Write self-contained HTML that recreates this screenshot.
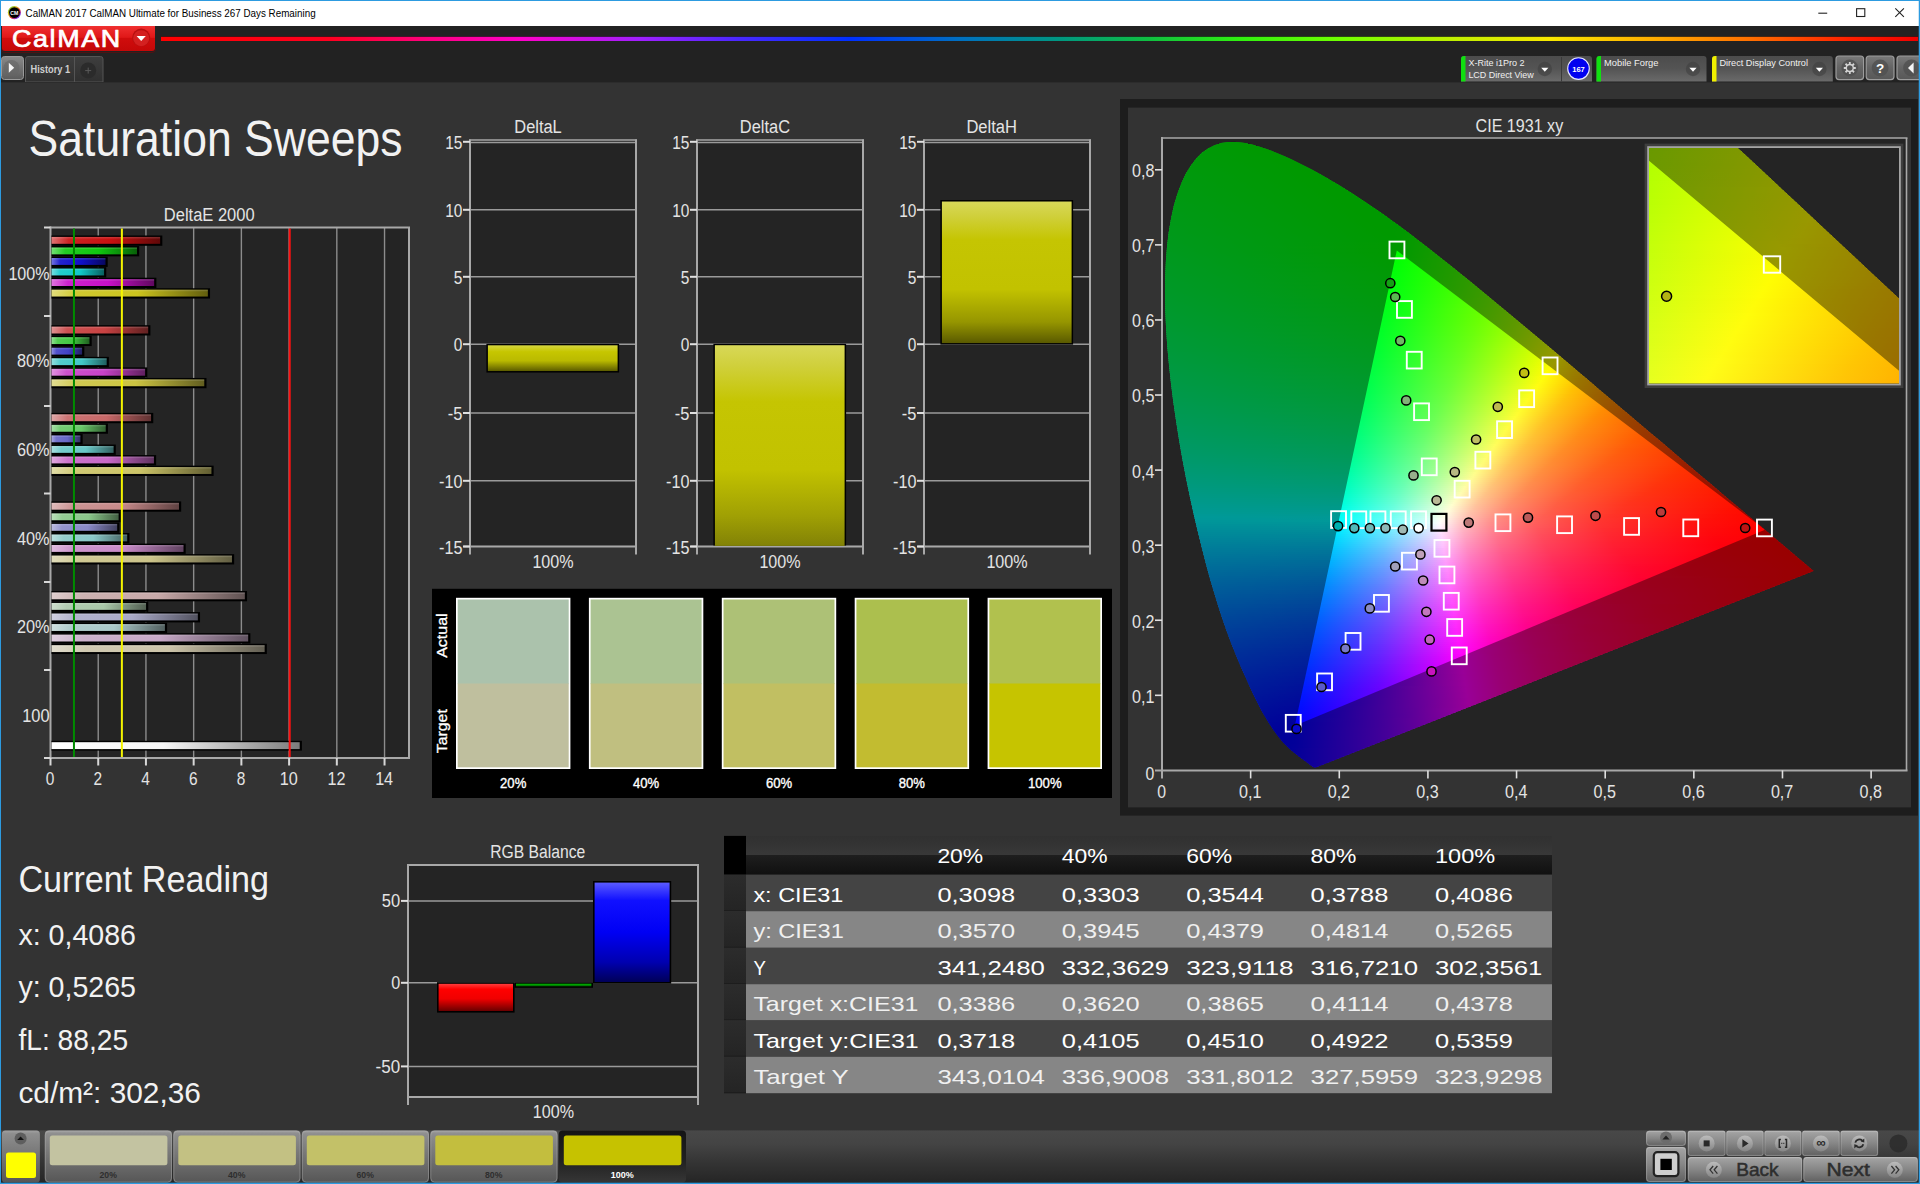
<!DOCTYPE html>
<html lang="en"><head><meta charset="utf-8"><title>CalMAN 2017 - Saturation Sweeps</title>
<style>
html,body{margin:0;padding:0;background:#333;overflow:hidden}
#app{position:absolute;left:0;top:0;width:1920px;height:1184px;overflow:hidden}
svg{display:block}
svg text{font-family:"Liberation Sans",sans-serif;white-space:pre}
</style></head><body><div id="app">
<svg width="1920" height="1184" viewBox="0 0 1920 1184">
<defs>
<linearGradient id="icrim" x1="0" y1="0" x2="1" y2="1"><stop offset="0" stop-color="#30c030"/><stop offset=".35" stop-color="#e0c020"/><stop offset=".6" stop-color="#e03030"/><stop offset=".8" stop-color="#8030e0"/><stop offset="1" stop-color="#2060e0"/></linearGradient>
<linearGradient id="logo" x1="0" y1="0" x2="0" y2="1"><stop offset="0" stop-color="#f03030"/><stop offset="0.45" stop-color="#e01818"/><stop offset="0.5" stop-color="#d00c0c"/><stop offset="1" stop-color="#c40808"/></linearGradient>
<linearGradient id="rain" x1="0" y1="0" x2="1" y2="0"><stop offset="0" stop-color="#ff0000"/><stop offset="0.096" stop-color="#ff0020"/><stop offset="0.153" stop-color="#ff0080"/><stop offset="0.204" stop-color="#ff00c8"/><stop offset="0.273" stop-color="#a020ff"/><stop offset="0.33" stop-color="#4828ff"/><stop offset="0.392" stop-color="#0030ff"/><stop offset="0.455" stop-color="#0070c0"/><stop offset="0.512" stop-color="#009880"/><stop offset="0.563" stop-color="#10c040"/><stop offset="0.614" stop-color="#30f010"/><stop offset="0.671" stop-color="#70ff00"/><stop offset="0.728" stop-color="#b8f000"/><stop offset="0.79" stop-color="#f8e800"/><stop offset="0.847" stop-color="#ffb000"/><stop offset="0.904" stop-color="#ff7000"/><stop offset="0.961" stop-color="#ff2000"/><stop offset="1" stop-color="#f00000"/></linearGradient>
<linearGradient id="gbtn" x1="0" y1="0" x2="0" y2="1"><stop offset="0" stop-color="#8a8a8a"/><stop offset="0.5" stop-color="#727272"/><stop offset="1" stop-color="#5c5c5c"/></linearGradient>
<linearGradient id="tab" x1="0" y1="0" x2="0" y2="1"><stop offset="0" stop-color="#3e3e3e"/><stop offset="1" stop-color="#303030"/></linearGradient>
<linearGradient id="pan" x1="0" y1="0" x2="0" y2="1"><stop offset="0" stop-color="#4c4c4c"/><stop offset="0.5" stop-color="#545454"/><stop offset="1" stop-color="#6a6a6a"/></linearGradient>
<linearGradient id="sqb" x1="0" y1="0" x2="0" y2="1"><stop offset="0" stop-color="#7a7a7a"/><stop offset="0.5" stop-color="#646464"/><stop offset="1" stop-color="#585858"/></linearGradient>
<linearGradient id="hb1" x1="0" y1="0" x2="1" y2="0"><stop offset="0" stop-color="#df7474"/><stop offset="0.16" stop-color="#cc2323"/><stop offset="0.55" stop-color="#c81010"/><stop offset="1" stop-color="#600808"/></linearGradient>
<linearGradient id="hb2" x1="0" y1="0" x2="1" y2="0"><stop offset="0" stop-color="#74df74"/><stop offset="0.16" stop-color="#23cc23"/><stop offset="0.55" stop-color="#10c810"/><stop offset="1" stop-color="#086008"/></linearGradient>
<linearGradient id="hb3" x1="0" y1="0" x2="1" y2="0"><stop offset="0" stop-color="#7474df"/><stop offset="0.16" stop-color="#2323cc"/><stop offset="0.55" stop-color="#1010c8"/><stop offset="1" stop-color="#080860"/></linearGradient>
<linearGradient id="hb4" x1="0" y1="0" x2="1" y2="0"><stop offset="0" stop-color="#74dfdf"/><stop offset="0.16" stop-color="#23cccc"/><stop offset="0.55" stop-color="#10c8c8"/><stop offset="1" stop-color="#086060"/></linearGradient>
<linearGradient id="hb5" x1="0" y1="0" x2="1" y2="0"><stop offset="0" stop-color="#df74df"/><stop offset="0.16" stop-color="#cc23cc"/><stop offset="0.55" stop-color="#c810c8"/><stop offset="1" stop-color="#600860"/></linearGradient>
<linearGradient id="hb6" x1="0" y1="0" x2="1" y2="0"><stop offset="0" stop-color="#e1dd7c"/><stop offset="0.16" stop-color="#d0c930"/><stop offset="0.55" stop-color="#ccc41e"/><stop offset="1" stop-color="#625e0e"/></linearGradient>
<linearGradient id="hb7" x1="0" y1="0" x2="1" y2="0"><stop offset="0" stop-color="#df9292"/><stop offset="0.16" stop-color="#cc5252"/><stop offset="0.55" stop-color="#c84242"/><stop offset="1" stop-color="#602020"/></linearGradient>
<linearGradient id="hb8" x1="0" y1="0" x2="1" y2="0"><stop offset="0" stop-color="#92df92"/><stop offset="0.16" stop-color="#52cc52"/><stop offset="0.55" stop-color="#42c842"/><stop offset="1" stop-color="#206020"/></linearGradient>
<linearGradient id="hb9" x1="0" y1="0" x2="1" y2="0"><stop offset="0" stop-color="#9292df"/><stop offset="0.16" stop-color="#5252cc"/><stop offset="0.55" stop-color="#4242c8"/><stop offset="1" stop-color="#202060"/></linearGradient>
<linearGradient id="hb10" x1="0" y1="0" x2="1" y2="0"><stop offset="0" stop-color="#92dfdf"/><stop offset="0.16" stop-color="#52cccc"/><stop offset="0.55" stop-color="#42c8c8"/><stop offset="1" stop-color="#206060"/></linearGradient>
<linearGradient id="hb11" x1="0" y1="0" x2="1" y2="0"><stop offset="0" stop-color="#df92df"/><stop offset="0.16" stop-color="#cc52cc"/><stop offset="0.55" stop-color="#c842c8"/><stop offset="1" stop-color="#602060"/></linearGradient>
<linearGradient id="hb12" x1="0" y1="0" x2="1" y2="0"><stop offset="0" stop-color="#e1dd92"/><stop offset="0.16" stop-color="#d0c952"/><stop offset="0.55" stop-color="#ccc442"/><stop offset="1" stop-color="#625e20"/></linearGradient>
<linearGradient id="hb13" x1="0" y1="0" x2="1" y2="0"><stop offset="0" stop-color="#dfa8a8"/><stop offset="0.16" stop-color="#cc7474"/><stop offset="0.55" stop-color="#c86868"/><stop offset="1" stop-color="#603232"/></linearGradient>
<linearGradient id="hb14" x1="0" y1="0" x2="1" y2="0"><stop offset="0" stop-color="#a8dfa8"/><stop offset="0.16" stop-color="#74cc74"/><stop offset="0.55" stop-color="#68c868"/><stop offset="1" stop-color="#326032"/></linearGradient>
<linearGradient id="hb15" x1="0" y1="0" x2="1" y2="0"><stop offset="0" stop-color="#a8a8df"/><stop offset="0.16" stop-color="#7474cc"/><stop offset="0.55" stop-color="#6868c8"/><stop offset="1" stop-color="#323260"/></linearGradient>
<linearGradient id="hb16" x1="0" y1="0" x2="1" y2="0"><stop offset="0" stop-color="#a8dfdf"/><stop offset="0.16" stop-color="#74cccc"/><stop offset="0.55" stop-color="#68c8c8"/><stop offset="1" stop-color="#326060"/></linearGradient>
<linearGradient id="hb17" x1="0" y1="0" x2="1" y2="0"><stop offset="0" stop-color="#dfa8df"/><stop offset="0.16" stop-color="#cc74cc"/><stop offset="0.55" stop-color="#c868c8"/><stop offset="1" stop-color="#603260"/></linearGradient>
<linearGradient id="hb18" x1="0" y1="0" x2="1" y2="0"><stop offset="0" stop-color="#e1dda8"/><stop offset="0.16" stop-color="#d0c974"/><stop offset="0.55" stop-color="#ccc468"/><stop offset="1" stop-color="#625e32"/></linearGradient>
<linearGradient id="hb19" x1="0" y1="0" x2="1" y2="0"><stop offset="0" stop-color="#dfbbbb"/><stop offset="0.16" stop-color="#cc9494"/><stop offset="0.55" stop-color="#c88a8a"/><stop offset="1" stop-color="#604242"/></linearGradient>
<linearGradient id="hb20" x1="0" y1="0" x2="1" y2="0"><stop offset="0" stop-color="#bbdfbb"/><stop offset="0.16" stop-color="#94cc94"/><stop offset="0.55" stop-color="#8ac88a"/><stop offset="1" stop-color="#426042"/></linearGradient>
<linearGradient id="hb21" x1="0" y1="0" x2="1" y2="0"><stop offset="0" stop-color="#bbbbdf"/><stop offset="0.16" stop-color="#9494cc"/><stop offset="0.55" stop-color="#8a8ac8"/><stop offset="1" stop-color="#424260"/></linearGradient>
<linearGradient id="hb22" x1="0" y1="0" x2="1" y2="0"><stop offset="0" stop-color="#bbdfdf"/><stop offset="0.16" stop-color="#94cccc"/><stop offset="0.55" stop-color="#8ac8c8"/><stop offset="1" stop-color="#426060"/></linearGradient>
<linearGradient id="hb23" x1="0" y1="0" x2="1" y2="0"><stop offset="0" stop-color="#dfbbdf"/><stop offset="0.16" stop-color="#cc94cc"/><stop offset="0.55" stop-color="#c88ac8"/><stop offset="1" stop-color="#604260"/></linearGradient>
<linearGradient id="hb24" x1="0" y1="0" x2="1" y2="0"><stop offset="0" stop-color="#e1ddbb"/><stop offset="0.16" stop-color="#d0c994"/><stop offset="0.55" stop-color="#ccc48a"/><stop offset="1" stop-color="#625e42"/></linearGradient>
<linearGradient id="hb25" x1="0" y1="0" x2="1" y2="0"><stop offset="0" stop-color="#dfcece"/><stop offset="0.16" stop-color="#ccb1b1"/><stop offset="0.55" stop-color="#c8a9a9"/><stop offset="1" stop-color="#605252"/></linearGradient>
<linearGradient id="hb26" x1="0" y1="0" x2="1" y2="0"><stop offset="0" stop-color="#cedfce"/><stop offset="0.16" stop-color="#b1ccb1"/><stop offset="0.55" stop-color="#a9c8a9"/><stop offset="1" stop-color="#526052"/></linearGradient>
<linearGradient id="hb27" x1="0" y1="0" x2="1" y2="0"><stop offset="0" stop-color="#cecedf"/><stop offset="0.16" stop-color="#b1b1cc"/><stop offset="0.55" stop-color="#a9a9c8"/><stop offset="1" stop-color="#525260"/></linearGradient>
<linearGradient id="hb28" x1="0" y1="0" x2="1" y2="0"><stop offset="0" stop-color="#cedfdf"/><stop offset="0.16" stop-color="#b1cccc"/><stop offset="0.55" stop-color="#a9c8c8"/><stop offset="1" stop-color="#526060"/></linearGradient>
<linearGradient id="hb29" x1="0" y1="0" x2="1" y2="0"><stop offset="0" stop-color="#dfcedf"/><stop offset="0.16" stop-color="#ccb1cc"/><stop offset="0.55" stop-color="#c8a9c8"/><stop offset="1" stop-color="#605260"/></linearGradient>
<linearGradient id="hb30" x1="0" y1="0" x2="1" y2="0"><stop offset="0" stop-color="#e1ddce"/><stop offset="0.16" stop-color="#d0c9b1"/><stop offset="0.55" stop-color="#ccc4a9"/><stop offset="1" stop-color="#625e52"/></linearGradient>
<linearGradient id="hb31" x1="0" y1="0" x2="1" y2="0"><stop offset="0" stop-color="#ffffff"/><stop offset="0.45" stop-color="#f4f4f4"/><stop offset="1" stop-color="#7c7c7c"/></linearGradient>
<linearGradient id="ybar" x1="0" y1="0" x2="0" y2="1"><stop offset="0" stop-color="#d8d858"/><stop offset="0.1" stop-color="#d0d03c"/><stop offset="0.27" stop-color="#c5c502"/><stop offset="0.62" stop-color="#c2c200"/><stop offset="0.85" stop-color="#969600"/><stop offset="1" stop-color="#5a5a00"/></linearGradient>
<linearGradient id="ybarC" x1="0" y1="0" x2="0" y2="1"><stop offset="0" stop-color="#d8d858"/><stop offset="0.1" stop-color="#d0d03c"/><stop offset="0.28" stop-color="#c5c502"/><stop offset="0.62" stop-color="#c2c200"/><stop offset="0.85" stop-color="#a0a004"/><stop offset="1" stop-color="#828206"/></linearGradient>
<linearGradient id="ybarS" x1="0" y1="0" x2="0" y2="1"><stop offset="0" stop-color="#d6d640"/><stop offset="0.25" stop-color="#c6c600"/><stop offset="0.6" stop-color="#baba00"/><stop offset="1" stop-color="#5c5c00"/></linearGradient>
<clipPath id="locclip"><path d="M1316.2 767.3 L1316.2 767.3 L1316.1 767.3 L1316.1 767.3 L1316.1 767.3 L1316.1 767.3 L1316.0 767.3 L1316.0 767.4 L1316.0 767.4 L1315.9 767.4 L1315.9 767.4 L1315.9 767.4 L1315.8 767.4 L1315.8 767.4 L1315.8 767.4 L1315.7 767.4 L1315.7 767.4 L1315.6 767.4 L1315.6 767.4 L1315.5 767.5 L1315.5 767.5 L1315.4 767.5 L1315.3 767.5 L1315.3 767.5 L1315.2 767.5 L1315.2 767.5 L1315.1 767.5 L1315.1 767.5 L1315.0 767.5 L1314.9 767.5 L1314.8 767.5 L1314.7 767.5 L1314.7 767.5 L1314.6 767.5 L1314.5 767.5 L1314.4 767.5 L1314.3 767.5 L1314.2 767.4 L1314.1 767.4 L1313.9 767.3 L1313.8 767.3 L1313.6 767.2 L1313.4 767.1 L1313.2 767.0 L1313.0 766.9 L1312.8 766.7 L1312.6 766.6 L1312.3 766.4 L1312.1 766.3 L1311.8 766.1 L1311.5 765.9 L1311.2 765.7 L1310.9 765.4 L1310.5 765.2 L1310.2 764.9 L1309.8 764.6 L1309.4 764.3 L1308.9 764.0 L1308.5 763.6 L1308.0 763.3 L1307.6 762.9 L1307.0 762.5 L1306.5 762.1 L1305.9 761.6 L1305.3 761.2 L1304.6 760.7 L1303.9 760.2 L1303.2 759.6 L1302.4 759.0 L1301.5 758.4 L1300.6 757.7 L1299.7 757.1 L1298.8 756.4 L1297.8 755.6 L1296.8 754.8 L1295.7 754.0 L1294.5 753.1 L1293.3 752.1 L1292.1 751.0 L1290.8 749.9 L1289.5 748.7 L1288.1 747.4 L1286.7 746.1 L1285.2 744.6 L1283.6 742.9 L1281.9 741.0 L1280.1 738.8 L1278.2 736.4 L1276.2 733.7 L1274.0 730.8 L1271.8 727.5 L1269.5 723.9 L1267.0 720.0 L1264.4 715.6 L1261.7 710.9 L1258.9 705.6 L1256.0 699.8 L1252.9 693.5 L1249.7 686.6 L1246.3 679.1 L1242.7 671.0 L1238.9 662.2 L1235.0 652.7 L1230.9 642.4 L1226.8 631.5 L1222.7 619.7 L1218.5 607.1 L1214.4 593.6 L1210.2 579.4 L1206.1 564.4 L1202.0 548.5 L1197.9 531.9 L1193.8 514.6 L1189.9 496.7 L1186.1 478.4 L1182.5 459.7 L1179.2 440.8 L1176.2 421.7 L1173.4 402.6 L1171.0 383.6 L1169.0 364.9 L1167.3 346.4 L1166.1 328.4 L1165.3 310.7 L1165.0 293.6 L1165.2 277.1 L1165.9 261.1 L1167.1 245.8 L1168.8 231.4 L1171.2 217.7 L1174.0 205.1 L1177.5 193.4 L1181.5 182.9 L1185.9 173.5 L1190.9 165.4 L1196.2 158.4 L1201.9 152.8 L1208.0 148.5 L1214.3 145.3 L1220.9 143.1 L1227.6 142.0 L1234.5 141.8 L1241.5 142.4 L1248.6 143.6 L1255.8 145.5 L1263.0 147.7 L1270.3 150.3 L1277.5 153.2 L1284.7 156.3 L1291.9 159.6 L1298.9 163.0 L1305.9 166.5 L1312.8 170.1 L1319.5 173.8 L1326.2 177.5 L1332.8 181.4 L1339.4 185.3 L1346.0 189.4 L1352.5 193.5 L1358.9 197.7 L1365.4 202.0 L1371.9 206.4 L1378.3 210.8 L1384.7 215.3 L1391.1 220.0 L1397.5 224.6 L1403.9 229.3 L1410.3 234.1 L1416.6 239.0 L1422.9 243.8 L1429.3 248.8 L1435.6 253.7 L1441.9 258.7 L1448.3 263.8 L1454.6 268.8 L1461.0 274.0 L1467.3 279.1 L1473.7 284.3 L1480.0 289.5 L1486.4 294.7 L1492.7 299.9 L1499.0 305.2 L1505.4 310.4 L1511.7 315.7 L1518.0 321.0 L1524.3 326.2 L1530.6 331.5 L1536.9 336.8 L1543.2 342.1 L1549.5 347.3 L1555.7 352.6 L1561.9 357.8 L1568.1 363.0 L1574.3 368.3 L1580.4 373.4 L1586.5 378.6 L1592.6 383.7 L1598.6 388.9 L1604.6 393.9 L1610.5 399.0 L1616.4 404.0 L1622.2 408.9 L1628.0 413.8 L1633.8 418.7 L1639.4 423.5 L1645.0 428.3 L1650.6 432.9 L1656.1 437.6 L1661.5 442.1 L1666.8 446.6 L1672.0 451.0 L1677.2 455.4 L1682.2 459.7 L1687.1 463.9 L1691.9 468.0 L1696.6 471.9 L1701.1 475.8 L1705.5 479.5 L1709.8 483.1 L1713.9 486.6 L1718.0 490.0 L1721.9 493.4 L1725.8 496.7 L1729.6 499.9 L1733.3 503.0 L1736.8 506.0 L1740.2 508.8 L1743.4 511.5 L1746.5 514.2 L1749.5 516.7 L1752.4 519.1 L1755.2 521.4 L1757.8 523.7 L1760.3 525.8 L1762.8 527.9 L1765.1 529.9 L1767.3 531.8 L1769.4 533.6 L1771.4 535.3 L1773.4 536.9 L1775.2 538.5 L1777.0 540.0 L1778.6 541.4 L1780.3 542.7 L1781.8 544.0 L1783.3 545.3 L1784.7 546.5 L1786.0 547.6 L1787.3 548.7 L1788.6 549.8 L1789.7 550.8 L1790.9 551.8 L1792.0 552.7 L1793.1 553.6 L1794.2 554.5 L1795.2 555.4 L1796.1 556.2 L1797.0 557.0 L1797.9 557.8 L1798.8 558.5 L1799.6 559.2 L1800.4 559.8 L1801.1 560.4 L1801.8 561.0 L1802.5 561.6 L1803.1 562.1 L1803.7 562.6 L1804.3 563.1 L1804.8 563.5 L1805.3 564.0 L1805.8 564.4 L1806.3 564.8 L1806.7 565.1 L1807.1 565.5 L1807.5 565.8 L1807.8 566.1 L1808.2 566.4 L1808.5 566.7 L1808.8 566.9 L1809.1 567.2 L1809.4 567.4 L1809.6 567.6 L1809.8 567.8 L1810.0 567.9 L1810.2 568.1 L1810.3 568.2 L1810.5 568.4 L1810.7 568.5 L1810.8 568.6 L1811.0 568.8 L1811.1 568.9 L1811.3 569.0 L1811.4 569.1 L1811.5 569.2 L1811.6 569.3 L1811.8 569.4 L1811.9 569.5 L1812.0 569.6 L1812.1 569.7 L1812.3 569.8 L1812.4 570.0 L1812.5 570.1 L1812.6 570.1 L1812.7 570.2 L1812.8 570.3 L1812.9 570.4 L1813.0 570.5 L1813.1 570.5 L1813.1 570.6 L1813.2 570.7 L1813.3 570.7 L1813.3 570.7 L1813.3 570.8 L1813.4 570.8 L1813.4 570.8 L1813.4 570.9 L1813.5 570.9 L1813.5 570.9 L1813.5 570.9 L1813.5 570.9 L1813.5 570.9 Z"/></clipPath>
<linearGradient id="c0" gradientUnits="userSpaceOnUse" x1="1220" x2="1247" y1="0" y2="0"><stop offset="0" stop-color="#00ff07"/><stop offset="1" stop-color="#00ff02"/></linearGradient>
<linearGradient id="c1" gradientUnits="userSpaceOnUse" x1="1214" x2="1255" y1="0" y2="0"><stop offset="0" stop-color="#00ff08"/><stop offset="1" stop-color="#00ff01"/></linearGradient>
<linearGradient id="c2" gradientUnits="userSpaceOnUse" x1="1209" x2="1262" y1="0" y2="0"><stop offset="0" stop-color="#00ff0a"/><stop offset="1" stop-color="#00ff00"/></linearGradient>
<linearGradient id="c3" gradientUnits="userSpaceOnUse" x1="1206" x2="1268" y1="0" y2="0"><stop offset="0" stop-color="#00ff0b"/><stop offset="1" stop-color="#00ff00"/></linearGradient>
<linearGradient id="c4" gradientUnits="userSpaceOnUse" x1="1203" x2="1273" y1="0" y2="0"><stop offset="0" stop-color="#00ff0c"/><stop offset="1" stop-color="#00ff00"/></linearGradient>
<linearGradient id="c5" gradientUnits="userSpaceOnUse" x1="1200" x2="1278" y1="0" y2="0"><stop offset="0" stop-color="#00ff0d"/><stop offset="1" stop-color="#00ff00"/></linearGradient>
<linearGradient id="c6" gradientUnits="userSpaceOnUse" x1="1198" x2="1283" y1="0" y2="0"><stop offset="0" stop-color="#00ff0e"/><stop offset="1" stop-color="#00ff00"/></linearGradient>
<linearGradient id="c7" gradientUnits="userSpaceOnUse" x1="1196" x2="1288" y1="0" y2="0"><stop offset="0" stop-color="#00ff0f"/><stop offset="1" stop-color="#00ff00"/></linearGradient>
<linearGradient id="c8" gradientUnits="userSpaceOnUse" x1="1194" x2="1292" y1="0" y2="0"><stop offset="0" stop-color="#00ff0f"/><stop offset="1" stop-color="#00ff00"/></linearGradient>
<linearGradient id="c9" gradientUnits="userSpaceOnUse" x1="1193" x2="1296" y1="0" y2="0"><stop offset="0" stop-color="#00ff10"/><stop offset="1" stop-color="#00ff00"/></linearGradient>
<linearGradient id="c10" gradientUnits="userSpaceOnUse" x1="1191" x2="1300" y1="0" y2="0"><stop offset="0" stop-color="#00ff11"/><stop offset="1" stop-color="#00ff00"/></linearGradient>
<linearGradient id="c11" gradientUnits="userSpaceOnUse" x1="1190" x2="1304" y1="0" y2="0"><stop offset="0" stop-color="#00ff12"/><stop offset="0.9912" stop-color="#00ff00"/><stop offset="1" stop-color="#00ff00"/></linearGradient>
<linearGradient id="c12" gradientUnits="userSpaceOnUse" x1="1188" x2="1308" y1="0" y2="0"><stop offset="0" stop-color="#00ff13"/><stop offset="0.975" stop-color="#00ff00"/><stop offset="1" stop-color="#00ff00"/></linearGradient>
<linearGradient id="c13" gradientUnits="userSpaceOnUse" x1="1187" x2="1312" y1="0" y2="0"><stop offset="0" stop-color="#00ff14"/><stop offset="0.968" stop-color="#00ff00"/><stop offset="1" stop-color="#00ff00"/></linearGradient>
<linearGradient id="c14" gradientUnits="userSpaceOnUse" x1="1186" x2="1316" y1="0" y2="0"><stop offset="0" stop-color="#00ff14"/><stop offset="0.9538" stop-color="#00ff00"/><stop offset="1" stop-color="#00ff00"/></linearGradient>
<linearGradient id="c15" gradientUnits="userSpaceOnUse" x1="1185" x2="1320" y1="0" y2="0"><stop offset="0" stop-color="#00ff15"/><stop offset="0.9481" stop-color="#00ff00"/><stop offset="1" stop-color="#00ff00"/></linearGradient>
<linearGradient id="c16" gradientUnits="userSpaceOnUse" x1="1184" x2="1323" y1="0" y2="0"><stop offset="0" stop-color="#00ff16"/><stop offset="0.9424" stop-color="#00ff00"/><stop offset="1" stop-color="#00ff00"/></linearGradient>
<linearGradient id="c17" gradientUnits="userSpaceOnUse" x1="1183" x2="1327" y1="0" y2="0"><stop offset="0" stop-color="#00ff17"/><stop offset="0.9306" stop-color="#00ff00"/><stop offset="1" stop-color="#00ff00"/></linearGradient>
<linearGradient id="c18" gradientUnits="userSpaceOnUse" x1="1182" x2="1330" y1="0" y2="0"><stop offset="0" stop-color="#00ff17"/><stop offset="0.9324" stop-color="#00ff00"/><stop offset="1" stop-color="#00ff00"/></linearGradient>
<linearGradient id="c19" gradientUnits="userSpaceOnUse" x1="1181" x2="1334" y1="0" y2="0"><stop offset="0" stop-color="#00ff18"/><stop offset="0.9216" stop-color="#00ff00"/><stop offset="1" stop-color="#00ff00"/></linearGradient>
<linearGradient id="c20" gradientUnits="userSpaceOnUse" x1="1180" x2="1337" y1="0" y2="0"><stop offset="0" stop-color="#00ff19"/><stop offset="0.9236" stop-color="#00ff00"/><stop offset="1" stop-color="#00ff00"/></linearGradient>
<linearGradient id="c21" gradientUnits="userSpaceOnUse" x1="1179" x2="1340" y1="0" y2="0"><stop offset="0" stop-color="#00ff1a"/><stop offset="0.9193" stop-color="#00ff00"/><stop offset="1" stop-color="#00ff00"/></linearGradient>
<linearGradient id="c22" gradientUnits="userSpaceOnUse" x1="1178" x2="1344" y1="0" y2="0"><stop offset="0" stop-color="#00ff1a"/><stop offset="0.9157" stop-color="#00ff00"/><stop offset="1" stop-color="#00ff00"/></linearGradient>
<linearGradient id="c23" gradientUnits="userSpaceOnUse" x1="1178" x2="1347" y1="0" y2="0"><stop offset="0" stop-color="#00ff1b"/><stop offset="0.9172" stop-color="#00ff00"/><stop offset="1" stop-color="#00ff00"/></linearGradient>
<linearGradient id="c24" gradientUnits="userSpaceOnUse" x1="1177" x2="1350" y1="0" y2="0"><stop offset="0" stop-color="#00ff1c"/><stop offset="0.9133" stop-color="#00ff00"/><stop offset="1" stop-color="#00ff00"/></linearGradient>
<linearGradient id="c25" gradientUnits="userSpaceOnUse" x1="1176" x2="1353" y1="0" y2="0"><stop offset="0" stop-color="#00ff1d"/><stop offset="0.9096" stop-color="#00ff00"/><stop offset="1" stop-color="#00ff00"/></linearGradient>
<linearGradient id="c26" gradientUnits="userSpaceOnUse" x1="1176" x2="1356" y1="0" y2="0"><stop offset="0" stop-color="#00ff1d"/><stop offset="0.9111" stop-color="#00ff00"/><stop offset="1" stop-color="#00ff00"/></linearGradient>
<linearGradient id="c27" gradientUnits="userSpaceOnUse" x1="1175" x2="1359" y1="0" y2="0"><stop offset="0" stop-color="#00ff1e"/><stop offset="0.913" stop-color="#00ff00"/><stop offset="1" stop-color="#00ff00"/></linearGradient>
<linearGradient id="c28" gradientUnits="userSpaceOnUse" x1="1174" x2="1362" y1="0" y2="0"><stop offset="0" stop-color="#00ff1f"/><stop offset="0.9096" stop-color="#00ff00"/><stop offset="1" stop-color="#00ff00"/></linearGradient>
<linearGradient id="c29" gradientUnits="userSpaceOnUse" x1="1174" x2="1365" y1="0" y2="0"><stop offset="0" stop-color="#00ff1f"/><stop offset="0.911" stop-color="#00ff00"/><stop offset="1" stop-color="#00ff00"/></linearGradient>
<linearGradient id="c30" gradientUnits="userSpaceOnUse" x1="1173" x2="1368" y1="0" y2="0"><stop offset="0" stop-color="#00ff20"/><stop offset="0.9077" stop-color="#00ff00"/><stop offset="1" stop-color="#00ff00"/></linearGradient>
<linearGradient id="c31" gradientUnits="userSpaceOnUse" x1="1173" x2="1371" y1="0" y2="0"><stop offset="0" stop-color="#00ff21"/><stop offset="0.9091" stop-color="#00ff00"/><stop offset="1" stop-color="#00ff00"/></linearGradient>
<linearGradient id="c32" gradientUnits="userSpaceOnUse" x1="1172" x2="1374" y1="0" y2="0"><stop offset="0" stop-color="#00ff22"/><stop offset="0.9059" stop-color="#00ff00"/><stop offset="1" stop-color="#00ff00"/></linearGradient>
<linearGradient id="c33" gradientUnits="userSpaceOnUse" x1="1172" x2="1377" y1="0" y2="0"><stop offset="0" stop-color="#00ff22"/><stop offset="0.9073" stop-color="#00ff00"/><stop offset="1" stop-color="#00ff00"/></linearGradient>
<linearGradient id="c34" gradientUnits="userSpaceOnUse" x1="1171" x2="1380" y1="0" y2="0"><stop offset="0" stop-color="#00ff23"/><stop offset="0.9091" stop-color="#00ff00"/><stop offset="1" stop-color="#00ff00"/></linearGradient>
<linearGradient id="c35" gradientUnits="userSpaceOnUse" x1="1171" x2="1383" y1="0" y2="0"><stop offset="0" stop-color="#00ff24"/><stop offset="0.9057" stop-color="#00ff00"/><stop offset="1" stop-color="#00ff00"/></linearGradient>
<linearGradient id="c36" gradientUnits="userSpaceOnUse" x1="1170" x2="1386" y1="0" y2="0"><stop offset="0" stop-color="#00ff25"/><stop offset="0.9074" stop-color="#00ff00"/><stop offset="1" stop-color="#00ff00"/></linearGradient>
<linearGradient id="c37" gradientUnits="userSpaceOnUse" x1="1170" x2="1389" y1="0" y2="0"><stop offset="0" stop-color="#00ff25"/><stop offset="0.9041" stop-color="#00ff00"/><stop offset="1" stop-color="#00ff00"/></linearGradient>
<linearGradient id="c38" gradientUnits="userSpaceOnUse" x1="1169" x2="1391" y1="0" y2="0"><stop offset="0" stop-color="#00ff26"/><stop offset="0.9099" stop-color="#00ff00"/><stop offset="1" stop-color="#00ff00"/></linearGradient>
<linearGradient id="c39" gradientUnits="userSpaceOnUse" x1="1169" x2="1394" y1="0" y2="0"><stop offset="0" stop-color="#00ff27"/><stop offset="0.9067" stop-color="#00ff00"/><stop offset="1" stop-color="#00ff00"/></linearGradient>
<linearGradient id="c40" gradientUnits="userSpaceOnUse" x1="1169" x2="1397" y1="0" y2="0"><stop offset="0" stop-color="#00ff28"/><stop offset="0.9079" stop-color="#00ff00"/><stop offset="1" stop-color="#00ff00"/></linearGradient>
<linearGradient id="c41" gradientUnits="userSpaceOnUse" x1="1168" x2="1400" y1="0" y2="0"><stop offset="0" stop-color="#00ff28"/><stop offset="0.9052" stop-color="#00ff00"/><stop offset="1" stop-color="#00ff00"/></linearGradient>
<linearGradient id="c42" gradientUnits="userSpaceOnUse" x1="1168" x2="1402" y1="0" y2="0"><stop offset="0" stop-color="#00ff29"/><stop offset="0.9103" stop-color="#00ff00"/><stop offset="1" stop-color="#00ff00"/></linearGradient>
<linearGradient id="c43" gradientUnits="userSpaceOnUse" x1="1168" x2="1405" y1="0" y2="0"><stop offset="0" stop-color="#00ff2a"/><stop offset="0.9114" stop-color="#00ff00"/><stop offset="1" stop-color="#03ff00"/></linearGradient>
<linearGradient id="c44" gradientUnits="userSpaceOnUse" x1="1167" x2="1408" y1="0" y2="0"><stop offset="0" stop-color="#00ff2b"/><stop offset="0.9087" stop-color="#00ff00"/><stop offset="0.9876" stop-color="#03ff00"/><stop offset="1" stop-color="#06ff00"/></linearGradient>
<linearGradient id="c45" gradientUnits="userSpaceOnUse" x1="1167" x2="1410" y1="0" y2="0"><stop offset="0" stop-color="#00ff2b"/><stop offset="0.9136" stop-color="#00ff00"/><stop offset="0.9835" stop-color="#04ff00"/><stop offset="1" stop-color="#08ff00"/></linearGradient>
<linearGradient id="c46" gradientUnits="userSpaceOnUse" x1="1167" x2="1413" y1="0" y2="0"><stop offset="0" stop-color="#00ff2c"/><stop offset="0.9106" stop-color="#00ff00"/><stop offset="0.9715" stop-color="#05ff00"/><stop offset="1" stop-color="#0bff00"/></linearGradient>
<linearGradient id="c47" gradientUnits="userSpaceOnUse" x1="1167" x2="1416" y1="0" y2="0"><stop offset="0" stop-color="#00ff2d"/><stop offset="0.9116" stop-color="#00ff00"/><stop offset="0.9759" stop-color="#08ff00"/><stop offset="1" stop-color="#0dff00"/></linearGradient>
<linearGradient id="c48" gradientUnits="userSpaceOnUse" x1="1166" x2="1418" y1="0" y2="0"><stop offset="0" stop-color="#00ff2e"/><stop offset="0.9127" stop-color="#00ff00"/><stop offset="1" stop-color="#10ff00"/></linearGradient>
<linearGradient id="c49" gradientUnits="userSpaceOnUse" x1="1166" x2="1421" y1="0" y2="0"><stop offset="0" stop-color="#00ff2f"/><stop offset="0.9137" stop-color="#00ff00"/><stop offset="1" stop-color="#13ff00"/></linearGradient>
<linearGradient id="c50" gradientUnits="userSpaceOnUse" x1="1166" x2="1423" y1="0" y2="0"><stop offset="0" stop-color="#00ff2f"/><stop offset="0.9144" stop-color="#02ff00"/><stop offset="1" stop-color="#15ff00"/></linearGradient>
<linearGradient id="c51" gradientUnits="userSpaceOnUse" x1="1166" x2="1426" y1="0" y2="0"><stop offset="0" stop-color="#00ff30"/><stop offset="0.9038" stop-color="#02ff00"/><stop offset="1" stop-color="#18ff00"/></linearGradient>
<linearGradient id="c52" gradientUnits="userSpaceOnUse" x1="1165" x2="1429" y1="0" y2="0"><stop offset="0" stop-color="#00ff31"/><stop offset="0.8939" stop-color="#03ff00"/><stop offset="1" stop-color="#1bff00"/></linearGradient>
<linearGradient id="c53" gradientUnits="userSpaceOnUse" x1="1165" x2="1431" y1="0" y2="0"><stop offset="0" stop-color="#00ff32"/><stop offset="0.8835" stop-color="#02ff00"/><stop offset="1" stop-color="#1dff00"/></linearGradient>
<linearGradient id="c54" gradientUnits="userSpaceOnUse" x1="1165" x2="1434" y1="0" y2="0"><stop offset="0" stop-color="#00ff32"/><stop offset="0.8736" stop-color="#03ff00"/><stop offset="1" stop-color="#20ff00"/></linearGradient>
<linearGradient id="c55" gradientUnits="userSpaceOnUse" x1="1165" x2="1436" y1="0" y2="0"><stop offset="0" stop-color="#00ff33"/><stop offset="0.8635" stop-color="#02ff00"/><stop offset="1" stop-color="#23ff00"/></linearGradient>
<linearGradient id="c56" gradientUnits="userSpaceOnUse" x1="1165" x2="1439" y1="0" y2="0"><stop offset="0" stop-color="#00ff34"/><stop offset="0.854" stop-color="#03ff01"/><stop offset="1" stop-color="#26ff00"/></linearGradient>
<linearGradient id="c57" gradientUnits="userSpaceOnUse" x1="1165" x2="1441" y1="0" y2="0"><stop offset="0" stop-color="#00ff35"/><stop offset="0.8478" stop-color="#03ff02"/><stop offset="1" stop-color="#28ff00"/></linearGradient>
<linearGradient id="c58" gradientUnits="userSpaceOnUse" x1="1165" x2="1444" y1="0" y2="0"><stop offset="0" stop-color="#00ff36"/><stop offset="0.8351" stop-color="#03ff03"/><stop offset="1" stop-color="#2cff00"/></linearGradient>
<linearGradient id="c59" gradientUnits="userSpaceOnUse" x1="1164" x2="1446" y1="0" y2="0"><stop offset="0" stop-color="#00ff37"/><stop offset="0.8298" stop-color="#03ff03"/><stop offset="1" stop-color="#2eff00"/></linearGradient>
<linearGradient id="c60" gradientUnits="userSpaceOnUse" x1="1164" x2="1449" y1="0" y2="0"><stop offset="0" stop-color="#00ff37"/><stop offset="0.8175" stop-color="#02ff04"/><stop offset="0.9965" stop-color="#31ff00"/><stop offset="1" stop-color="#32ff00"/></linearGradient>
<linearGradient id="c61" gradientUnits="userSpaceOnUse" x1="1164" x2="1451" y1="0" y2="0"><stop offset="0" stop-color="#00ff38"/><stop offset="0.8118" stop-color="#03ff05"/><stop offset="0.9652" stop-color="#2bff00"/><stop offset="1" stop-color="#34ff00"/></linearGradient>
<linearGradient id="c62" gradientUnits="userSpaceOnUse" x1="1164" x2="1454" y1="0" y2="0"><stop offset="0" stop-color="#00ff39"/><stop offset="0.8" stop-color="#02ff06"/><stop offset="0.9517" stop-color="#2aff00"/><stop offset="1" stop-color="#38ff00"/></linearGradient>
<linearGradient id="c63" gradientUnits="userSpaceOnUse" x1="1164" x2="1456" y1="0" y2="0"><stop offset="0" stop-color="#00ff3a"/><stop offset="0.7945" stop-color="#03ff07"/><stop offset="0.9452" stop-color="#2bff00"/><stop offset="1" stop-color="#3bff00"/></linearGradient>
<linearGradient id="c64" gradientUnits="userSpaceOnUse" x1="1164" x2="1459" y1="0" y2="0"><stop offset="0" stop-color="#00ff3b"/><stop offset="0.7831" stop-color="#02ff08"/><stop offset="0.939" stop-color="#2dff00"/><stop offset="1" stop-color="#3eff00"/></linearGradient>
<linearGradient id="c65" gradientUnits="userSpaceOnUse" x1="1164" x2="1461" y1="0" y2="0"><stop offset="0" stop-color="#00ff3b"/><stop offset="0.7778" stop-color="#03ff09"/><stop offset="0.9394" stop-color="#2fff00"/><stop offset="1" stop-color="#41ff00"/></linearGradient>
<linearGradient id="c66" gradientUnits="userSpaceOnUse" x1="1164" x2="1464" y1="0" y2="0"><stop offset="0" stop-color="#00ff3c"/><stop offset="0.77" stop-color="#03ff0a"/><stop offset="0.9333" stop-color="#31ff00"/><stop offset="1" stop-color="#45ff00"/></linearGradient>
<linearGradient id="c67" gradientUnits="userSpaceOnUse" x1="1164" x2="1466" y1="0" y2="0"><stop offset="0" stop-color="#00ff3d"/><stop offset="0.7616" stop-color="#03ff0b"/><stop offset="0.9338" stop-color="#33ff00"/><stop offset="1" stop-color="#48ff00"/></linearGradient>
<linearGradient id="c68" gradientUnits="userSpaceOnUse" x1="1164" x2="1469" y1="0" y2="0"><stop offset="0" stop-color="#00ff3e"/><stop offset="0.7541" stop-color="#03ff0b"/><stop offset="0.9311" stop-color="#36ff00"/><stop offset="1" stop-color="#4cff00"/></linearGradient>
<linearGradient id="c69" gradientUnits="userSpaceOnUse" x1="1164" x2="1471" y1="0" y2="0"><stop offset="0" stop-color="#00ff3f"/><stop offset="0.7459" stop-color="#02ff0d"/><stop offset="0.9316" stop-color="#39ff00"/><stop offset="1" stop-color="#4fff00"/></linearGradient>
<linearGradient id="c70" gradientUnits="userSpaceOnUse" x1="1164" x2="1474" y1="0" y2="0"><stop offset="0" stop-color="#00ff40"/><stop offset="0.7387" stop-color="#03ff0d"/><stop offset="0.9323" stop-color="#3dff00"/><stop offset="1" stop-color="#53ff00"/></linearGradient>
<linearGradient id="c71" gradientUnits="userSpaceOnUse" x1="1164" x2="1476" y1="0" y2="0"><stop offset="0" stop-color="#00ff41"/><stop offset="0.7308" stop-color="#02ff0e"/><stop offset="0.9327" stop-color="#3fff00"/><stop offset="1" stop-color="#56ff00"/></linearGradient>
<linearGradient id="c72" gradientUnits="userSpaceOnUse" x1="1164" x2="1479" y1="0" y2="0"><stop offset="0" stop-color="#00ff41"/><stop offset="0.7238" stop-color="#03ff0f"/><stop offset="0.9302" stop-color="#42ff00"/><stop offset="1" stop-color="#5aff00"/></linearGradient>
<linearGradient id="c73" gradientUnits="userSpaceOnUse" x1="1164" x2="1481" y1="0" y2="0"><stop offset="0" stop-color="#00ff42"/><stop offset="0.7161" stop-color="#02ff10"/><stop offset="0.9338" stop-color="#46ff00"/><stop offset="1" stop-color="#5dff00"/></linearGradient>
<linearGradient id="c74" gradientUnits="userSpaceOnUse" x1="1164" x2="1483" y1="0" y2="0"><stop offset="0" stop-color="#00ff43"/><stop offset="0.7116" stop-color="#03ff11"/><stop offset="0.9342" stop-color="#49ff00"/><stop offset="1" stop-color="#60ff00"/></linearGradient>
<linearGradient id="c75" gradientUnits="userSpaceOnUse" x1="1163" x2="1486" y1="0" y2="0"><stop offset="0" stop-color="#00ff44"/><stop offset="0.7059" stop-color="#03ff12"/><stop offset="0.935" stop-color="#4dff00"/><stop offset="1" stop-color="#65ff00"/></linearGradient>
<linearGradient id="c76" gradientUnits="userSpaceOnUse" x1="1164" x2="1488" y1="0" y2="0"><stop offset="0" stop-color="#00ff45"/><stop offset="0.6975" stop-color="#03ff13"/><stop offset="0.9352" stop-color="#50ff00"/><stop offset="1" stop-color="#68ff00"/></linearGradient>
<linearGradient id="c77" gradientUnits="userSpaceOnUse" x1="1164" x2="1491" y1="0" y2="0"><stop offset="0" stop-color="#00ff46"/><stop offset="0.6911" stop-color="#03ff14"/><stop offset="0.9358" stop-color="#54ff00"/><stop offset="1" stop-color="#6cff00"/></linearGradient>
<linearGradient id="c78" gradientUnits="userSpaceOnUse" x1="1164" x2="1493" y1="0" y2="0"><stop offset="0" stop-color="#00ff47"/><stop offset="0.6839" stop-color="#02ff15"/><stop offset="0.9362" stop-color="#58ff00"/><stop offset="1" stop-color="#70ff00"/></linearGradient>
<linearGradient id="c79" gradientUnits="userSpaceOnUse" x1="1164" x2="1496" y1="0" y2="0"><stop offset="0" stop-color="#00ff48"/><stop offset="0.6777" stop-color="#03ff16"/><stop offset="0.9367" stop-color="#5cff00"/><stop offset="1" stop-color="#75ff00"/></linearGradient>
<linearGradient id="c80" gradientUnits="userSpaceOnUse" x1="1164" x2="1498" y1="0" y2="0"><stop offset="0" stop-color="#00ff49"/><stop offset="0.6707" stop-color="#02ff17"/><stop offset="0.9371" stop-color="#5fff00"/><stop offset="1" stop-color="#78ff00"/></linearGradient>
<linearGradient id="c81" gradientUnits="userSpaceOnUse" x1="1164" x2="1500" y1="0" y2="0"><stop offset="0" stop-color="#00ff4a"/><stop offset="0.6667" stop-color="#03ff18"/><stop offset="0.9405" stop-color="#64ff00"/><stop offset="1" stop-color="#7cff00"/></linearGradient>
<linearGradient id="c82" gradientUnits="userSpaceOnUse" x1="1164" x2="1503" y1="0" y2="0"><stop offset="0" stop-color="#00ff4b"/><stop offset="0.6578" stop-color="#02ff19"/><stop offset="0.9381" stop-color="#67ff00"/><stop offset="1" stop-color="#81ff00"/></linearGradient>
<linearGradient id="c83" gradientUnits="userSpaceOnUse" x1="1164" x2="1505" y1="0" y2="0"><stop offset="0" stop-color="#00ff4c"/><stop offset="0.654" stop-color="#03ff1a"/><stop offset="0.9384" stop-color="#6bff00"/><stop offset="1" stop-color="#85ff00"/></linearGradient>
<linearGradient id="c84" gradientUnits="userSpaceOnUse" x1="1164" x2="1508" y1="0" y2="0"><stop offset="0" stop-color="#00ff4c"/><stop offset="0.6483" stop-color="#03ff1b"/><stop offset="0.9302" stop-color="#6cff00"/><stop offset="1" stop-color="#8aff00"/></linearGradient>
<linearGradient id="c85" gradientUnits="userSpaceOnUse" x1="1164" x2="1510" y1="0" y2="0"><stop offset="0" stop-color="#00ff4d"/><stop offset="0.6416" stop-color="#03ff1d"/><stop offset="0.9191" stop-color="#6aff00"/><stop offset="1" stop-color="#8eff00"/></linearGradient>
<linearGradient id="c86" gradientUnits="userSpaceOnUse" x1="1164" x2="1512" y1="0" y2="0"><stop offset="0" stop-color="#00ff4e"/><stop offset="0.6379" stop-color="#03ff1e"/><stop offset="0.9138" stop-color="#6cff00"/><stop offset="1" stop-color="#92ff00"/></linearGradient>
<linearGradient id="c87" gradientUnits="userSpaceOnUse" x1="1164" x2="1515" y1="0" y2="0"><stop offset="0" stop-color="#00ff4f"/><stop offset="0.6296" stop-color="#02ff1f"/><stop offset="0.9031" stop-color="#6bff01"/><stop offset="1" stop-color="#97ff00"/></linearGradient>
<linearGradient id="c88" gradientUnits="userSpaceOnUse" x1="1164" x2="1517" y1="0" y2="0"><stop offset="0" stop-color="#00ff50"/><stop offset="0.6261" stop-color="#03ff20"/><stop offset="0.8952" stop-color="#6bff02"/><stop offset="1" stop-color="#9bff00"/></linearGradient>
<linearGradient id="c89" gradientUnits="userSpaceOnUse" x1="1164" x2="1520" y1="0" y2="0"><stop offset="0" stop-color="#00ff51"/><stop offset="0.618" stop-color="#02ff21"/><stop offset="0.8848" stop-color="#6bff04"/><stop offset="1" stop-color="#a1ff00"/></linearGradient>
<linearGradient id="c90" gradientUnits="userSpaceOnUse" x1="1164" x2="1522" y1="0" y2="0"><stop offset="0" stop-color="#00ff52"/><stop offset="0.6145" stop-color="#03ff22"/><stop offset="0.8771" stop-color="#6bff05"/><stop offset="0.9777" stop-color="#9aff00"/><stop offset="1" stop-color="#a5ff00"/></linearGradient>
<linearGradient id="c91" gradientUnits="userSpaceOnUse" x1="1164" x2="1524" y1="0" y2="0"><stop offset="0" stop-color="#00ff53"/><stop offset="0.6083" stop-color="#02ff23"/><stop offset="0.8694" stop-color="#6bff06"/><stop offset="0.9639" stop-color="#97ff00"/><stop offset="1" stop-color="#a9ff00"/></linearGradient>
<linearGradient id="c92" gradientUnits="userSpaceOnUse" x1="1165" x2="1527" y1="0" y2="0"><stop offset="0" stop-color="#00ff54"/><stop offset="0.6022" stop-color="#03ff24"/><stop offset="0.8591" stop-color="#6bff08"/><stop offset="0.9586" stop-color="#9aff00"/><stop offset="1" stop-color="#afff00"/></linearGradient>
<linearGradient id="c93" gradientUnits="userSpaceOnUse" x1="1165" x2="1529" y1="0" y2="0"><stop offset="0" stop-color="#00ff55"/><stop offset="0.5989" stop-color="#03ff25"/><stop offset="0.8544" stop-color="#6cff09"/><stop offset="0.956" stop-color="#9dff00"/><stop offset="1" stop-color="#b4ff00"/></linearGradient>
<linearGradient id="c94" gradientUnits="userSpaceOnUse" x1="1165" x2="1531" y1="0" y2="0"><stop offset="0" stop-color="#00ff56"/><stop offset="0.5929" stop-color="#02ff27"/><stop offset="0.8443" stop-color="#6bff0a"/><stop offset="0.9536" stop-color="#a0ff00"/><stop offset="1" stop-color="#b9ff00"/></linearGradient>
<linearGradient id="c95" gradientUnits="userSpaceOnUse" x1="1165" x2="1534" y1="0" y2="0"><stop offset="0" stop-color="#00ff58"/><stop offset="0.5881" stop-color="#03ff28"/><stop offset="0.8374" stop-color="#6cff0b"/><stop offset="0.9539" stop-color="#a6ff00"/><stop offset="1" stop-color="#bfff00"/></linearGradient>
<linearGradient id="c96" gradientUnits="userSpaceOnUse" x1="1165" x2="1536" y1="0" y2="0"><stop offset="0" stop-color="#00ff59"/><stop offset="0.5822" stop-color="#02ff29"/><stop offset="0.8275" stop-color="#6aff0d"/><stop offset="0.9542" stop-color="#aaff00"/><stop offset="1" stop-color="#c4ff00"/></linearGradient>
<linearGradient id="c97" gradientUnits="userSpaceOnUse" x1="1165" x2="1539" y1="0" y2="0"><stop offset="0" stop-color="#00ff5a"/><stop offset="0.5775" stop-color="#03ff2a"/><stop offset="0.8209" stop-color="#6cff0e"/><stop offset="0.9519" stop-color="#afff00"/><stop offset="1" stop-color="#caff00"/></linearGradient>
<linearGradient id="c98" gradientUnits="userSpaceOnUse" x1="1165" x2="1541" y1="0" y2="0"><stop offset="0" stop-color="#00ff5b"/><stop offset="0.5718" stop-color="#02ff2c"/><stop offset="0.8112" stop-color="#6aff10"/><stop offset="0.9521" stop-color="#b4ff00"/><stop offset="1" stop-color="#cfff00"/></linearGradient>
<linearGradient id="c99" gradientUnits="userSpaceOnUse" x1="1165" x2="1543" y1="0" y2="0"><stop offset="0" stop-color="#00ff5c"/><stop offset="0.5688" stop-color="#03ff2d"/><stop offset="0.8069" stop-color="#6bff11"/><stop offset="0.955" stop-color="#baff00"/><stop offset="1" stop-color="#d5ff00"/></linearGradient>
<linearGradient id="c100" gradientUnits="userSpaceOnUse" x1="1166" x2="1546" y1="0" y2="0"><stop offset="0" stop-color="#00ff5d"/><stop offset="0.5605" stop-color="#02ff2e"/><stop offset="0.7947" stop-color="#6aff13"/><stop offset="0.9526" stop-color="#bfff00"/><stop offset="1" stop-color="#dcff00"/></linearGradient>
<linearGradient id="c101" gradientUnits="userSpaceOnUse" x1="1166" x2="1548" y1="0" y2="0"><stop offset="0" stop-color="#00ff5e"/><stop offset="0.5576" stop-color="#03ff2f"/><stop offset="0.7906" stop-color="#6bff14"/><stop offset="0.9555" stop-color="#c6ff00"/><stop offset="1" stop-color="#e1ff00"/></linearGradient>
<linearGradient id="c102" gradientUnits="userSpaceOnUse" x1="1166" x2="1551" y1="0" y2="0"><stop offset="0" stop-color="#00ff5f"/><stop offset="0.5506" stop-color="#02ff31"/><stop offset="0.7818" stop-color="#6bff15"/><stop offset="0.9532" stop-color="#cbff00"/><stop offset="1" stop-color="#e8ff00"/></linearGradient>
<linearGradient id="c103" gradientUnits="userSpaceOnUse" x1="1166" x2="1553" y1="0" y2="0"><stop offset="0" stop-color="#00ff60"/><stop offset="0.5478" stop-color="#02ff32"/><stop offset="0.7752" stop-color="#6bff17"/><stop offset="0.9561" stop-color="#d2ff00"/><stop offset="1" stop-color="#eeff00"/></linearGradient>
<linearGradient id="c104" gradientUnits="userSpaceOnUse" x1="1166" x2="1555" y1="0" y2="0"><stop offset="0" stop-color="#00ff61"/><stop offset="0.545" stop-color="#03ff33"/><stop offset="0.7686" stop-color="#6bff18"/><stop offset="0.9563" stop-color="#d7ff00"/><stop offset="1" stop-color="#f4ff00"/></linearGradient>
<linearGradient id="c105" gradientUnits="userSpaceOnUse" x1="1166" x2="1558" y1="0" y2="0"><stop offset="0" stop-color="#00ff63"/><stop offset="0.5383" stop-color="#02ff35"/><stop offset="0.7602" stop-color="#6bff1a"/><stop offset="0.949" stop-color="#d9ff00"/><stop offset="1" stop-color="#fcff00"/></linearGradient>
<linearGradient id="c106" gradientUnits="userSpaceOnUse" x1="1167" x2="1560" y1="0" y2="0"><stop offset="0" stop-color="#00ff64"/><stop offset="0.5344" stop-color="#03ff36"/><stop offset="0.7557" stop-color="#6cff1b"/><stop offset="0.9415" stop-color="#daff00"/><stop offset="1" stop-color="#fffc00"/></linearGradient>
<linearGradient id="c107" gradientUnits="userSpaceOnUse" x1="1167" x2="1562" y1="0" y2="0"><stop offset="0" stop-color="#00ff65"/><stop offset="0.5291" stop-color="#02ff37"/><stop offset="0.7468" stop-color="#6aff1d"/><stop offset="0.9316" stop-color="#d9ff01"/><stop offset="0.9899" stop-color="#fffd00"/><stop offset="1" stop-color="#fff600"/></linearGradient>
<linearGradient id="c108" gradientUnits="userSpaceOnUse" x1="1167" x2="1565" y1="0" y2="0"><stop offset="0" stop-color="#00ff66"/><stop offset="0.5251" stop-color="#03ff39"/><stop offset="0.7412" stop-color="#6cff1e"/><stop offset="0.9221" stop-color="#d9ff03"/><stop offset="0.9799" stop-color="#fffd00"/><stop offset="1" stop-color="#ffef00"/></linearGradient>
<linearGradient id="c109" gradientUnits="userSpaceOnUse" x1="1167" x2="1567" y1="0" y2="0"><stop offset="0" stop-color="#00ff67"/><stop offset="0.52" stop-color="#02ff3a"/><stop offset="0.7325" stop-color="#6aff20"/><stop offset="0.9125" stop-color="#d8ff05"/><stop offset="0.9725" stop-color="#fffc00"/><stop offset="1" stop-color="#ffe900"/></linearGradient>
<linearGradient id="c110" gradientUnits="userSpaceOnUse" x1="1167" x2="1570" y1="0" y2="0"><stop offset="0" stop-color="#00ff68"/><stop offset="0.5161" stop-color="#03ff3b"/><stop offset="0.727" stop-color="#6bff21"/><stop offset="0.9057" stop-color="#daff06"/><stop offset="0.9603" stop-color="#fffd00"/><stop offset="1" stop-color="#ffe200"/></linearGradient>
<linearGradient id="c111" gradientUnits="userSpaceOnUse" x1="1167" x2="1572" y1="0" y2="0"><stop offset="0" stop-color="#00ff6a"/><stop offset="0.5111" stop-color="#02ff3d"/><stop offset="0.7185" stop-color="#6aff23"/><stop offset="0.8938" stop-color="#d7ff08"/><stop offset="0.9531" stop-color="#fffc00"/><stop offset="1" stop-color="#ffdd00"/></linearGradient>
<linearGradient id="c112" gradientUnits="userSpaceOnUse" x1="1168" x2="1574" y1="0" y2="0"><stop offset="0" stop-color="#00ff6b"/><stop offset="0.5074" stop-color="#02ff3e"/><stop offset="0.7143" stop-color="#6bff25"/><stop offset="0.8892" stop-color="#d9ff09"/><stop offset="0.9433" stop-color="#fffd00"/><stop offset="1" stop-color="#ffd800"/></linearGradient>
<linearGradient id="c113" gradientUnits="userSpaceOnUse" x1="1168" x2="1577" y1="0" y2="0"><stop offset="0" stop-color="#00ff6c"/><stop offset="0.5037" stop-color="#03ff40"/><stop offset="0.7066" stop-color="#6bff26"/><stop offset="0.8802" stop-color="#daff0b"/><stop offset="0.934" stop-color="#fffc01"/><stop offset="1" stop-color="#ffd100"/></linearGradient>
<linearGradient id="c114" gradientUnits="userSpaceOnUse" x1="1168" x2="1579" y1="0" y2="0"><stop offset="0" stop-color="#00ff6d"/><stop offset="0.4988" stop-color="#02ff41"/><stop offset="0.7007" stop-color="#6bff28"/><stop offset="0.871" stop-color="#d9ff0d"/><stop offset="0.9246" stop-color="#fffd04"/><stop offset="1" stop-color="#ffcc00"/></linearGradient>
<linearGradient id="c115" gradientUnits="userSpaceOnUse" x1="1168" x2="1581" y1="0" y2="0"><stop offset="0" stop-color="#00ff6f"/><stop offset="0.4964" stop-color="#03ff42"/><stop offset="0.6949" stop-color="#6bff2a"/><stop offset="0.8644" stop-color="#d9ff0f"/><stop offset="0.9177" stop-color="#fffd05"/><stop offset="0.9831" stop-color="#ffd100"/><stop offset="1" stop-color="#ffc800"/></linearGradient>
<linearGradient id="c116" gradientUnits="userSpaceOnUse" x1="1169" x2="1584" y1="0" y2="0"><stop offset="0" stop-color="#00ff70"/><stop offset="0.4892" stop-color="#02ff44"/><stop offset="0.6867" stop-color="#6bff2b"/><stop offset="0.853" stop-color="#d8ff11"/><stop offset="0.9084" stop-color="#fffc07"/><stop offset="0.9711" stop-color="#ffd200"/><stop offset="1" stop-color="#ffc200"/></linearGradient>
<linearGradient id="c117" gradientUnits="userSpaceOnUse" x1="1169" x2="1586" y1="0" y2="0"><stop offset="0" stop-color="#00ff71"/><stop offset="0.4868" stop-color="#03ff46"/><stop offset="0.6811" stop-color="#6aff2d"/><stop offset="0.8465" stop-color="#d9ff13"/><stop offset="0.8993" stop-color="#fffd09"/><stop offset="0.9688" stop-color="#ffce00"/><stop offset="1" stop-color="#ffbd00"/></linearGradient>
<linearGradient id="c118" gradientUnits="userSpaceOnUse" x1="1169" x2="1588" y1="0" y2="0"><stop offset="0" stop-color="#00ff72"/><stop offset="0.4821" stop-color="#02ff47"/><stop offset="0.6754" stop-color="#6aff2f"/><stop offset="0.8401" stop-color="#d9ff15"/><stop offset="0.8926" stop-color="#fffc0b"/><stop offset="0.969" stop-color="#ffc900"/><stop offset="1" stop-color="#ffb900"/></linearGradient>
<linearGradient id="c119" gradientUnits="userSpaceOnUse" x1="1169" x2="1591" y1="0" y2="0"><stop offset="0" stop-color="#00ff74"/><stop offset="0.4787" stop-color="#03ff49"/><stop offset="0.6706" stop-color="#6cff30"/><stop offset="0.8318" stop-color="#daff16"/><stop offset="0.8815" stop-color="#fffd0d"/><stop offset="0.9668" stop-color="#ffc400"/><stop offset="1" stop-color="#ffb300"/></linearGradient>
<linearGradient id="c120" gradientUnits="userSpaceOnUse" x1="1169" x2="1593" y1="0" y2="0"><stop offset="0" stop-color="#00ff75"/><stop offset="0.4741" stop-color="#02ff4a"/><stop offset="0.6627" stop-color="#6aff32"/><stop offset="0.8231" stop-color="#d8ff19"/><stop offset="0.875" stop-color="#fffc0f"/><stop offset="0.9646" stop-color="#ffc100"/><stop offset="1" stop-color="#ffaf00"/></linearGradient>
<linearGradient id="c121" gradientUnits="userSpaceOnUse" x1="1170" x2="1596" y1="0" y2="0"><stop offset="0" stop-color="#00ff76"/><stop offset="0.4695" stop-color="#02ff4c"/><stop offset="0.6573" stop-color="#6bff34"/><stop offset="0.8146" stop-color="#d9ff1a"/><stop offset="0.8638" stop-color="#fffd11"/><stop offset="0.9507" stop-color="#ffc300"/><stop offset="1" stop-color="#ffaa00"/></linearGradient>
<linearGradient id="c122" gradientUnits="userSpaceOnUse" x1="1170" x2="1598" y1="0" y2="0"><stop offset="0" stop-color="#00ff78"/><stop offset="0.4673" stop-color="#03ff4d"/><stop offset="0.6519" stop-color="#6bff35"/><stop offset="0.8084" stop-color="#daff1c"/><stop offset="0.8575" stop-color="#fffd13"/><stop offset="0.9439" stop-color="#ffc201"/><stop offset="1" stop-color="#ffa600"/></linearGradient>
<linearGradient id="c123" gradientUnits="userSpaceOnUse" x1="1170" x2="1600" y1="0" y2="0"><stop offset="0" stop-color="#00ff79"/><stop offset="0.4628" stop-color="#02ff4f"/><stop offset="0.6465" stop-color="#6bff37"/><stop offset="0.8023" stop-color="#daff1e"/><stop offset="0.8512" stop-color="#fffc15"/><stop offset="0.9372" stop-color="#ffc103"/><stop offset="1" stop-color="#ffa200"/></linearGradient>
<linearGradient id="c124" gradientUnits="userSpaceOnUse" x1="1170" x2="1603" y1="0" y2="0"><stop offset="0" stop-color="#00ff7a"/><stop offset="0.4596" stop-color="#03ff51"/><stop offset="0.6397" stop-color="#6bff39"/><stop offset="0.7921" stop-color="#d9ff21"/><stop offset="0.8406" stop-color="#fffd17"/><stop offset="0.9261" stop-color="#ffc104"/><stop offset="1" stop-color="#ff9d00"/></linearGradient>
<linearGradient id="c125" gradientUnits="userSpaceOnUse" x1="1171" x2="1605" y1="0" y2="0"><stop offset="0" stop-color="#00ff7c"/><stop offset="0.4539" stop-color="#02ff52"/><stop offset="0.6336" stop-color="#6bff3b"/><stop offset="0.7857" stop-color="#d9ff23"/><stop offset="0.8341" stop-color="#fffc19"/><stop offset="0.9194" stop-color="#ffc106"/><stop offset="0.9885" stop-color="#ff9e00"/><stop offset="1" stop-color="#ff9900"/></linearGradient>
<linearGradient id="c126" gradientUnits="userSpaceOnUse" x1="1171" x2="1607" y1="0" y2="0"><stop offset="0" stop-color="#00ff7d"/><stop offset="0.4518" stop-color="#03ff54"/><stop offset="0.6284" stop-color="#6bff3d"/><stop offset="0.7775" stop-color="#d8ff25"/><stop offset="0.8257" stop-color="#fffd1c"/><stop offset="0.9083" stop-color="#ffc208"/><stop offset="0.9817" stop-color="#ff9d00"/><stop offset="1" stop-color="#ff9600"/></linearGradient>
<linearGradient id="c127" gradientUnits="userSpaceOnUse" x1="1171" x2="1610" y1="0" y2="0"><stop offset="0" stop-color="#00ff7e"/><stop offset="0.4465" stop-color="#02ff56"/><stop offset="0.6219" stop-color="#6bff3f"/><stop offset="0.7699" stop-color="#d9ff27"/><stop offset="0.8178" stop-color="#fffc1e"/><stop offset="0.8998" stop-color="#ffc20a"/><stop offset="0.9772" stop-color="#ff9b00"/><stop offset="1" stop-color="#ff9100"/></linearGradient>
<linearGradient id="c128" gradientUnits="userSpaceOnUse" x1="1171" x2="1612" y1="0" y2="0"><stop offset="0" stop-color="#00ff80"/><stop offset="0.4444" stop-color="#03ff57"/><stop offset="0.6168" stop-color="#6aff41"/><stop offset="0.7642" stop-color="#d9ff29"/><stop offset="0.8095" stop-color="#fffd20"/><stop offset="0.8912" stop-color="#ffc20c"/><stop offset="0.9773" stop-color="#ff9700"/><stop offset="1" stop-color="#ff8e00"/></linearGradient>
<linearGradient id="c129" gradientUnits="userSpaceOnUse" x1="1172" x2="1614" y1="0" y2="0"><stop offset="0" stop-color="#00ff81"/><stop offset="0.4389" stop-color="#02ff59"/><stop offset="0.6109" stop-color="#6aff43"/><stop offset="0.7557" stop-color="#d8ff2b"/><stop offset="0.8032" stop-color="#fffd22"/><stop offset="0.8846" stop-color="#ffc10d"/><stop offset="0.9774" stop-color="#ff9300"/><stop offset="1" stop-color="#ff8a00"/></linearGradient>
<linearGradient id="c130" gradientUnits="userSpaceOnUse" x1="1172" x2="1617" y1="0" y2="0"><stop offset="0" stop-color="#00ff83"/><stop offset="0.436" stop-color="#02ff5b"/><stop offset="0.6045" stop-color="#6aff45"/><stop offset="0.7483" stop-color="#d8ff2d"/><stop offset="0.7955" stop-color="#fffc24"/><stop offset="0.8764" stop-color="#ffc00f"/><stop offset="0.9775" stop-color="#ff8f00"/><stop offset="1" stop-color="#ff8600"/></linearGradient>
<linearGradient id="c131" gradientUnits="userSpaceOnUse" x1="1172" x2="1619" y1="0" y2="0"><stop offset="0" stop-color="#00ff84"/><stop offset="0.434" stop-color="#03ff5d"/><stop offset="0.6018" stop-color="#6cff47"/><stop offset="0.7427" stop-color="#d9ff2f"/><stop offset="0.7875" stop-color="#fffd27"/><stop offset="0.8658" stop-color="#ffc211"/><stop offset="0.9732" stop-color="#ff8d00"/><stop offset="1" stop-color="#ff8300"/></linearGradient>
<linearGradient id="c132" gradientUnits="userSpaceOnUse" x1="1173" x2="1621" y1="0" y2="0"><stop offset="0" stop-color="#00ff86"/><stop offset="0.4286" stop-color="#02ff5e"/><stop offset="0.5938" stop-color="#6aff49"/><stop offset="0.7344" stop-color="#d8ff32"/><stop offset="0.7812" stop-color="#fffc29"/><stop offset="0.8594" stop-color="#ffc113"/><stop offset="0.9665" stop-color="#ff8c00"/><stop offset="1" stop-color="#ff8000"/></linearGradient>
<linearGradient id="c133" gradientUnits="userSpaceOnUse" x1="1173" x2="1624" y1="0" y2="0"><stop offset="0" stop-color="#00ff87"/><stop offset="0.4257" stop-color="#03ff60"/><stop offset="0.5898" stop-color="#6bff4b"/><stop offset="0.7295" stop-color="#daff34"/><stop offset="0.7716" stop-color="#fffd2b"/><stop offset="0.8492" stop-color="#ffc215"/><stop offset="0.9557" stop-color="#ff8c01"/><stop offset="1" stop-color="#ff7c00"/></linearGradient>
<linearGradient id="c134" gradientUnits="userSpaceOnUse" x1="1173" x2="1626" y1="0" y2="0"><stop offset="0" stop-color="#00ff89"/><stop offset="0.4216" stop-color="#02ff62"/><stop offset="0.585" stop-color="#6bff4d"/><stop offset="0.7219" stop-color="#d9ff36"/><stop offset="0.766" stop-color="#fffc2e"/><stop offset="0.8433" stop-color="#ffc117"/><stop offset="0.9492" stop-color="#ff8b02"/><stop offset="1" stop-color="#ff7900"/></linearGradient>
<linearGradient id="c135" gradientUnits="userSpaceOnUse" x1="1173" x2="1629" y1="0" y2="0"><stop offset="0" stop-color="#00ff8a"/><stop offset="0.4189" stop-color="#03ff64"/><stop offset="0.5789" stop-color="#6bff4f"/><stop offset="0.7149" stop-color="#d9ff39"/><stop offset="0.7566" stop-color="#fffd30"/><stop offset="0.8311" stop-color="#ffc319"/><stop offset="0.9342" stop-color="#ff8d04"/><stop offset="1" stop-color="#ff7500"/></linearGradient>
<linearGradient id="c136" gradientUnits="userSpaceOnUse" x1="1174" x2="1631" y1="0" y2="0"><stop offset="0" stop-color="#00ff8c"/><stop offset="0.4136" stop-color="#02ff66"/><stop offset="0.5733" stop-color="#6bff51"/><stop offset="0.7068" stop-color="#d8ff3b"/><stop offset="0.7505" stop-color="#fffd32"/><stop offset="0.8249" stop-color="#ffc21b"/><stop offset="0.9278" stop-color="#ff8c05"/><stop offset="1" stop-color="#ff7200"/></linearGradient>
<linearGradient id="c137" gradientUnits="userSpaceOnUse" x1="1174" x2="1633" y1="0" y2="0"><stop offset="0" stop-color="#00ff8d"/><stop offset="0.4118" stop-color="#02ff68"/><stop offset="0.5686" stop-color="#6bff53"/><stop offset="0.7015" stop-color="#d9ff3d"/><stop offset="0.7429" stop-color="#fffe35"/><stop offset="0.817" stop-color="#ffc21d"/><stop offset="0.9172" stop-color="#ff8d07"/><stop offset="0.9956" stop-color="#ff7000"/><stop offset="1" stop-color="#ff6f00"/></linearGradient>
<linearGradient id="c138" gradientUnits="userSpaceOnUse" x1="1174" x2="1636" y1="0" y2="0"><stop offset="0" stop-color="#00ff8f"/><stop offset="0.4069" stop-color="#02ff6a"/><stop offset="0.5628" stop-color="#6bff55"/><stop offset="0.6948" stop-color="#d9ff40"/><stop offset="0.7359" stop-color="#fffd38"/><stop offset="0.8095" stop-color="#ffc11f"/><stop offset="0.9091" stop-color="#ff8c09"/><stop offset="0.9913" stop-color="#ff6e00"/><stop offset="1" stop-color="#ff6c00"/></linearGradient>
<linearGradient id="c139" gradientUnits="userSpaceOnUse" x1="1175" x2="1638" y1="0" y2="0"><stop offset="0" stop-color="#00ff91"/><stop offset="0.4039" stop-color="#02ff6c"/><stop offset="0.5572" stop-color="#6aff58"/><stop offset="0.6868" stop-color="#d8ff43"/><stop offset="0.73" stop-color="#fffc3a"/><stop offset="0.8035" stop-color="#ffc020"/><stop offset="0.9028" stop-color="#ff8c0a"/><stop offset="0.9914" stop-color="#ff6b00"/><stop offset="1" stop-color="#ff6900"/></linearGradient>
<linearGradient id="c140" gradientUnits="userSpaceOnUse" x1="1175" x2="1640" y1="0" y2="0"><stop offset="0" stop-color="#00ff92"/><stop offset="0.4022" stop-color="#03ff6e"/><stop offset="0.5548" stop-color="#6cff5a"/><stop offset="0.6839" stop-color="#dbff45"/><stop offset="0.7226" stop-color="#fffd3d"/><stop offset="0.7935" stop-color="#ffc223"/><stop offset="0.8925" stop-color="#ff8d0c"/><stop offset="0.9892" stop-color="#ff6900"/><stop offset="1" stop-color="#ff6600"/></linearGradient>
<linearGradient id="c141" gradientUnits="userSpaceOnUse" x1="1175" x2="1643" y1="0" y2="0"><stop offset="0" stop-color="#00ff94"/><stop offset="0.3974" stop-color="#02ff70"/><stop offset="0.547" stop-color="#6aff5c"/><stop offset="0.6731" stop-color="#d7ff48"/><stop offset="0.7158" stop-color="#fffc3f"/><stop offset="0.7863" stop-color="#ffc125"/><stop offset="0.8825" stop-color="#ff8d0e"/><stop offset="0.9872" stop-color="#ff6600"/><stop offset="1" stop-color="#ff6300"/></linearGradient>
<linearGradient id="c142" gradientUnits="userSpaceOnUse" x1="1176" x2="1645" y1="0" y2="0"><stop offset="0" stop-color="#00ff96"/><stop offset="0.3945" stop-color="#03ff72"/><stop offset="0.5437" stop-color="#6cff5e"/><stop offset="0.6695" stop-color="#daff4a"/><stop offset="0.7079" stop-color="#fffd42"/><stop offset="0.7783" stop-color="#ffc227"/><stop offset="0.8742" stop-color="#ff8d10"/><stop offset="0.9893" stop-color="#ff6300"/><stop offset="1" stop-color="#ff6000"/></linearGradient>
<linearGradient id="c143" gradientUnits="userSpaceOnUse" x1="1176" x2="1647" y1="0" y2="0"><stop offset="0" stop-color="#00ff97"/><stop offset="0.3907" stop-color="#02ff74"/><stop offset="0.5372" stop-color="#6aff61"/><stop offset="0.6624" stop-color="#d8ff4d"/><stop offset="0.7028" stop-color="#fffd44"/><stop offset="0.7728" stop-color="#ffc129"/><stop offset="0.8684" stop-color="#ff8c11"/><stop offset="0.9894" stop-color="#ff6100"/><stop offset="1" stop-color="#ff5e00"/></linearGradient>
<linearGradient id="c144" gradientUnits="userSpaceOnUse" x1="1176" x2="1650" y1="0" y2="0"><stop offset="0" stop-color="#00ff99"/><stop offset="0.3882" stop-color="#03ff76"/><stop offset="0.5338" stop-color="#6bff63"/><stop offset="0.6561" stop-color="#d9ff4f"/><stop offset="0.6941" stop-color="#fffe48"/><stop offset="0.7616" stop-color="#ffc32c"/><stop offset="0.8544" stop-color="#ff8e14"/><stop offset="0.9873" stop-color="#ff5e00"/><stop offset="1" stop-color="#ff5a00"/></linearGradient>
<linearGradient id="c145" gradientUnits="userSpaceOnUse" x1="1176" x2="1652" y1="0" y2="0"><stop offset="0" stop-color="#00ff9b"/><stop offset="0.3845" stop-color="#02ff78"/><stop offset="0.5273" stop-color="#69ff66"/><stop offset="0.6492" stop-color="#d7ff52"/><stop offset="0.6891" stop-color="#fffd4a"/><stop offset="0.7563" stop-color="#ffc22e"/><stop offset="0.8487" stop-color="#ff8d15"/><stop offset="0.9811" stop-color="#ff5d00"/><stop offset="1" stop-color="#ff5800"/></linearGradient>
<linearGradient id="c146" gradientUnits="userSpaceOnUse" x1="1177" x2="1655" y1="0" y2="0"><stop offset="0" stop-color="#00ff9c"/><stop offset="0.3808" stop-color="#02ff7a"/><stop offset="0.523" stop-color="#6bff68"/><stop offset="0.6423" stop-color="#d8ff55"/><stop offset="0.682" stop-color="#fffc4c"/><stop offset="0.749" stop-color="#ffc130"/><stop offset="0.841" stop-color="#ff8c16"/><stop offset="0.9728" stop-color="#ff5c00"/><stop offset="1" stop-color="#ff5500"/></linearGradient>
<linearGradient id="c147" gradientUnits="userSpaceOnUse" x1="1177" x2="1657" y1="0" y2="0"><stop offset="0" stop-color="#00ff9e"/><stop offset="0.3771" stop-color="#02ff7d"/><stop offset="0.5167" stop-color="#69ff6b"/><stop offset="0.6354" stop-color="#d7ff58"/><stop offset="0.675" stop-color="#fffd50"/><stop offset="0.7417" stop-color="#ffc233"/><stop offset="0.8333" stop-color="#ff8c18"/><stop offset="0.9625" stop-color="#ff5d01"/><stop offset="1" stop-color="#ff5300"/></linearGradient>
<linearGradient id="c148" gradientUnits="userSpaceOnUse" x1="1177" x2="1659" y1="0" y2="0"><stop offset="0" stop-color="#00ffa0"/><stop offset="0.3755" stop-color="#02ff7f"/><stop offset="0.5145" stop-color="#6bff6d"/><stop offset="0.6328" stop-color="#d9ff5a"/><stop offset="0.6701" stop-color="#fffc52"/><stop offset="0.7365" stop-color="#ffc134"/><stop offset="0.8278" stop-color="#ff8b1a"/><stop offset="0.9564" stop-color="#ff5c02"/><stop offset="1" stop-color="#ff5000"/></linearGradient>
<linearGradient id="c149" gradientUnits="userSpaceOnUse" x1="1178" x2="1662" y1="0" y2="0"><stop offset="0" stop-color="#00ffa2"/><stop offset="0.3719" stop-color="#03ff81"/><stop offset="0.5083" stop-color="#6aff6f"/><stop offset="0.624" stop-color="#d8ff5d"/><stop offset="0.6612" stop-color="#fffd56"/><stop offset="0.7252" stop-color="#ffc338"/><stop offset="0.814" stop-color="#ff8d1d"/><stop offset="0.9401" stop-color="#ff5d04"/><stop offset="1" stop-color="#ff4d00"/></linearGradient>
<linearGradient id="c150" gradientUnits="userSpaceOnUse" x1="1178" x2="1664" y1="0" y2="0"><stop offset="0" stop-color="#00ffa4"/><stop offset="0.3683" stop-color="#02ff83"/><stop offset="0.5041" stop-color="#6aff72"/><stop offset="0.6193" stop-color="#d9ff60"/><stop offset="0.6564" stop-color="#fffd58"/><stop offset="0.7202" stop-color="#ffc23a"/><stop offset="0.8086" stop-color="#ff8c1e"/><stop offset="0.9342" stop-color="#ff5d05"/><stop offset="1" stop-color="#ff4b00"/></linearGradient>
<linearGradient id="c151" gradientUnits="userSpaceOnUse" x1="1178" x2="1666" y1="0" y2="0"><stop offset="0" stop-color="#00ffa6"/><stop offset="0.3668" stop-color="#03ff86"/><stop offset="0.5" stop-color="#6aff75"/><stop offset="0.6127" stop-color="#d7ff63"/><stop offset="0.6496" stop-color="#fffe5c"/><stop offset="0.7131" stop-color="#ffc23c"/><stop offset="0.7992" stop-color="#ff8d20"/><stop offset="0.9221" stop-color="#ff5e08"/><stop offset="1" stop-color="#ff4900"/></linearGradient>
<linearGradient id="c152" gradientUnits="userSpaceOnUse" x1="1179" x2="1669" y1="0" y2="0"><stop offset="0" stop-color="#00ffa7"/><stop offset="0.3612" stop-color="#02ff88"/><stop offset="0.4939" stop-color="#6aff77"/><stop offset="0.6061" stop-color="#d8ff66"/><stop offset="0.6429" stop-color="#fffd5e"/><stop offset="0.7061" stop-color="#ffc13e"/><stop offset="0.7918" stop-color="#ff8c22"/><stop offset="0.9143" stop-color="#ff5d09"/><stop offset="1" stop-color="#ff4600"/></linearGradient>
<linearGradient id="c153" gradientUnits="userSpaceOnUse" x1="1179" x2="1671" y1="0" y2="0"><stop offset="0" stop-color="#00ffa9"/><stop offset="0.3598" stop-color="#03ff8a"/><stop offset="0.4919" stop-color="#6cff7a"/><stop offset="0.6037" stop-color="#dbff68"/><stop offset="0.6382" stop-color="#fffc61"/><stop offset="0.6992" stop-color="#ffc241"/><stop offset="0.7846" stop-color="#ff8c24"/><stop offset="0.9065" stop-color="#ff5c0a"/><stop offset="1" stop-color="#ff4400"/></linearGradient>
<linearGradient id="c154" gradientUnits="userSpaceOnUse" x1="1180" x2="1673" y1="0" y2="0"><stop offset="0" stop-color="#00ffab"/><stop offset="0.355" stop-color="#02ff8d"/><stop offset="0.4848" stop-color="#6aff7d"/><stop offset="0.5943" stop-color="#d7ff6c"/><stop offset="0.6308" stop-color="#fffd65"/><stop offset="0.6917" stop-color="#ffc244"/><stop offset="0.7748" stop-color="#ff8d27"/><stop offset="0.8945" stop-color="#ff5d0c"/><stop offset="1" stop-color="#ff4200"/></linearGradient>
<linearGradient id="c155" gradientUnits="userSpaceOnUse" x1="1180" x2="1676" y1="0" y2="0"><stop offset="0" stop-color="#00ffad"/><stop offset="0.3528" stop-color="#02ff8f"/><stop offset="0.4819" stop-color="#6bff7f"/><stop offset="0.5907" stop-color="#daff6e"/><stop offset="0.625" stop-color="#fffc67"/><stop offset="0.6855" stop-color="#ffc146"/><stop offset="0.7681" stop-color="#ff8c28"/><stop offset="0.8871" stop-color="#ff5d0d"/><stop offset="1" stop-color="#ff3f00"/></linearGradient>
<linearGradient id="c156" gradientUnits="userSpaceOnUse" x1="1180" x2="1678" y1="0" y2="0"><stop offset="0" stop-color="#00ffaf"/><stop offset="0.3494" stop-color="#02ff92"/><stop offset="0.4759" stop-color="#69ff82"/><stop offset="0.5843" stop-color="#d8ff72"/><stop offset="0.6185" stop-color="#fffe6b"/><stop offset="0.6787" stop-color="#ffc249"/><stop offset="0.761" stop-color="#ff8c2a"/><stop offset="0.8775" stop-color="#ff5d0f"/><stop offset="1" stop-color="#ff3d00"/></linearGradient>
<linearGradient id="c157" gradientUnits="userSpaceOnUse" x1="1181" x2="1681" y1="0" y2="0"><stop offset="0" stop-color="#00ffb1"/><stop offset="0.346" stop-color="#02ff94"/><stop offset="0.472" stop-color="#6bff85"/><stop offset="0.578" stop-color="#d9ff75"/><stop offset="0.612" stop-color="#fffc6e"/><stop offset="0.67" stop-color="#ffc24c"/><stop offset="0.75" stop-color="#ff8d2d"/><stop offset="0.864" stop-color="#ff5e11"/><stop offset="0.998" stop-color="#ff3b00"/><stop offset="1" stop-color="#ff3b00"/></linearGradient>
<linearGradient id="c158" gradientUnits="userSpaceOnUse" x1="1181" x2="1683" y1="0" y2="0"><stop offset="0" stop-color="#00ffb3"/><stop offset="0.3446" stop-color="#03ff97"/><stop offset="0.4681" stop-color="#6bff88"/><stop offset="0.5737" stop-color="#daff78"/><stop offset="0.6056" stop-color="#fffe72"/><stop offset="0.6633" stop-color="#ffc34f"/><stop offset="0.743" stop-color="#ff8d2f"/><stop offset="0.8566" stop-color="#ff5e13"/><stop offset="1" stop-color="#ff3900"/></linearGradient>
<linearGradient id="c159" gradientUnits="userSpaceOnUse" x1="1181" x2="1685" y1="0" y2="0"><stop offset="0" stop-color="#00ffb5"/><stop offset="0.3413" stop-color="#02ff99"/><stop offset="0.4643" stop-color="#6bff8b"/><stop offset="0.5675" stop-color="#d8ff7b"/><stop offset="0.6012" stop-color="#fffd75"/><stop offset="0.6587" stop-color="#ffc251"/><stop offset="0.7381" stop-color="#ff8c31"/><stop offset="0.8512" stop-color="#ff5d14"/><stop offset="1" stop-color="#ff3700"/></linearGradient>
<linearGradient id="c160" gradientUnits="userSpaceOnUse" x1="1182" x2="1688" y1="0" y2="0"><stop offset="0" stop-color="#00ffb7"/><stop offset="0.3379" stop-color="#03ff9c"/><stop offset="0.4585" stop-color="#6aff8e"/><stop offset="0.5613" stop-color="#d9ff7f"/><stop offset="0.5949" stop-color="#fffc77"/><stop offset="0.6522" stop-color="#ffc153"/><stop offset="0.7312" stop-color="#ff8b33"/><stop offset="0.8439" stop-color="#ff5c15"/><stop offset="0.998" stop-color="#ff3500"/><stop offset="1" stop-color="#ff3500"/></linearGradient>
<linearGradient id="c161" gradientUnits="userSpaceOnUse" x1="1182" x2="1690" y1="0" y2="0"><stop offset="0" stop-color="#00ffba"/><stop offset="0.3346" stop-color="#02ff9f"/><stop offset="0.4547" stop-color="#6aff91"/><stop offset="0.5551" stop-color="#d7ff82"/><stop offset="0.5886" stop-color="#fffd7c"/><stop offset="0.6437" stop-color="#ffc357"/><stop offset="0.7205" stop-color="#ff8e36"/><stop offset="0.8307" stop-color="#ff5e18"/><stop offset="0.9941" stop-color="#ff3400"/><stop offset="1" stop-color="#ff3300"/></linearGradient>
<linearGradient id="c162" gradientUnits="userSpaceOnUse" x1="1182" x2="1692" y1="0" y2="0"><stop offset="0" stop-color="#00ffbc"/><stop offset="0.3333" stop-color="#03ffa1"/><stop offset="0.451" stop-color="#6aff94"/><stop offset="0.551" stop-color="#d8ff86"/><stop offset="0.5843" stop-color="#fffc7f"/><stop offset="0.6392" stop-color="#ffc25a"/><stop offset="0.7157" stop-color="#ff8d38"/><stop offset="0.8255" stop-color="#ff5d19"/><stop offset="0.9882" stop-color="#ff3300"/><stop offset="1" stop-color="#ff3100"/></linearGradient>
<linearGradient id="c163" gradientUnits="userSpaceOnUse" x1="1183" x2="1695" y1="0" y2="0"><stop offset="0" stop-color="#00ffbe"/><stop offset="0.3281" stop-color="#02ffa4"/><stop offset="0.4453" stop-color="#6aff97"/><stop offset="0.5449" stop-color="#d8ff89"/><stop offset="0.5762" stop-color="#fffe83"/><stop offset="0.6309" stop-color="#ffc35d"/><stop offset="0.7051" stop-color="#ff8e3b"/><stop offset="0.8125" stop-color="#ff5e1c"/><stop offset="0.9727" stop-color="#ff3401"/><stop offset="1" stop-color="#ff2f00"/></linearGradient>
<linearGradient id="c164" gradientUnits="userSpaceOnUse" x1="1183" x2="1697" y1="0" y2="0"><stop offset="0" stop-color="#00ffc0"/><stop offset="0.3268" stop-color="#02ffa7"/><stop offset="0.4416" stop-color="#6aff9a"/><stop offset="0.5389" stop-color="#d7ff8d"/><stop offset="0.572" stop-color="#fffc86"/><stop offset="0.6265" stop-color="#ffc15f"/><stop offset="0.7004" stop-color="#ff8d3d"/><stop offset="0.8074" stop-color="#ff5d1d"/><stop offset="0.9669" stop-color="#ff3302"/><stop offset="1" stop-color="#ff2d00"/></linearGradient>
<linearGradient id="c165" gradientUnits="userSpaceOnUse" x1="1184" x2="1699" y1="0" y2="0"><stop offset="0" stop-color="#00ffc2"/><stop offset="0.3223" stop-color="#01ffaa"/><stop offset="0.4369" stop-color="#6aff9d"/><stop offset="0.534" stop-color="#d7ff90"/><stop offset="0.565" stop-color="#fffe8b"/><stop offset="0.6194" stop-color="#ffc263"/><stop offset="0.6932" stop-color="#ff8d3f"/><stop offset="0.7981" stop-color="#ff5d1f"/><stop offset="0.9553" stop-color="#ff3404"/><stop offset="1" stop-color="#ff2b00"/></linearGradient>
<linearGradient id="c166" gradientUnits="userSpaceOnUse" x1="1184" x2="1702" y1="0" y2="0"><stop offset="0" stop-color="#00ffc5"/><stop offset="0.3205" stop-color="#02ffad"/><stop offset="0.4324" stop-color="#69ffa1"/><stop offset="0.529" stop-color="#d8ff94"/><stop offset="0.5598" stop-color="#fffd8e"/><stop offset="0.612" stop-color="#ffc366"/><stop offset="0.6853" stop-color="#ff8d42"/><stop offset="0.7896" stop-color="#ff5d21"/><stop offset="0.9459" stop-color="#ff3305"/><stop offset="1" stop-color="#ff2900"/></linearGradient>
<linearGradient id="c167" gradientUnits="userSpaceOnUse" x1="1184" x2="1704" y1="0" y2="0"><stop offset="0" stop-color="#00ffc7"/><stop offset="0.3192" stop-color="#03ffb0"/><stop offset="0.4308" stop-color="#6bffa4"/><stop offset="0.525" stop-color="#d9ff97"/><stop offset="0.5558" stop-color="#fffc91"/><stop offset="0.6077" stop-color="#ffc268"/><stop offset="0.6788" stop-color="#ff8d44"/><stop offset="0.7808" stop-color="#ff5e23"/><stop offset="0.9346" stop-color="#ff3406"/><stop offset="1" stop-color="#ff2800"/></linearGradient>
<linearGradient id="c168" gradientUnits="userSpaceOnUse" x1="1185" x2="1706" y1="0" y2="0"><stop offset="0" stop-color="#00ffc9"/><stop offset="0.3148" stop-color="#02ffb3"/><stop offset="0.4261" stop-color="#6bffa7"/><stop offset="0.5202" stop-color="#daff9b"/><stop offset="0.5489" stop-color="#fffd95"/><stop offset="0.6008" stop-color="#ffc26c"/><stop offset="0.6718" stop-color="#ff8d47"/><stop offset="0.7735" stop-color="#ff5d25"/><stop offset="0.9251" stop-color="#ff3408"/><stop offset="1" stop-color="#ff2600"/></linearGradient>
<linearGradient id="c169" gradientUnits="userSpaceOnUse" x1="1185" x2="1709" y1="0" y2="0"><stop offset="0" stop-color="#00ffcc"/><stop offset="0.313" stop-color="#03ffb6"/><stop offset="0.4218" stop-color="#6bffab"/><stop offset="0.5134" stop-color="#d8ff9f"/><stop offset="0.5439" stop-color="#fffc99"/><stop offset="0.5954" stop-color="#ffc16e"/><stop offset="0.666" stop-color="#ff8c48"/><stop offset="0.7672" stop-color="#ff5c27"/><stop offset="0.9179" stop-color="#ff3309"/><stop offset="1" stop-color="#ff2400"/></linearGradient>
<linearGradient id="c170" gradientUnits="userSpaceOnUse" x1="1186" x2="1711" y1="0" y2="0"><stop offset="0" stop-color="#00ffce"/><stop offset="0.3086" stop-color="#02ffb9"/><stop offset="0.4171" stop-color="#6bffae"/><stop offset="0.5086" stop-color="#d9ffa3"/><stop offset="0.5371" stop-color="#fffe9e"/><stop offset="0.5867" stop-color="#ffc373"/><stop offset="0.6552" stop-color="#ff8e4d"/><stop offset="0.7524" stop-color="#ff5f2a"/><stop offset="0.899" stop-color="#ff350c"/><stop offset="1" stop-color="#ff2200"/></linearGradient>
<linearGradient id="c171" gradientUnits="userSpaceOnUse" x1="1186" x2="1714" y1="0" y2="0"><stop offset="0" stop-color="#00ffd1"/><stop offset="0.3068" stop-color="#03ffbc"/><stop offset="0.4129" stop-color="#6affb2"/><stop offset="0.5019" stop-color="#d7ffa7"/><stop offset="0.5322" stop-color="#fffca1"/><stop offset="0.5814" stop-color="#ffc276"/><stop offset="0.6496" stop-color="#ff8d4f"/><stop offset="0.7462" stop-color="#ff5e2c"/><stop offset="0.892" stop-color="#ff340d"/><stop offset="1" stop-color="#ff2000"/></linearGradient>
<linearGradient id="c172" gradientUnits="userSpaceOnUse" x1="1186" x2="1716" y1="0" y2="0"><stop offset="0" stop-color="#00ffd3"/><stop offset="0.3038" stop-color="#02ffbf"/><stop offset="0.4094" stop-color="#6affb5"/><stop offset="0.4981" stop-color="#d8ffab"/><stop offset="0.5264" stop-color="#fffea6"/><stop offset="0.5755" stop-color="#ffc37a"/><stop offset="0.6434" stop-color="#ff8d51"/><stop offset="0.7396" stop-color="#ff5e2e"/><stop offset="0.883" stop-color="#ff340e"/><stop offset="1" stop-color="#ff1f00"/></linearGradient>
<linearGradient id="c173" gradientUnits="userSpaceOnUse" x1="1187" x2="1718" y1="0" y2="0"><stop offset="0" stop-color="#00ffd6"/><stop offset="0.3013" stop-color="#02ffc3"/><stop offset="0.4049" stop-color="#6affb9"/><stop offset="0.4934" stop-color="#d8ffaf"/><stop offset="0.5217" stop-color="#fffda9"/><stop offset="0.5706" stop-color="#ffc27c"/><stop offset="0.6384" stop-color="#ff8c53"/><stop offset="0.7345" stop-color="#ff5d2f"/><stop offset="0.8776" stop-color="#ff330f"/><stop offset="1" stop-color="#ff1d00"/></linearGradient>
<linearGradient id="c174" gradientUnits="userSpaceOnUse" x1="1187" x2="1721" y1="0" y2="0"><stop offset="0" stop-color="#00ffd8"/><stop offset="0.2978" stop-color="#01ffc6"/><stop offset="0.4007" stop-color="#6affbd"/><stop offset="0.4869" stop-color="#d7ffb3"/><stop offset="0.5169" stop-color="#fffcad"/><stop offset="0.5655" stop-color="#ffc17f"/><stop offset="0.633" stop-color="#ff8b55"/><stop offset="0.7285" stop-color="#ff5c30"/><stop offset="0.8727" stop-color="#ff3210"/><stop offset="1" stop-color="#ff1b00"/></linearGradient>
<linearGradient id="c175" gradientUnits="userSpaceOnUse" x1="1188" x2="1723" y1="0" y2="0"><stop offset="0" stop-color="#00ffdb"/><stop offset="0.2953" stop-color="#02ffc9"/><stop offset="0.3963" stop-color="#6affc0"/><stop offset="0.4822" stop-color="#d7ffb7"/><stop offset="0.5103" stop-color="#fffdb2"/><stop offset="0.557" stop-color="#ffc384"/><stop offset="0.6224" stop-color="#ff8d5a"/><stop offset="0.7159" stop-color="#ff5e34"/><stop offset="0.8542" stop-color="#ff3413"/><stop offset="1" stop-color="#ff1a00"/></linearGradient>
<linearGradient id="c176" gradientUnits="userSpaceOnUse" x1="1188" x2="1725" y1="0" y2="0"><stop offset="0" stop-color="#00ffde"/><stop offset="0.2942" stop-color="#03ffcd"/><stop offset="0.3948" stop-color="#6cffc4"/><stop offset="0.4786" stop-color="#d8ffbb"/><stop offset="0.5065" stop-color="#fffcb6"/><stop offset="0.5531" stop-color="#ffc287"/><stop offset="0.6182" stop-color="#ff8c5c"/><stop offset="0.7114" stop-color="#ff5d36"/><stop offset="0.851" stop-color="#ff3314"/><stop offset="1" stop-color="#ff1800"/></linearGradient>
<linearGradient id="c177" gradientUnits="userSpaceOnUse" x1="1188" x2="1728" y1="0" y2="0"><stop offset="0" stop-color="#00ffe0"/><stop offset="0.2907" stop-color="#02ffd0"/><stop offset="0.3889" stop-color="#69ffc8"/><stop offset="0.4722" stop-color="#d6ffc0"/><stop offset="0.5" stop-color="#fffebc"/><stop offset="0.5463" stop-color="#ffc38b"/><stop offset="0.6093" stop-color="#ff8e60"/><stop offset="0.7" stop-color="#ff5e39"/><stop offset="0.8352" stop-color="#ff3417"/><stop offset="1" stop-color="#ff1700"/></linearGradient>
<linearGradient id="c178" gradientUnits="userSpaceOnUse" x1="1189" x2="1730" y1="0" y2="0"><stop offset="0" stop-color="#00ffe3"/><stop offset="0.2884" stop-color="#03ffd4"/><stop offset="0.3863" stop-color="#6bffcc"/><stop offset="0.4695" stop-color="#daffc4"/><stop offset="0.4954" stop-color="#fffcbf"/><stop offset="0.5416" stop-color="#ffc18e"/><stop offset="0.6044" stop-color="#ff8c62"/><stop offset="0.695" stop-color="#ff5d3a"/><stop offset="0.8299" stop-color="#ff3318"/><stop offset="1" stop-color="#ff1500"/></linearGradient>
<linearGradient id="c179" gradientUnits="userSpaceOnUse" x1="1189" x2="1732" y1="0" y2="0"><stop offset="0" stop-color="#00ffe6"/><stop offset="0.2855" stop-color="#02ffd7"/><stop offset="0.3812" stop-color="#69ffd0"/><stop offset="0.4622" stop-color="#d5ffc9"/><stop offset="0.4899" stop-color="#fffec5"/><stop offset="0.5341" stop-color="#ffc494"/><stop offset="0.5948" stop-color="#ff8f67"/><stop offset="0.6814" stop-color="#ff603f"/><stop offset="0.8122" stop-color="#ff351b"/><stop offset="1" stop-color="#ff1400"/></linearGradient>
<linearGradient id="c180" gradientUnits="userSpaceOnUse" x1="1190" x2="1735" y1="0" y2="0"><stop offset="0" stop-color="#00ffe9"/><stop offset="0.2826" stop-color="#02ffdb"/><stop offset="0.378" stop-color="#6bffd4"/><stop offset="0.4587" stop-color="#d9ffcd"/><stop offset="0.4844" stop-color="#fffdc9"/><stop offset="0.5284" stop-color="#ffc397"/><stop offset="0.589" stop-color="#ff8e69"/><stop offset="0.6752" stop-color="#ff5e41"/><stop offset="0.8055" stop-color="#ff341d"/><stop offset="1" stop-color="#ff1200"/></linearGradient>
<linearGradient id="c181" gradientUnits="userSpaceOnUse" x1="1190" x2="1737" y1="0" y2="0"><stop offset="0" stop-color="#00ffec"/><stop offset="0.2797" stop-color="#01ffdf"/><stop offset="0.3729" stop-color="#68ffd9"/><stop offset="0.4534" stop-color="#d7ffd2"/><stop offset="0.479" stop-color="#ffffcf"/><stop offset="0.5229" stop-color="#ffc39b"/><stop offset="0.5832" stop-color="#ff8e6d"/><stop offset="0.6691" stop-color="#ff5e43"/><stop offset="0.7971" stop-color="#ff341e"/><stop offset="0.9982" stop-color="#ff1100"/><stop offset="1" stop-color="#ff1100"/></linearGradient>
<linearGradient id="c182" gradientUnits="userSpaceOnUse" x1="1191" x2="1740" y1="0" y2="0"><stop offset="0" stop-color="#00ffee"/><stop offset="0.2769" stop-color="#02ffe3"/><stop offset="0.3698" stop-color="#6affdd"/><stop offset="0.4481" stop-color="#d8ffd7"/><stop offset="0.4736" stop-color="#fffdd3"/><stop offset="0.5173" stop-color="#ffc29e"/><stop offset="0.5774" stop-color="#ff8d6f"/><stop offset="0.663" stop-color="#ff5d44"/><stop offset="0.7905" stop-color="#ff3420"/><stop offset="0.9945" stop-color="#ff1000"/><stop offset="1" stop-color="#ff0f00"/></linearGradient>
<linearGradient id="c183" gradientUnits="userSpaceOnUse" x1="1191" x2="1742" y1="0" y2="0"><stop offset="0" stop-color="#00fff1"/><stop offset="0.274" stop-color="#01ffe7"/><stop offset="0.3666" stop-color="#6affe1"/><stop offset="0.4446" stop-color="#d9ffdb"/><stop offset="0.4701" stop-color="#fffcd7"/><stop offset="0.5136" stop-color="#ffc1a1"/><stop offset="0.5735" stop-color="#ff8b71"/><stop offset="0.6588" stop-color="#ff5c46"/><stop offset="0.7858" stop-color="#ff3321"/><stop offset="0.9891" stop-color="#ff0f00"/><stop offset="1" stop-color="#ff0e00"/></linearGradient>
<linearGradient id="c184" gradientUnits="userSpaceOnUse" x1="1192" x2="1744" y1="0" y2="0"><stop offset="0" stop-color="#00fff4"/><stop offset="0.2717" stop-color="#02ffea"/><stop offset="0.3623" stop-color="#6affe6"/><stop offset="0.4384" stop-color="#d7ffe0"/><stop offset="0.4638" stop-color="#fffedd"/><stop offset="0.5054" stop-color="#ffc4a8"/><stop offset="0.5634" stop-color="#ff8e77"/><stop offset="0.6467" stop-color="#ff5e4b"/><stop offset="0.7699" stop-color="#ff3424"/><stop offset="0.9674" stop-color="#ff1003"/><stop offset="1" stop-color="#ff0c00"/></linearGradient>
<linearGradient id="c185" gradientUnits="userSpaceOnUse" x1="1192" x2="1747" y1="0" y2="0"><stop offset="0" stop-color="#00fff7"/><stop offset="0.2703" stop-color="#03ffee"/><stop offset="0.3586" stop-color="#6affea"/><stop offset="0.4342" stop-color="#d7ffe5"/><stop offset="0.4595" stop-color="#fffce1"/><stop offset="0.5009" stop-color="#ffc2ab"/><stop offset="0.5586" stop-color="#ff8d79"/><stop offset="0.6414" stop-color="#ff5d4c"/><stop offset="0.764" stop-color="#ff3425"/><stop offset="0.9604" stop-color="#ff1004"/><stop offset="1" stop-color="#ff0b00"/></linearGradient>
<linearGradient id="c186" gradientUnits="userSpaceOnUse" x1="1192" x2="1749" y1="0" y2="0"><stop offset="0" stop-color="#00fffb"/><stop offset="0.2675" stop-color="#02fff3"/><stop offset="0.3555" stop-color="#69ffef"/><stop offset="0.4309" stop-color="#d8ffeb"/><stop offset="0.4542" stop-color="#fffee8"/><stop offset="0.4955" stop-color="#ffc3b0"/><stop offset="0.5512" stop-color="#ff8e7e"/><stop offset="0.632" stop-color="#ff5e50"/><stop offset="0.7522" stop-color="#ff3428"/><stop offset="0.9443" stop-color="#ff1006"/><stop offset="1" stop-color="#ff0900"/></linearGradient>
<linearGradient id="c187" gradientUnits="userSpaceOnUse" x1="1193" x2="1751" y1="0" y2="0"><stop offset="0" stop-color="#00fffe"/><stop offset="0.2652" stop-color="#03fff7"/><stop offset="0.353" stop-color="#6cfff3"/><stop offset="0.4265" stop-color="#d9fff0"/><stop offset="0.4498" stop-color="#fffdec"/><stop offset="0.491" stop-color="#ffc2b3"/><stop offset="0.5466" stop-color="#ff8d80"/><stop offset="0.6272" stop-color="#ff5d52"/><stop offset="0.7473" stop-color="#ff3329"/><stop offset="0.9391" stop-color="#ff1007"/><stop offset="1" stop-color="#ff0800"/></linearGradient>
<linearGradient id="c188" gradientUnits="userSpaceOnUse" x1="1193" x2="1754" y1="0" y2="0"><stop offset="0" stop-color="#00fdff"/><stop offset="0.262" stop-color="#02fffb"/><stop offset="0.3476" stop-color="#69fff8"/><stop offset="0.4207" stop-color="#d7fff5"/><stop offset="0.4439" stop-color="#fffff4"/><stop offset="0.4831" stop-color="#ffc4ba"/><stop offset="0.5383" stop-color="#ff8e85"/><stop offset="0.6168" stop-color="#ff5f56"/><stop offset="0.7326" stop-color="#ff352d"/><stop offset="0.918" stop-color="#ff1109"/><stop offset="1" stop-color="#ff0700"/></linearGradient>
<linearGradient id="c189" gradientUnits="userSpaceOnUse" x1="1194" x2="1756" y1="0" y2="0"><stop offset="0" stop-color="#00faff"/><stop offset="0.2598" stop-color="#02ffff"/><stop offset="0.3452" stop-color="#6bfffd"/><stop offset="0.4164" stop-color="#d8fffb"/><stop offset="0.4395" stop-color="#fffdf8"/><stop offset="0.4786" stop-color="#ffc3be"/><stop offset="0.532" stop-color="#ff8f89"/><stop offset="0.6085" stop-color="#ff5f59"/><stop offset="0.7224" stop-color="#ff3530"/><stop offset="0.9039" stop-color="#ff110c"/><stop offset="1" stop-color="#ff0500"/></linearGradient>
<linearGradient id="c190" gradientUnits="userSpaceOnUse" x1="1194" x2="1759" y1="0" y2="0"><stop offset="0" stop-color="#00f7ff"/><stop offset="0.2566" stop-color="#01faff"/><stop offset="0.3381" stop-color="#65fcff"/><stop offset="0.4071" stop-color="#cffeff"/><stop offset="0.4354" stop-color="#fffcfc"/><stop offset="0.4743" stop-color="#ffc2c1"/><stop offset="0.5274" stop-color="#ff8d8b"/><stop offset="0.6035" stop-color="#ff5e5b"/><stop offset="0.7168" stop-color="#ff3431"/><stop offset="0.8956" stop-color="#ff110d"/><stop offset="1" stop-color="#ff0400"/></linearGradient>
<linearGradient id="c191" gradientUnits="userSpaceOnUse" x1="1195" x2="1761" y1="0" y2="0"><stop offset="0" stop-color="#00f3ff"/><stop offset="0.2544" stop-color="#02f6ff"/><stop offset="0.3357" stop-color="#65f7ff"/><stop offset="0.4046" stop-color="#cef8ff"/><stop offset="0.4329" stop-color="#fff7fd"/><stop offset="0.4717" stop-color="#ffbec2"/><stop offset="0.5247" stop-color="#ff8b8c"/><stop offset="0.6007" stop-color="#ff5c5c"/><stop offset="0.7138" stop-color="#ff3332"/><stop offset="0.8922" stop-color="#ff100d"/><stop offset="1" stop-color="#ff0300"/></linearGradient>
<linearGradient id="c192" gradientUnits="userSpaceOnUse" x1="1195" x2="1763" y1="0" y2="0"><stop offset="0" stop-color="#00f0ff"/><stop offset="0.2535" stop-color="#03f2ff"/><stop offset="0.3363" stop-color="#68f2ff"/><stop offset="0.4049" stop-color="#d1f3ff"/><stop offset="0.4313" stop-color="#fff3fe"/><stop offset="0.4701" stop-color="#ffbbc3"/><stop offset="0.5229" stop-color="#ff888d"/><stop offset="0.5986" stop-color="#ff5a5d"/><stop offset="0.7113" stop-color="#ff3232"/><stop offset="0.8891" stop-color="#ff0f0e"/><stop offset="1" stop-color="#ff0100"/></linearGradient>
<linearGradient id="c193" gradientUnits="userSpaceOnUse" x1="1196" x2="1766" y1="0" y2="0"><stop offset="0" stop-color="#00edff"/><stop offset="0.2491" stop-color="#02eeff"/><stop offset="0.3316" stop-color="#65eeff"/><stop offset="0.4018" stop-color="#d0eeff"/><stop offset="0.4298" stop-color="#ffebfc"/><stop offset="0.4684" stop-color="#ffb5c2"/><stop offset="0.5228" stop-color="#ff828c"/><stop offset="0.6" stop-color="#ff555b"/><stop offset="0.714" stop-color="#ff2e31"/><stop offset="0.8947" stop-color="#ff0c0d"/><stop offset="1" stop-color="#ff0000"/></linearGradient>
<linearGradient id="c194" gradientUnits="userSpaceOnUse" x1="1196" x2="1768" y1="0" y2="0"><stop offset="0" stop-color="#00eaff"/><stop offset="0.2483" stop-color="#03e9ff"/><stop offset="0.3304" stop-color="#66e9ff"/><stop offset="0.4003" stop-color="#cfe9ff"/><stop offset="0.4283" stop-color="#ffe7fd"/><stop offset="0.4685" stop-color="#ffb0c1"/><stop offset="0.5227" stop-color="#ff7f8b"/><stop offset="0.5997" stop-color="#ff535b"/><stop offset="0.715" stop-color="#ff2c31"/><stop offset="0.8969" stop-color="#ff0b0d"/><stop offset="1" stop-color="#ff0000"/></linearGradient>
<linearGradient id="c195" gradientUnits="userSpaceOnUse" x1="1197" x2="1770" y1="0" y2="0"><stop offset="0" stop-color="#00e7ff"/><stop offset="0.2443" stop-color="#02e5ff"/><stop offset="0.3281" stop-color="#66e5ff"/><stop offset="0.3979" stop-color="#cfe4ff"/><stop offset="0.4258" stop-color="#ffe2fe"/><stop offset="0.466" stop-color="#ffacc2"/><stop offset="0.5201" stop-color="#ff7c8c"/><stop offset="0.5969" stop-color="#ff515c"/><stop offset="0.712" stop-color="#ff2a32"/><stop offset="0.8935" stop-color="#ff0a0d"/><stop offset="1" stop-color="#ff0000"/></linearGradient>
<linearGradient id="c196" gradientUnits="userSpaceOnUse" x1="1197" x2="1773" y1="0" y2="0"><stop offset="0" stop-color="#00e4ff"/><stop offset="0.2431" stop-color="#02e1ff"/><stop offset="0.3264" stop-color="#66e0ff"/><stop offset="0.3976" stop-color="#d1dfff"/><stop offset="0.4253" stop-color="#ffdbfc"/><stop offset="0.4653" stop-color="#ffa7c1"/><stop offset="0.5191" stop-color="#ff788c"/><stop offset="0.5972" stop-color="#ff4d5b"/><stop offset="0.7135" stop-color="#ff2831"/><stop offset="0.8976" stop-color="#ff080c"/><stop offset="1" stop-color="#ff0000"/></linearGradient>
<linearGradient id="c197" gradientUnits="userSpaceOnUse" x1="1198" x2="1775" y1="0" y2="0"><stop offset="0" stop-color="#00e1ff"/><stop offset="0.2392" stop-color="#01deff"/><stop offset="0.3241" stop-color="#66dcff"/><stop offset="0.3951" stop-color="#d1daff"/><stop offset="0.4229" stop-color="#ffd7fd"/><stop offset="0.4627" stop-color="#ffa4c2"/><stop offset="0.5182" stop-color="#ff748b"/><stop offset="0.5962" stop-color="#ff4b5b"/><stop offset="0.7123" stop-color="#ff2631"/><stop offset="0.896" stop-color="#ff060d"/><stop offset="1" stop-color="#ff0000"/></linearGradient>
<linearGradient id="c198" gradientUnits="userSpaceOnUse" x1="1198" x2="1777" y1="0" y2="0"><stop offset="0" stop-color="#00deff"/><stop offset="0.2383" stop-color="#02daff"/><stop offset="0.323" stop-color="#66d7ff"/><stop offset="0.3938" stop-color="#d0d5ff"/><stop offset="0.4214" stop-color="#ffd3fe"/><stop offset="0.4611" stop-color="#ffa0c3"/><stop offset="0.5164" stop-color="#ff728c"/><stop offset="0.5941" stop-color="#ff495c"/><stop offset="0.7098" stop-color="#ff2532"/><stop offset="0.8929" stop-color="#ff050d"/><stop offset="1" stop-color="#ff0000"/></linearGradient>
<linearGradient id="c199" gradientUnits="userSpaceOnUse" x1="1199" x2="1780" y1="0" y2="0"><stop offset="0" stop-color="#00dbff"/><stop offset="0.2358" stop-color="#03d6ff"/><stop offset="0.3201" stop-color="#67d3ff"/><stop offset="0.3907" stop-color="#cfd0ff"/><stop offset="0.42" stop-color="#ffccfc"/><stop offset="0.4596" stop-color="#ff9bc2"/><stop offset="0.5146" stop-color="#ff6e8c"/><stop offset="0.5938" stop-color="#ff455b"/><stop offset="0.7108" stop-color="#ff2231"/><stop offset="0.8967" stop-color="#ff030d"/><stop offset="1" stop-color="#ff0000"/></linearGradient>
<linearGradient id="c200" gradientUnits="userSpaceOnUse" x1="1199" x2="1782" y1="0" y2="0"><stop offset="0" stop-color="#00d8ff"/><stop offset="0.2333" stop-color="#02d2ff"/><stop offset="0.319" stop-color="#67cfff"/><stop offset="0.3911" stop-color="#d2cbff"/><stop offset="0.4185" stop-color="#ffc8fd"/><stop offset="0.4597" stop-color="#ff96c0"/><stop offset="0.5146" stop-color="#ff6b8b"/><stop offset="0.5935" stop-color="#ff435b"/><stop offset="0.7101" stop-color="#ff2031"/><stop offset="0.8954" stop-color="#ff020d"/><stop offset="1" stop-color="#ff0000"/></linearGradient>
<linearGradient id="c201" gradientUnits="userSpaceOnUse" x1="1200" x2="1784" y1="0" y2="0"><stop offset="0" stop-color="#00d5ff"/><stop offset="0.2312" stop-color="#03ceff"/><stop offset="0.3168" stop-color="#67cbff"/><stop offset="0.3887" stop-color="#d1c7ff"/><stop offset="0.4161" stop-color="#ffc4fe"/><stop offset="0.4572" stop-color="#ff93c1"/><stop offset="0.512" stop-color="#ff688c"/><stop offset="0.5908" stop-color="#ff415c"/><stop offset="0.7072" stop-color="#ff1f32"/><stop offset="0.8921" stop-color="#ff010d"/><stop offset="1" stop-color="#ff0000"/></linearGradient>
<linearGradient id="c202" gradientUnits="userSpaceOnUse" x1="1200" x2="1787" y1="0" y2="0"><stop offset="0" stop-color="#00d2ff"/><stop offset="0.2283" stop-color="#01cbff"/><stop offset="0.3135" stop-color="#65c7ff"/><stop offset="0.385" stop-color="#cec2ff"/><stop offset="0.414" stop-color="#ffc0ff"/><stop offset="0.4549" stop-color="#ff90c2"/><stop offset="0.5111" stop-color="#ff658c"/><stop offset="0.5894" stop-color="#ff3f5c"/><stop offset="0.707" stop-color="#ff1d32"/><stop offset="0.8927" stop-color="#ff000d"/><stop offset="1" stop-color="#ff0000"/></linearGradient>
<linearGradient id="c203" gradientUnits="userSpaceOnUse" x1="1201" x2="1789" y1="0" y2="0"><stop offset="0" stop-color="#00cfff"/><stop offset="0.2262" stop-color="#02c7ff"/><stop offset="0.3129" stop-color="#67c2ff"/><stop offset="0.3844" stop-color="#d0bdff"/><stop offset="0.4133" stop-color="#ffb9fd"/><stop offset="0.4541" stop-color="#ff8bc1"/><stop offset="0.5102" stop-color="#ff618c"/><stop offset="0.5901" stop-color="#ff3c5b"/><stop offset="0.7092" stop-color="#ff1a31"/><stop offset="0.8929" stop-color="#ff000d"/><stop offset="1" stop-color="#ff0000"/></linearGradient>
<linearGradient id="c204" gradientUnits="userSpaceOnUse" x1="1201" x2="1792" y1="0" y2="0"><stop offset="0" stop-color="#00cdff"/><stop offset="0.225" stop-color="#03c3ff"/><stop offset="0.3113" stop-color="#68beff"/><stop offset="0.3841" stop-color="#d2b9ff"/><stop offset="0.4112" stop-color="#ffb5fd"/><stop offset="0.4518" stop-color="#ff88c2"/><stop offset="0.5076" stop-color="#ff5f8c"/><stop offset="0.5871" stop-color="#ff3a5c"/><stop offset="0.7056" stop-color="#ff1932"/><stop offset="0.8816" stop-color="#ff000f"/><stop offset="1" stop-color="#ff0000"/></linearGradient>
<linearGradient id="c205" gradientUnits="userSpaceOnUse" x1="1202" x2="1794" y1="0" y2="0"><stop offset="0" stop-color="#00caff"/><stop offset="0.2213" stop-color="#02c0ff"/><stop offset="0.3074" stop-color="#65baff"/><stop offset="0.3801" stop-color="#cfb5ff"/><stop offset="0.4088" stop-color="#ffb2fe"/><stop offset="0.4493" stop-color="#ff85c3"/><stop offset="0.5051" stop-color="#ff5c8d"/><stop offset="0.5845" stop-color="#ff385d"/><stop offset="0.7027" stop-color="#ff1832"/><stop offset="0.8733" stop-color="#ff0010"/><stop offset="1" stop-color="#ff0000"/></linearGradient>
<linearGradient id="c206" gradientUnits="userSpaceOnUse" x1="1202" x2="1796" y1="0" y2="0"><stop offset="0" stop-color="#00c7ff"/><stop offset="0.2205" stop-color="#03bcff"/><stop offset="0.3081" stop-color="#68b6ff"/><stop offset="0.3805" stop-color="#d1b0ff"/><stop offset="0.4091" stop-color="#ffabfc"/><stop offset="0.4512" stop-color="#ff7fc0"/><stop offset="0.5084" stop-color="#ff578a"/><stop offset="0.5892" stop-color="#ff345b"/><stop offset="0.7104" stop-color="#ff1530"/><stop offset="0.8653" stop-color="#ff0011"/><stop offset="1" stop-color="#ff0000"/></linearGradient>
<linearGradient id="c207" gradientUnits="userSpaceOnUse" x1="1203" x2="1799" y1="0" y2="0"><stop offset="0" stop-color="#00c4ff"/><stop offset="0.2164" stop-color="#02b9ff"/><stop offset="0.3037" stop-color="#66b3ff"/><stop offset="0.3775" stop-color="#d0acff"/><stop offset="0.406" stop-color="#ffa8fd"/><stop offset="0.448" stop-color="#ff7cc1"/><stop offset="0.505" stop-color="#ff558b"/><stop offset="0.5856" stop-color="#ff325b"/><stop offset="0.7064" stop-color="#ff1331"/><stop offset="0.854" stop-color="#ff0013"/><stop offset="1" stop-color="#ff0000"/></linearGradient>
<linearGradient id="c208" gradientUnits="userSpaceOnUse" x1="1203" x2="1801" y1="0" y2="0"><stop offset="0" stop-color="#00c1ff"/><stop offset="0.2157" stop-color="#02b6ff"/><stop offset="0.3027" stop-color="#66afff"/><stop offset="0.3763" stop-color="#d0a8ff"/><stop offset="0.4047" stop-color="#ffa4fe"/><stop offset="0.4465" stop-color="#ff79c2"/><stop offset="0.5033" stop-color="#ff538c"/><stop offset="0.5836" stop-color="#ff305c"/><stop offset="0.704" stop-color="#ff1232"/><stop offset="0.8445" stop-color="#ff0015"/><stop offset="1" stop-color="#ff0000"/></linearGradient>
<linearGradient id="c209" gradientUnits="userSpaceOnUse" x1="1204" x2="1803" y1="0" y2="0"><stop offset="0" stop-color="#00bfff"/><stop offset="0.212" stop-color="#01b2ff"/><stop offset="0.3005" stop-color="#66abff"/><stop offset="0.374" stop-color="#cfa3ff"/><stop offset="0.404" stop-color="#ff9efc"/><stop offset="0.4457" stop-color="#ff75c1"/><stop offset="0.5025" stop-color="#ff4f8c"/><stop offset="0.5843" stop-color="#ff2e5b"/><stop offset="0.7062" stop-color="#ff1031"/><stop offset="0.8347" stop-color="#ff0016"/><stop offset="1" stop-color="#ff0001"/></linearGradient>
<linearGradient id="c210" gradientUnits="userSpaceOnUse" x1="1204" x2="1806" y1="0" y2="0"><stop offset="0" stop-color="#00bcff"/><stop offset="0.211" stop-color="#02afff"/><stop offset="0.299" stop-color="#66a7ff"/><stop offset="0.3738" stop-color="#d19fff"/><stop offset="0.402" stop-color="#ff9afd"/><stop offset="0.4435" stop-color="#ff72c2"/><stop offset="0.5" stop-color="#ff4d8d"/><stop offset="0.5814" stop-color="#ff2c5c"/><stop offset="0.7027" stop-color="#ff0f32"/><stop offset="0.8239" stop-color="#ff0018"/><stop offset="1" stop-color="#ff0001"/></linearGradient>
<linearGradient id="c211" gradientUnits="userSpaceOnUse" x1="1205" x2="1808" y1="0" y2="0"><stop offset="0" stop-color="#00b9ff"/><stop offset="0.209" stop-color="#03acff"/><stop offset="0.2968" stop-color="#67a4ff"/><stop offset="0.3715" stop-color="#d19bff"/><stop offset="0.3997" stop-color="#ff97fe"/><stop offset="0.4411" stop-color="#ff6fc3"/><stop offset="0.4975" stop-color="#ff4b8e"/><stop offset="0.5788" stop-color="#ff2a5d"/><stop offset="0.6998" stop-color="#ff0d32"/><stop offset="0.8126" stop-color="#ff001a"/><stop offset="1" stop-color="#ff0001"/></linearGradient>
<linearGradient id="c212" gradientUnits="userSpaceOnUse" x1="1205" x2="1810" y1="0" y2="0"><stop offset="0" stop-color="#00b6ff"/><stop offset="0.2066" stop-color="#02a9ff"/><stop offset="0.2959" stop-color="#67a0ff"/><stop offset="0.3702" stop-color="#d097ff"/><stop offset="0.4" stop-color="#ff91fc"/><stop offset="0.443" stop-color="#ff6ac0"/><stop offset="0.5008" stop-color="#ff468b"/><stop offset="0.5835" stop-color="#ff275b"/><stop offset="0.7074" stop-color="#ff0a30"/><stop offset="0.805" stop-color="#ff001b"/><stop offset="1" stop-color="#ff0001"/></linearGradient>
<linearGradient id="c213" gradientUnits="userSpaceOnUse" x1="1206" x2="1813" y1="0" y2="0"><stop offset="0" stop-color="#00b4ff"/><stop offset="0.2043" stop-color="#03a5ff"/><stop offset="0.2932" stop-color="#679cff"/><stop offset="0.3674" stop-color="#d093ff"/><stop offset="0.397" stop-color="#ff8efd"/><stop offset="0.4399" stop-color="#ff67c1"/><stop offset="0.4975" stop-color="#ff448c"/><stop offset="0.5799" stop-color="#ff255b"/><stop offset="0.7035" stop-color="#ff0931"/><stop offset="0.7941" stop-color="#ff001d"/><stop offset="1" stop-color="#ff0001"/></linearGradient>
<linearGradient id="c214" gradientUnits="userSpaceOnUse" x1="1206" x2="1815" y1="0" y2="0"><stop offset="0" stop-color="#00b1ff"/><stop offset="0.202" stop-color="#02a2ff"/><stop offset="0.2906" stop-color="#6599ff"/><stop offset="0.3662" stop-color="#cf8fff"/><stop offset="0.3957" stop-color="#ff8afe"/><stop offset="0.4384" stop-color="#ff64c2"/><stop offset="0.4959" stop-color="#ff428c"/><stop offset="0.578" stop-color="#ff235c"/><stop offset="0.6995" stop-color="#ff0832"/><stop offset="0.7849" stop-color="#ff001f"/><stop offset="1" stop-color="#ff0001"/></linearGradient>
<linearGradient id="c215" gradientUnits="userSpaceOnUse" x1="1207" x2="1810" y1="0" y2="0"><stop offset="0" stop-color="#00aeff"/><stop offset="0.2023" stop-color="#029fff"/><stop offset="0.2935" stop-color="#6795ff"/><stop offset="0.3698" stop-color="#d18bff"/><stop offset="0.3997" stop-color="#ff85fc"/><stop offset="0.4428" stop-color="#ff60c1"/><stop offset="0.5025" stop-color="#ff3e8b"/><stop offset="0.5871" stop-color="#ff205b"/><stop offset="0.7131" stop-color="#ff0631"/><stop offset="0.7944" stop-color="#ff001f"/><stop offset="1" stop-color="#ff0002"/></linearGradient>
<linearGradient id="c216" gradientUnits="userSpaceOnUse" x1="1208" x2="1805" y1="0" y2="0"><stop offset="0" stop-color="#00acff"/><stop offset="0.2027" stop-color="#039cff"/><stop offset="0.2948" stop-color="#6792ff"/><stop offset="0.3719" stop-color="#d187ff"/><stop offset="0.402" stop-color="#ff81fd"/><stop offset="0.4456" stop-color="#ff5dc2"/><stop offset="0.5059" stop-color="#ff3c8c"/><stop offset="0.5913" stop-color="#ff1f5b"/><stop offset="0.7186" stop-color="#ff0531"/><stop offset="0.8107" stop-color="#ff001e"/><stop offset="1" stop-color="#ff0003"/></linearGradient>
<linearGradient id="c217" gradientUnits="userSpaceOnUse" x1="1208" x2="1800" y1="0" y2="0"><stop offset="0" stop-color="#00a9ff"/><stop offset="0.2027" stop-color="#0299ff"/><stop offset="0.2956" stop-color="#668fff"/><stop offset="0.375" stop-color="#d084ff"/><stop offset="0.4054" stop-color="#ff7efe"/><stop offset="0.4493" stop-color="#ff5bc3"/><stop offset="0.5101" stop-color="#ff3a8c"/><stop offset="0.5963" stop-color="#ff1d5c"/><stop offset="0.7247" stop-color="#ff0432"/><stop offset="0.897" stop-color="#ff0011"/><stop offset="1" stop-color="#ff0005"/></linearGradient>
<linearGradient id="c218" gradientUnits="userSpaceOnUse" x1="1209" x2="1795" y1="0" y2="0"><stop offset="0" stop-color="#00a6ff"/><stop offset="0.2031" stop-color="#0396ff"/><stop offset="0.2986" stop-color="#688bff"/><stop offset="0.3788" stop-color="#d280ff"/><stop offset="0.4096" stop-color="#ff79fc"/><stop offset="0.4556" stop-color="#ff56c0"/><stop offset="0.5188" stop-color="#ff368a"/><stop offset="0.6075" stop-color="#ff1a5a"/><stop offset="0.7406" stop-color="#ff0130"/><stop offset="0.9522" stop-color="#ff000c"/><stop offset="1" stop-color="#ff0006"/></linearGradient>
<linearGradient id="c219" gradientUnits="userSpaceOnUse" x1="1209" x2="1790" y1="0" y2="0"><stop offset="0" stop-color="#00a4ff"/><stop offset="0.2031" stop-color="#0293ff"/><stop offset="0.2995" stop-color="#6688ff"/><stop offset="0.3804" stop-color="#cf7cff"/><stop offset="0.4131" stop-color="#ff76fd"/><stop offset="0.4596" stop-color="#ff53c1"/><stop offset="0.5232" stop-color="#ff348b"/><stop offset="0.6127" stop-color="#ff185b"/><stop offset="0.747" stop-color="#ff0031"/><stop offset="0.9604" stop-color="#ff000c"/><stop offset="1" stop-color="#ff0007"/></linearGradient>
<linearGradient id="c220" gradientUnits="userSpaceOnUse" x1="1210" x2="1784" y1="0" y2="0"><stop offset="0" stop-color="#00a1ff"/><stop offset="0.2038" stop-color="#0290ff"/><stop offset="0.3014" stop-color="#6685ff"/><stop offset="0.3833" stop-color="#cf79ff"/><stop offset="0.4164" stop-color="#ff72fe"/><stop offset="0.4634" stop-color="#ff50c2"/><stop offset="0.5279" stop-color="#ff328b"/><stop offset="0.6185" stop-color="#ff175c"/><stop offset="0.7544" stop-color="#ff0031"/><stop offset="0.9686" stop-color="#ff000d"/><stop offset="1" stop-color="#ff0009"/></linearGradient>
<linearGradient id="c221" gradientUnits="userSpaceOnUse" x1="1210" x2="1779" y1="0" y2="0"><stop offset="0" stop-color="#009fff"/><stop offset="0.2039" stop-color="#028dff"/><stop offset="0.304" stop-color="#6681ff"/><stop offset="0.3884" stop-color="#d175ff"/><stop offset="0.4218" stop-color="#ff6efc"/><stop offset="0.4692" stop-color="#ff4dc1"/><stop offset="0.5343" stop-color="#ff2f8b"/><stop offset="0.6274" stop-color="#ff145b"/><stop offset="0.761" stop-color="#ff0032"/><stop offset="0.9772" stop-color="#ff000d"/><stop offset="1" stop-color="#ff000b"/></linearGradient>
<linearGradient id="c222" gradientUnits="userSpaceOnUse" x1="1211" x2="1774" y1="0" y2="0"><stop offset="0" stop-color="#009cff"/><stop offset="0.2043" stop-color="#028aff"/><stop offset="0.3055" stop-color="#667eff"/><stop offset="0.3908" stop-color="#d071ff"/><stop offset="0.4245" stop-color="#ff6afd"/><stop offset="0.4725" stop-color="#ff4ac1"/><stop offset="0.5382" stop-color="#ff2d8c"/><stop offset="0.6323" stop-color="#ff135c"/><stop offset="0.7584" stop-color="#ff0034"/><stop offset="0.9716" stop-color="#ff000f"/><stop offset="1" stop-color="#ff000c"/></linearGradient>
<linearGradient id="c223" gradientUnits="userSpaceOnUse" x1="1212" x2="1769" y1="0" y2="0"><stop offset="0" stop-color="#009aff"/><stop offset="0.2047" stop-color="#0388ff"/><stop offset="0.307" stop-color="#677bff"/><stop offset="0.3932" stop-color="#d06eff"/><stop offset="0.4273" stop-color="#ff67fd"/><stop offset="0.4758" stop-color="#ff48c2"/><stop offset="0.5422" stop-color="#ff2b8d"/><stop offset="0.6373" stop-color="#ff115c"/><stop offset="0.7576" stop-color="#ff0037"/><stop offset="0.9677" stop-color="#ff0012"/><stop offset="1" stop-color="#ff000e"/></linearGradient>
<linearGradient id="c224" gradientUnits="userSpaceOnUse" x1="1212" x2="1764" y1="0" y2="0"><stop offset="0" stop-color="#0097ff"/><stop offset="0.2047" stop-color="#0285ff"/><stop offset="0.3098" stop-color="#6778ff"/><stop offset="0.3986" stop-color="#d26aff"/><stop offset="0.4312" stop-color="#ff64fe"/><stop offset="0.4801" stop-color="#ff45c3"/><stop offset="0.5471" stop-color="#ff298d"/><stop offset="0.6431" stop-color="#ff105d"/><stop offset="0.7572" stop-color="#ff0039"/><stop offset="0.9638" stop-color="#ff0014"/><stop offset="1" stop-color="#ff000f"/></linearGradient>
<linearGradient id="c225" gradientUnits="userSpaceOnUse" x1="1213" x2="1759" y1="0" y2="0"><stop offset="0" stop-color="#0095ff"/><stop offset="0.2051" stop-color="#0382ff"/><stop offset="0.3114" stop-color="#6775ff"/><stop offset="0.4011" stop-color="#d167ff"/><stop offset="0.4359" stop-color="#ff5ffc"/><stop offset="0.4872" stop-color="#ff41c0"/><stop offset="0.5568" stop-color="#ff258b"/><stop offset="0.6557" stop-color="#ff0d5b"/><stop offset="0.7564" stop-color="#ff003c"/><stop offset="0.9615" stop-color="#ff0016"/><stop offset="1" stop-color="#ff0011"/></linearGradient>
<linearGradient id="c226" gradientUnits="userSpaceOnUse" x1="1213" x2="1754" y1="0" y2="0"><stop offset="0" stop-color="#0092ff"/><stop offset="0.2052" stop-color="#027fff"/><stop offset="0.3124" stop-color="#6572ff"/><stop offset="0.403" stop-color="#ce64ff"/><stop offset="0.4399" stop-color="#ff5cfd"/><stop offset="0.4917" stop-color="#ff3ec1"/><stop offset="0.5619" stop-color="#ff238c"/><stop offset="0.6617" stop-color="#ff0b5c"/><stop offset="0.7542" stop-color="#ff003f"/><stop offset="0.9556" stop-color="#ff0018"/><stop offset="1" stop-color="#ff0012"/></linearGradient>
<linearGradient id="c227" gradientUnits="userSpaceOnUse" x1="1214" x2="1749" y1="0" y2="0"><stop offset="0" stop-color="#0090ff"/><stop offset="0.2056" stop-color="#027dff"/><stop offset="0.3159" stop-color="#676fff"/><stop offset="0.4075" stop-color="#d060ff"/><stop offset="0.443" stop-color="#ff59fe"/><stop offset="0.4953" stop-color="#ff3cc2"/><stop offset="0.5664" stop-color="#ff218c"/><stop offset="0.6673" stop-color="#ff0a5c"/><stop offset="0.7551" stop-color="#ff0041"/><stop offset="0.9551" stop-color="#ff001a"/><stop offset="1" stop-color="#ff0014"/></linearGradient>
<linearGradient id="c228" gradientUnits="userSpaceOnUse" x1="1215" x2="1744" y1="0" y2="0"><stop offset="0" stop-color="#008dff"/><stop offset="0.206" stop-color="#037aff"/><stop offset="0.3176" stop-color="#676cff"/><stop offset="0.4121" stop-color="#d25cff"/><stop offset="0.448" stop-color="#ff55fc"/><stop offset="0.5009" stop-color="#ff38c1"/><stop offset="0.5747" stop-color="#ff1e8b"/><stop offset="0.6786" stop-color="#ff075b"/><stop offset="0.758" stop-color="#ff0042"/><stop offset="0.9565" stop-color="#ff001c"/><stop offset="1" stop-color="#ff0016"/></linearGradient>
<linearGradient id="c229" gradientUnits="userSpaceOnUse" x1="1215" x2="1739" y1="0" y2="0"><stop offset="0" stop-color="#008bff"/><stop offset="0.2061" stop-color="#0277ff"/><stop offset="0.3187" stop-color="#6669ff"/><stop offset="0.4141" stop-color="#cf5aff"/><stop offset="0.4523" stop-color="#ff52fd"/><stop offset="0.5057" stop-color="#ff36c2"/><stop offset="0.5802" stop-color="#ff1d8c"/><stop offset="0.6851" stop-color="#ff065c"/><stop offset="0.7615" stop-color="#ff0044"/><stop offset="0.9599" stop-color="#ff001d"/><stop offset="1" stop-color="#ff0017"/></linearGradient>
<linearGradient id="c230" gradientUnits="userSpaceOnUse" x1="1216" x2="1734" y1="0" y2="0"><stop offset="0" stop-color="#0089ff"/><stop offset="0.2066" stop-color="#0375ff"/><stop offset="0.3224" stop-color="#6866ff"/><stop offset="0.4189" stop-color="#d156ff"/><stop offset="0.4556" stop-color="#ff4ffe"/><stop offset="0.5097" stop-color="#ff34c3"/><stop offset="0.5849" stop-color="#ff1b8c"/><stop offset="0.6911" stop-color="#ff055c"/><stop offset="0.7799" stop-color="#ff0042"/><stop offset="0.9884" stop-color="#ff001b"/><stop offset="1" stop-color="#ff0019"/></linearGradient>
<linearGradient id="c231" gradientUnits="userSpaceOnUse" x1="1216" x2="1729" y1="0" y2="0"><stop offset="0" stop-color="#0086ff"/><stop offset="0.2066" stop-color="#0272ff"/><stop offset="0.3236" stop-color="#6663ff"/><stop offset="0.423" stop-color="#d153ff"/><stop offset="0.462" stop-color="#ff4bfc"/><stop offset="0.5185" stop-color="#ff30c0"/><stop offset="0.5945" stop-color="#ff188b"/><stop offset="0.7037" stop-color="#ff025b"/><stop offset="0.8655" stop-color="#ff0031"/><stop offset="1" stop-color="#ff001b"/></linearGradient>
<linearGradient id="c232" gradientUnits="userSpaceOnUse" x1="1217" x2="1724" y1="0" y2="0"><stop offset="0" stop-color="#0084ff"/><stop offset="0.2071" stop-color="#0370ff"/><stop offset="0.3254" stop-color="#6660ff"/><stop offset="0.426" stop-color="#d050ff"/><stop offset="0.4655" stop-color="#ff48fd"/><stop offset="0.5227" stop-color="#ff2dc1"/><stop offset="0.5996" stop-color="#ff168c"/><stop offset="0.7101" stop-color="#ff015c"/><stop offset="0.8738" stop-color="#ff0031"/><stop offset="1" stop-color="#ff001d"/></linearGradient>
<linearGradient id="c233" gradientUnits="userSpaceOnUse" x1="1218" x2="1719" y1="0" y2="0"><stop offset="0" stop-color="#0081ff"/><stop offset="0.2056" stop-color="#026dff"/><stop offset="0.3273" stop-color="#665dff"/><stop offset="0.4291" stop-color="#d04dff"/><stop offset="0.4691" stop-color="#ff45fe"/><stop offset="0.5269" stop-color="#ff2bc2"/><stop offset="0.6068" stop-color="#ff148b"/><stop offset="0.7186" stop-color="#ff005c"/><stop offset="0.8862" stop-color="#ff0031"/><stop offset="1" stop-color="#ff001f"/></linearGradient>
<linearGradient id="c234" gradientUnits="userSpaceOnUse" x1="1218" x2="1714" y1="0" y2="0"><stop offset="0" stop-color="#007fff"/><stop offset="0.2077" stop-color="#026bff"/><stop offset="0.3306" stop-color="#665bff"/><stop offset="0.4335" stop-color="#cf4aff"/><stop offset="0.4758" stop-color="#ff41fc"/><stop offset="0.5343" stop-color="#ff28c1"/><stop offset="0.6149" stop-color="#ff118b"/><stop offset="0.7278" stop-color="#ff005c"/><stop offset="0.8972" stop-color="#ff0031"/><stop offset="1" stop-color="#ff0021"/></linearGradient>
<linearGradient id="c235" gradientUnits="userSpaceOnUse" x1="1219" x2="1708" y1="0" y2="0"><stop offset="0" stop-color="#007dff"/><stop offset="0.2086" stop-color="#0368ff"/><stop offset="0.3333" stop-color="#6658ff"/><stop offset="0.4397" stop-color="#d146ff"/><stop offset="0.4806" stop-color="#ff3efd"/><stop offset="0.5399" stop-color="#ff26c2"/><stop offset="0.6217" stop-color="#ff108c"/><stop offset="0.728" stop-color="#ff005f"/><stop offset="0.8957" stop-color="#ff0034"/><stop offset="1" stop-color="#ff0023"/></linearGradient>
<linearGradient id="c236" gradientUnits="userSpaceOnUse" x1="1220" x2="1703" y1="0" y2="0"><stop offset="0" stop-color="#007aff"/><stop offset="0.207" stop-color="#0266ff"/><stop offset="0.3354" stop-color="#6755ff"/><stop offset="0.4431" stop-color="#d143ff"/><stop offset="0.4845" stop-color="#ff3bfe"/><stop offset="0.5445" stop-color="#ff23c3"/><stop offset="0.6273" stop-color="#ff0e8d"/><stop offset="0.7246" stop-color="#ff0063"/><stop offset="0.8882" stop-color="#ff0038"/><stop offset="1" stop-color="#ff0025"/></linearGradient>
<linearGradient id="c237" gradientUnits="userSpaceOnUse" x1="1220" x2="1698" y1="0" y2="0"><stop offset="0" stop-color="#0078ff"/><stop offset="0.2092" stop-color="#0363ff"/><stop offset="0.3389" stop-color="#6752ff"/><stop offset="0.4477" stop-color="#d040ff"/><stop offset="0.4916" stop-color="#ff37fc"/><stop offset="0.5544" stop-color="#ff20c0"/><stop offset="0.6402" stop-color="#ff0b8a"/><stop offset="0.7259" stop-color="#ff0066"/><stop offset="0.8891" stop-color="#ff003a"/><stop offset="1" stop-color="#ff0027"/></linearGradient>
<linearGradient id="c238" gradientUnits="userSpaceOnUse" x1="1221" x2="1693" y1="0" y2="0"><stop offset="0" stop-color="#0076ff"/><stop offset="0.2076" stop-color="#0261ff"/><stop offset="0.3411" stop-color="#6750ff"/><stop offset="0.4534" stop-color="#d23dff"/><stop offset="0.4958" stop-color="#ff34fd"/><stop offset="0.5593" stop-color="#ff1ec1"/><stop offset="0.6462" stop-color="#ff098b"/><stop offset="0.7246" stop-color="#ff006a"/><stop offset="0.8856" stop-color="#ff003e"/><stop offset="1" stop-color="#ff0029"/></linearGradient>
<linearGradient id="c239" gradientUnits="userSpaceOnUse" x1="1222" x2="1688" y1="0" y2="0"><stop offset="0" stop-color="#0073ff"/><stop offset="0.2082" stop-color="#025fff"/><stop offset="0.3433" stop-color="#674dff"/><stop offset="0.4571" stop-color="#d23aff"/><stop offset="0.5" stop-color="#ff32fd"/><stop offset="0.5644" stop-color="#ff1bc2"/><stop offset="0.6524" stop-color="#ff078c"/><stop offset="0.7253" stop-color="#ff006d"/><stop offset="0.8841" stop-color="#ff0040"/><stop offset="1" stop-color="#ff002b"/></linearGradient>
<linearGradient id="c240" gradientUnits="userSpaceOnUse" x1="1222" x2="1683" y1="0" y2="0"><stop offset="0" stop-color="#0071ff"/><stop offset="0.2104" stop-color="#035cff"/><stop offset="0.3471" stop-color="#674aff"/><stop offset="0.462" stop-color="#d137ff"/><stop offset="0.5076" stop-color="#ff2efc"/><stop offset="0.5727" stop-color="#ff19c1"/><stop offset="0.6616" stop-color="#ff058b"/><stop offset="0.7375" stop-color="#ff006c"/><stop offset="0.9002" stop-color="#ff0040"/><stop offset="1" stop-color="#ff002d"/></linearGradient>
<linearGradient id="c241" gradientUnits="userSpaceOnUse" x1="1223" x2="1678" y1="0" y2="0"><stop offset="0" stop-color="#006fff"/><stop offset="0.2088" stop-color="#025aff"/><stop offset="0.3495" stop-color="#6748ff"/><stop offset="0.4659" stop-color="#d135ff"/><stop offset="0.5121" stop-color="#ff2bfd"/><stop offset="0.578" stop-color="#ff16c2"/><stop offset="0.6681" stop-color="#ff038c"/><stop offset="0.7978" stop-color="#ff005c"/><stop offset="0.9912" stop-color="#ff0031"/><stop offset="1" stop-color="#ff0030"/></linearGradient>
<linearGradient id="c242" gradientUnits="userSpaceOnUse" x1="1224" x2="1673" y1="0" y2="0"><stop offset="0" stop-color="#006dff"/><stop offset="0.2094" stop-color="#0358ff"/><stop offset="0.3519" stop-color="#6745ff"/><stop offset="0.4722" stop-color="#d231ff"/><stop offset="0.5167" stop-color="#ff29fd"/><stop offset="0.5835" stop-color="#ff14c2"/><stop offset="0.6748" stop-color="#ff028d"/><stop offset="0.8062" stop-color="#ff005c"/><stop offset="1" stop-color="#ff0032"/></linearGradient>
<linearGradient id="c243" gradientUnits="userSpaceOnUse" x1="1224" x2="1668" y1="0" y2="0"><stop offset="0" stop-color="#006aff"/><stop offset="0.2095" stop-color="#0256ff"/><stop offset="0.3536" stop-color="#6643ff"/><stop offset="0.4752" stop-color="#d02fff"/><stop offset="0.5248" stop-color="#ff25fc"/><stop offset="0.5946" stop-color="#ff11c0"/><stop offset="0.6892" stop-color="#ff008a"/><stop offset="0.8243" stop-color="#ff005a"/><stop offset="1" stop-color="#ff0034"/></linearGradient>
<linearGradient id="c244" gradientUnits="userSpaceOnUse" x1="1225" x2="1663" y1="0" y2="0"><stop offset="0" stop-color="#0068ff"/><stop offset="0.21" stop-color="#0353ff"/><stop offset="0.3584" stop-color="#6840ff"/><stop offset="0.4817" stop-color="#d12cff"/><stop offset="0.5297" stop-color="#ff22fc"/><stop offset="0.6005" stop-color="#ff0fc1"/><stop offset="0.6963" stop-color="#ff008b"/><stop offset="0.8333" stop-color="#ff005b"/><stop offset="1" stop-color="#ff0037"/></linearGradient>
<linearGradient id="c245" gradientUnits="userSpaceOnUse" x1="1226" x2="1658" y1="0" y2="0"><stop offset="0" stop-color="#0066ff"/><stop offset="0.2083" stop-color="#0251ff"/><stop offset="0.3588" stop-color="#663eff"/><stop offset="0.4861" stop-color="#d129ff"/><stop offset="0.5347" stop-color="#ff20fd"/><stop offset="0.6065" stop-color="#ff0dc1"/><stop offset="0.6944" stop-color="#ff0090"/><stop offset="0.8287" stop-color="#ff0060"/><stop offset="1" stop-color="#ff0039"/></linearGradient>
<linearGradient id="c246" gradientUnits="userSpaceOnUse" x1="1227" x2="1653" y1="0" y2="0"><stop offset="0" stop-color="#0064ff"/><stop offset="0.2089" stop-color="#024fff"/><stop offset="0.3615" stop-color="#663bff"/><stop offset="0.4906" stop-color="#d127ff"/><stop offset="0.5399" stop-color="#ff1dfe"/><stop offset="0.6127" stop-color="#ff0bc2"/><stop offset="0.6925" stop-color="#ff0095"/><stop offset="0.8239" stop-color="#ff0064"/><stop offset="1" stop-color="#ff003c"/></linearGradient>
<linearGradient id="c247" gradientUnits="userSpaceOnUse" x1="1227" x2="1648" y1="0" y2="0"><stop offset="0" stop-color="#0062ff"/><stop offset="0.2114" stop-color="#034dff"/><stop offset="0.3682" stop-color="#6839ff"/><stop offset="0.4988" stop-color="#d224ff"/><stop offset="0.5487" stop-color="#ff1afc"/><stop offset="0.6223" stop-color="#ff08c1"/><stop offset="0.6936" stop-color="#ff0099"/><stop offset="0.8242" stop-color="#ff0068"/><stop offset="1" stop-color="#ff003f"/></linearGradient>
<linearGradient id="c248" gradientUnits="userSpaceOnUse" x1="1228" x2="1643" y1="0" y2="0"><stop offset="0" stop-color="#005fff"/><stop offset="0.2096" stop-color="#024bff"/><stop offset="0.3687" stop-color="#6737ff"/><stop offset="0.5012" stop-color="#d021ff"/><stop offset="0.5542" stop-color="#ff17fd"/><stop offset="0.6289" stop-color="#ff06c2"/><stop offset="0.6964" stop-color="#ff009c"/><stop offset="0.8265" stop-color="#ff006a"/><stop offset="1" stop-color="#ff0041"/></linearGradient>
<linearGradient id="c249" gradientUnits="userSpaceOnUse" x1="1229" x2="1638" y1="0" y2="0"><stop offset="0" stop-color="#005dff"/><stop offset="0.2103" stop-color="#0348ff"/><stop offset="0.3716" stop-color="#6734ff"/><stop offset="0.5086" stop-color="#d11eff"/><stop offset="0.5599" stop-color="#ff15fe"/><stop offset="0.6357" stop-color="#ff04c3"/><stop offset="0.7359" stop-color="#ff008f"/><stop offset="0.8826" stop-color="#ff005e"/><stop offset="1" stop-color="#ff0044"/></linearGradient>
<linearGradient id="c250" gradientUnits="userSpaceOnUse" x1="1230" x2="1633" y1="0" y2="0"><stop offset="0" stop-color="#005bff"/><stop offset="0.2084" stop-color="#0247ff"/><stop offset="0.3747" stop-color="#6732ff"/><stop offset="0.5136" stop-color="#d11cff"/><stop offset="0.5682" stop-color="#ff12fc"/><stop offset="0.6476" stop-color="#ff01c0"/><stop offset="0.7568" stop-color="#ff008a"/><stop offset="0.9107" stop-color="#ff005b"/><stop offset="1" stop-color="#ff0047"/></linearGradient>
<linearGradient id="c251" gradientUnits="userSpaceOnUse" x1="1230" x2="1627" y1="0" y2="0"><stop offset="0" stop-color="#0059ff"/><stop offset="0.2116" stop-color="#0244ff"/><stop offset="0.3804" stop-color="#672fff"/><stop offset="0.5214" stop-color="#d119ff"/><stop offset="0.5768" stop-color="#ff0ffd"/><stop offset="0.6574" stop-color="#ff00c1"/><stop offset="0.7683" stop-color="#ff008b"/><stop offset="0.9244" stop-color="#ff005b"/><stop offset="1" stop-color="#ff004b"/></linearGradient>
<linearGradient id="c252" gradientUnits="userSpaceOnUse" x1="1231" x2="1622" y1="0" y2="0"><stop offset="0" stop-color="#0057ff"/><stop offset="0.2123" stop-color="#0342ff"/><stop offset="0.3836" stop-color="#672dff"/><stop offset="0.5294" stop-color="#d216ff"/><stop offset="0.5831" stop-color="#ff0dfe"/><stop offset="0.665" stop-color="#ff00c2"/><stop offset="0.7775" stop-color="#ff008c"/><stop offset="0.9361" stop-color="#ff005c"/><stop offset="1" stop-color="#ff004e"/></linearGradient>
<linearGradient id="c253" gradientUnits="userSpaceOnUse" x1="1232" x2="1617" y1="0" y2="0"><stop offset="0" stop-color="#0054ff"/><stop offset="0.2104" stop-color="#0240ff"/><stop offset="0.387" stop-color="#672bff"/><stop offset="0.5351" stop-color="#d214ff"/><stop offset="0.5922" stop-color="#ff0afc"/><stop offset="0.6623" stop-color="#ff00c9"/><stop offset="0.7714" stop-color="#ff0093"/><stop offset="0.9273" stop-color="#ff0061"/><stop offset="1" stop-color="#ff0051"/></linearGradient>
<linearGradient id="c254" gradientUnits="userSpaceOnUse" x1="1233" x2="1612" y1="0" y2="0"><stop offset="0" stop-color="#0052ff"/><stop offset="0.2111" stop-color="#033eff"/><stop offset="0.3905" stop-color="#6728ff"/><stop offset="0.5409" stop-color="#d112ff"/><stop offset="0.5989" stop-color="#ff07fd"/><stop offset="0.6623" stop-color="#ff00cf"/><stop offset="0.7704" stop-color="#ff0097"/><stop offset="0.9235" stop-color="#ff0066"/><stop offset="1" stop-color="#ff0054"/></linearGradient>
<linearGradient id="c255" gradientUnits="userSpaceOnUse" x1="1234" x2="1607" y1="0" y2="0"><stop offset="0" stop-color="#0050ff"/><stop offset="0.2091" stop-color="#023cff"/><stop offset="0.3914" stop-color="#6627ff"/><stop offset="0.5469" stop-color="#d10fff"/><stop offset="0.6059" stop-color="#ff05fe"/><stop offset="0.6783" stop-color="#ff00ca"/><stop offset="0.7909" stop-color="#ff0094"/><stop offset="0.9517" stop-color="#ff0063"/><stop offset="1" stop-color="#ff0058"/></linearGradient>
<linearGradient id="c256" gradientUnits="userSpaceOnUse" x1="1234" x2="1602" y1="0" y2="0"><stop offset="0" stop-color="#004eff"/><stop offset="0.212" stop-color="#033aff"/><stop offset="0.3995" stop-color="#6824ff"/><stop offset="0.5571" stop-color="#d30cff"/><stop offset="0.6168" stop-color="#ff02fc"/><stop offset="0.7065" stop-color="#ff00c0"/><stop offset="0.8288" stop-color="#ff008b"/><stop offset="1" stop-color="#ff005b"/></linearGradient>
<linearGradient id="c257" gradientUnits="userSpaceOnUse" x1="1235" x2="1597" y1="0" y2="0"><stop offset="0" stop-color="#004cff"/><stop offset="0.2099" stop-color="#0238ff"/><stop offset="0.4006" stop-color="#6622ff"/><stop offset="0.5608" stop-color="#d00aff"/><stop offset="0.6243" stop-color="#ff00fd"/><stop offset="0.7155" stop-color="#ff00c1"/><stop offset="0.8398" stop-color="#ff008b"/><stop offset="1" stop-color="#ff005f"/></linearGradient>
<linearGradient id="c258" gradientUnits="userSpaceOnUse" x1="1236" x2="1592" y1="0" y2="0"><stop offset="0" stop-color="#004aff"/><stop offset="0.2107" stop-color="#0236ff"/><stop offset="0.4045" stop-color="#6620ff"/><stop offset="0.5674" stop-color="#d008ff"/><stop offset="0.632" stop-color="#ff00fd"/><stop offset="0.7247" stop-color="#ff00c2"/><stop offset="0.8511" stop-color="#ff008c"/><stop offset="1" stop-color="#ff0062"/></linearGradient>
<linearGradient id="c259" gradientUnits="userSpaceOnUse" x1="1237" x2="1587" y1="0" y2="0"><stop offset="0" stop-color="#0048ff"/><stop offset="0.2114" stop-color="#0334ff"/><stop offset="0.4114" stop-color="#681dff"/><stop offset="0.5771" stop-color="#d105ff"/><stop offset="0.6429" stop-color="#ff00fc"/><stop offset="0.7371" stop-color="#ff00c1"/><stop offset="0.8686" stop-color="#ff008b"/><stop offset="1" stop-color="#ff0066"/></linearGradient>
<linearGradient id="c260" gradientUnits="userSpaceOnUse" x1="1238" x2="1582" y1="0" y2="0"><stop offset="0" stop-color="#0046ff"/><stop offset="0.2093" stop-color="#0233ff"/><stop offset="0.4128" stop-color="#671cff"/><stop offset="0.5843" stop-color="#d103ff"/><stop offset="0.6512" stop-color="#ff00fd"/><stop offset="0.7471" stop-color="#ff00c2"/><stop offset="0.8808" stop-color="#ff008b"/><stop offset="1" stop-color="#ff006a"/></linearGradient>
<linearGradient id="c261" gradientUnits="userSpaceOnUse" x1="1239" x2="1577" y1="0" y2="0"><stop offset="0" stop-color="#0044ff"/><stop offset="0.2101" stop-color="#0331ff"/><stop offset="0.4172" stop-color="#6719ff"/><stop offset="0.5917" stop-color="#d001ff"/><stop offset="0.6598" stop-color="#ff00fd"/><stop offset="0.7574" stop-color="#ff00c2"/><stop offset="0.8935" stop-color="#ff008c"/><stop offset="1" stop-color="#ff006e"/></linearGradient>
<linearGradient id="c262" gradientUnits="userSpaceOnUse" x1="1239" x2="1572" y1="0" y2="0"><stop offset="0" stop-color="#0042ff"/><stop offset="0.2102" stop-color="#022fff"/><stop offset="0.4234" stop-color="#6717ff"/><stop offset="0.6006" stop-color="#d000ff"/><stop offset="0.6727" stop-color="#ff00fc"/><stop offset="0.7748" stop-color="#ff00c0"/><stop offset="0.9129" stop-color="#ff008b"/><stop offset="1" stop-color="#ff0073"/></linearGradient>
<linearGradient id="c263" gradientUnits="userSpaceOnUse" x1="1240" x2="1567" y1="0" y2="0"><stop offset="0" stop-color="#0040ff"/><stop offset="0.211" stop-color="#032dff"/><stop offset="0.4281" stop-color="#6715ff"/><stop offset="0.6086" stop-color="#d000ff"/><stop offset="0.682" stop-color="#ff00fc"/><stop offset="0.7859" stop-color="#ff00c1"/><stop offset="0.9297" stop-color="#ff008a"/><stop offset="1" stop-color="#ff0077"/></linearGradient>
<linearGradient id="c264" gradientUnits="userSpaceOnUse" x1="1241" x2="1562" y1="0" y2="0"><stop offset="0" stop-color="#003eff"/><stop offset="0.2118" stop-color="#032bff"/><stop offset="0.433" stop-color="#6713ff"/><stop offset="0.6012" stop-color="#c600ff"/><stop offset="0.6916" stop-color="#ff00fd"/><stop offset="0.7975" stop-color="#ff00c1"/><stop offset="0.9439" stop-color="#ff008b"/><stop offset="1" stop-color="#ff007c"/></linearGradient>
<linearGradient id="c265" gradientUnits="userSpaceOnUse" x1="1242" x2="1557" y1="0" y2="0"><stop offset="0" stop-color="#003cff"/><stop offset="0.2095" stop-color="#0229ff"/><stop offset="0.4381" stop-color="#6711ff"/><stop offset="0.5968" stop-color="#be00ff"/><stop offset="0.7016" stop-color="#ff00fe"/><stop offset="0.8095" stop-color="#ff00c2"/><stop offset="0.9587" stop-color="#ff008c"/><stop offset="1" stop-color="#ff0080"/></linearGradient>
<linearGradient id="c266" gradientUnits="userSpaceOnUse" x1="1243" x2="1551" y1="0" y2="0"><stop offset="0" stop-color="#0039ff"/><stop offset="0.211" stop-color="#0328ff"/><stop offset="0.4448" stop-color="#670fff"/><stop offset="0.5942" stop-color="#b600ff"/><stop offset="0.7175" stop-color="#ff00fc"/><stop offset="0.8279" stop-color="#ff00c1"/><stop offset="0.9805" stop-color="#ff008c"/><stop offset="1" stop-color="#ff0086"/></linearGradient>
<linearGradient id="c267" gradientUnits="userSpaceOnUse" x1="1244" x2="1546" y1="0" y2="0"><stop offset="0" stop-color="#0037ff"/><stop offset="0.2086" stop-color="#0226ff"/><stop offset="0.447" stop-color="#660dff"/><stop offset="0.5861" stop-color="#ac00ff"/><stop offset="0.7285" stop-color="#ff00fd"/><stop offset="0.8411" stop-color="#ff00c2"/><stop offset="0.9967" stop-color="#ff008c"/><stop offset="1" stop-color="#ff008b"/></linearGradient>
<linearGradient id="c268" gradientUnits="userSpaceOnUse" x1="1245" x2="1541" y1="0" y2="0"><stop offset="0" stop-color="#0035ff"/><stop offset="0.2095" stop-color="#0324ff"/><stop offset="0.4561" stop-color="#680bff"/><stop offset="0.5811" stop-color="#a500ff"/><stop offset="0.7399" stop-color="#ff00fe"/><stop offset="0.8581" stop-color="#ff00c1"/><stop offset="1" stop-color="#ff0091"/></linearGradient>
<linearGradient id="c269" gradientUnits="userSpaceOnUse" x1="1246" x2="1536" y1="0" y2="0"><stop offset="0" stop-color="#0033ff"/><stop offset="0.2069" stop-color="#0223ff"/><stop offset="0.4586" stop-color="#6609ff"/><stop offset="0.5759" stop-color="#9e00ff"/><stop offset="0.7552" stop-color="#ff00fc"/><stop offset="0.8759" stop-color="#ff00c1"/><stop offset="1" stop-color="#ff0096"/></linearGradient>
<linearGradient id="c270" gradientUnits="userSpaceOnUse" x1="1247" x2="1531" y1="0" y2="0"><stop offset="0" stop-color="#0031ff"/><stop offset="0.2077" stop-color="#0221ff"/><stop offset="0.4648" stop-color="#6607ff"/><stop offset="0.5739" stop-color="#9900ff"/><stop offset="0.7676" stop-color="#ff00fd"/><stop offset="0.8908" stop-color="#ff00c1"/><stop offset="1" stop-color="#ff009c"/></linearGradient>
<linearGradient id="c271" gradientUnits="userSpaceOnUse" x1="1247" x2="1526" y1="0" y2="0"><stop offset="0" stop-color="#0030ff"/><stop offset="0.2115" stop-color="#031fff"/><stop offset="0.4767" stop-color="#6805ff"/><stop offset="0.5878" stop-color="#9a00ff"/><stop offset="0.7814" stop-color="#ff00fe"/><stop offset="0.9068" stop-color="#ff00c2"/><stop offset="1" stop-color="#ff00a2"/></linearGradient>
<linearGradient id="c272" gradientUnits="userSpaceOnUse" x1="1248" x2="1521" y1="0" y2="0"><stop offset="0" stop-color="#002eff"/><stop offset="0.2088" stop-color="#021dff"/><stop offset="0.4799" stop-color="#6704ff"/><stop offset="0.6996" stop-color="#cc00ff"/><stop offset="0.7985" stop-color="#ff00fc"/><stop offset="0.9267" stop-color="#ff00c1"/><stop offset="1" stop-color="#ff00a8"/></linearGradient>
<linearGradient id="c273" gradientUnits="userSpaceOnUse" x1="1249" x2="1516" y1="0" y2="0"><stop offset="0" stop-color="#002cff"/><stop offset="0.2097" stop-color="#031cff"/><stop offset="0.4869" stop-color="#6702ff"/><stop offset="0.7228" stop-color="#d200ff"/><stop offset="0.8127" stop-color="#ff00fd"/><stop offset="0.9438" stop-color="#ff00c2"/><stop offset="1" stop-color="#ff00af"/></linearGradient>
<linearGradient id="c274" gradientUnits="userSpaceOnUse" x1="1250" x2="1511" y1="0" y2="0"><stop offset="0" stop-color="#002aff"/><stop offset="0.2069" stop-color="#021aff"/><stop offset="0.4943" stop-color="#6700ff"/><stop offset="0.7356" stop-color="#d100ff"/><stop offset="0.8276" stop-color="#ff00fd"/><stop offset="0.9655" stop-color="#ff00c1"/><stop offset="1" stop-color="#ff00b5"/></linearGradient>
<linearGradient id="c275" gradientUnits="userSpaceOnUse" x1="1251" x2="1506" y1="0" y2="0"><stop offset="0" stop-color="#0028ff"/><stop offset="0.2078" stop-color="#0318ff"/><stop offset="0.502" stop-color="#6700ff"/><stop offset="0.749" stop-color="#d100ff"/><stop offset="0.8471" stop-color="#ff00fc"/><stop offset="0.9882" stop-color="#ff00c0"/><stop offset="1" stop-color="#ff00bc"/></linearGradient>
<linearGradient id="c276" gradientUnits="userSpaceOnUse" x1="1252" x2="1501" y1="0" y2="0"><stop offset="0" stop-color="#0026ff"/><stop offset="0.2088" stop-color="#0316ff"/><stop offset="0.506" stop-color="#6600ff"/><stop offset="0.7631" stop-color="#d000ff"/><stop offset="0.8635" stop-color="#ff00fd"/><stop offset="1" stop-color="#ff00c4"/></linearGradient>
<linearGradient id="c277" gradientUnits="userSpaceOnUse" x1="1253" x2="1496" y1="0" y2="0"><stop offset="0" stop-color="#0024ff"/><stop offset="0.2058" stop-color="#0215ff"/><stop offset="0.4979" stop-color="#6000ff"/><stop offset="0.7654" stop-color="#ca00ff"/><stop offset="0.8807" stop-color="#ff00fd"/><stop offset="1" stop-color="#ff00cc"/></linearGradient>
<linearGradient id="c278" gradientUnits="userSpaceOnUse" x1="1254" x2="1491" y1="0" y2="0"><stop offset="0" stop-color="#0022ff"/><stop offset="0.2068" stop-color="#0313ff"/><stop offset="0.4852" stop-color="#5900ff"/><stop offset="0.7637" stop-color="#c300ff"/><stop offset="0.903" stop-color="#ff00fc"/><stop offset="1" stop-color="#ff00d4"/></linearGradient>
<linearGradient id="c279" gradientUnits="userSpaceOnUse" x1="1255" x2="1486" y1="0" y2="0"><stop offset="0" stop-color="#0020ff"/><stop offset="0.2035" stop-color="#0212ff"/><stop offset="0.4719" stop-color="#5200ff"/><stop offset="0.7619" stop-color="#bb00ff"/><stop offset="0.9221" stop-color="#ff00fd"/><stop offset="1" stop-color="#ff00dc"/></linearGradient>
<linearGradient id="c280" gradientUnits="userSpaceOnUse" x1="1256" x2="1481" y1="0" y2="0"><stop offset="0" stop-color="#001eff"/><stop offset="0.2044" stop-color="#0310ff"/><stop offset="0.4622" stop-color="#4c00ff"/><stop offset="0.7644" stop-color="#b600ff"/><stop offset="0.9422" stop-color="#ff00fd"/><stop offset="1" stop-color="#ff00e5"/></linearGradient>
<linearGradient id="c281" gradientUnits="userSpaceOnUse" x1="1257" x2="1476" y1="0" y2="0"><stop offset="0" stop-color="#001cff"/><stop offset="0.2055" stop-color="#030fff"/><stop offset="0.4521" stop-color="#4700ff"/><stop offset="0.7626" stop-color="#af00ff"/><stop offset="0.968" stop-color="#ff00fc"/><stop offset="1" stop-color="#ff00ef"/></linearGradient>
<linearGradient id="c282" gradientUnits="userSpaceOnUse" x1="1258" x2="1470" y1="0" y2="0"><stop offset="0" stop-color="#001aff"/><stop offset="0.2028" stop-color="#030dff"/><stop offset="0.4387" stop-color="#4100ff"/><stop offset="0.7689" stop-color="#aa00ff"/><stop offset="0.9953" stop-color="#ff00fd"/><stop offset="1" stop-color="#ff00fb"/></linearGradient>
<linearGradient id="c283" gradientUnits="userSpaceOnUse" x1="1259" x2="1465" y1="0" y2="0"><stop offset="0" stop-color="#0018ff"/><stop offset="0.2039" stop-color="#030cff"/><stop offset="0.4272" stop-color="#3c00ff"/><stop offset="0.767" stop-color="#a300ff"/><stop offset="1" stop-color="#f900ff"/></linearGradient>
<linearGradient id="c284" gradientUnits="userSpaceOnUse" x1="1260" x2="1460" y1="0" y2="0"><stop offset="0" stop-color="#0016ff"/><stop offset="0.2" stop-color="#020aff"/><stop offset="0.415" stop-color="#3700ff"/><stop offset="0.77" stop-color="#9e00ff"/><stop offset="1" stop-color="#ef00ff"/></linearGradient>
<linearGradient id="c285" gradientUnits="userSpaceOnUse" x1="1261" x2="1455" y1="0" y2="0"><stop offset="0" stop-color="#0014ff"/><stop offset="0.201" stop-color="#0309ff"/><stop offset="0.4021" stop-color="#3200ff"/><stop offset="0.7732" stop-color="#9900ff"/><stop offset="1" stop-color="#e500ff"/></linearGradient>
<linearGradient id="c286" gradientUnits="userSpaceOnUse" x1="1263" x2="1450" y1="0" y2="0"><stop offset="0" stop-color="#0012ff"/><stop offset="0.1925" stop-color="#0207ff"/><stop offset="0.3904" stop-color="#2e00ff"/><stop offset="0.7807" stop-color="#9500ff"/><stop offset="1" stop-color="#db00ff"/></linearGradient>
<linearGradient id="c287" gradientUnits="userSpaceOnUse" x1="1264" x2="1445" y1="0" y2="0"><stop offset="0" stop-color="#0010ff"/><stop offset="0.1934" stop-color="#0306ff"/><stop offset="0.3923" stop-color="#2d00ff"/><stop offset="0.7956" stop-color="#9400ff"/><stop offset="1" stop-color="#d200ff"/></linearGradient>
<linearGradient id="c288" gradientUnits="userSpaceOnUse" x1="1265" x2="1440" y1="0" y2="0"><stop offset="0" stop-color="#000fff"/><stop offset="0.1943" stop-color="#0304ff"/><stop offset="0.48" stop-color="#4000ff"/><stop offset="0.8857" stop-color="#a700ff"/><stop offset="1" stop-color="#c900ff"/></linearGradient>
<linearGradient id="c289" gradientUnits="userSpaceOnUse" x1="1266" x2="1435" y1="0" y2="0"><stop offset="0" stop-color="#000dff"/><stop offset="0.1893" stop-color="#0203ff"/><stop offset="0.6627" stop-color="#6700ff"/><stop offset="1" stop-color="#c000ff"/></linearGradient>
<linearGradient id="c290" gradientUnits="userSpaceOnUse" x1="1267" x2="1430" y1="0" y2="0"><stop offset="0" stop-color="#000bff"/><stop offset="0.1902" stop-color="#0301ff"/><stop offset="0.681" stop-color="#6700ff"/><stop offset="1" stop-color="#b700ff"/></linearGradient>
<linearGradient id="c291" gradientUnits="userSpaceOnUse" x1="1269" x2="1425" y1="0" y2="0"><stop offset="0" stop-color="#0009ff"/><stop offset="0.1859" stop-color="#0300ff"/><stop offset="0.6987" stop-color="#6700ff"/><stop offset="1" stop-color="#ae00ff"/></linearGradient>
<linearGradient id="c292" gradientUnits="userSpaceOnUse" x1="1270" x2="1420" y1="0" y2="0"><stop offset="0" stop-color="#0007ff"/><stop offset="0.18" stop-color="#0300ff"/><stop offset="0.72" stop-color="#6700ff"/><stop offset="1" stop-color="#a600ff"/></linearGradient>
<linearGradient id="c293" gradientUnits="userSpaceOnUse" x1="1271" x2="1415" y1="0" y2="0"><stop offset="0" stop-color="#0005ff"/><stop offset="0.1806" stop-color="#0300ff"/><stop offset="0.7431" stop-color="#6800ff"/><stop offset="1" stop-color="#9e00ff"/></linearGradient>
<linearGradient id="c294" gradientUnits="userSpaceOnUse" x1="1273" x2="1410" y1="0" y2="0"><stop offset="0" stop-color="#0003ff"/><stop offset="0.1679" stop-color="#0300ff"/><stop offset="0.7664" stop-color="#6800ff"/><stop offset="1" stop-color="#9600ff"/></linearGradient>
<linearGradient id="c295" gradientUnits="userSpaceOnUse" x1="1274" x2="1405" y1="0" y2="0"><stop offset="0" stop-color="#0001ff"/><stop offset="0.1679" stop-color="#0300ff"/><stop offset="0.7939" stop-color="#6800ff"/><stop offset="1" stop-color="#8f00ff"/></linearGradient>
<linearGradient id="c296" gradientUnits="userSpaceOnUse" x1="1276" x2="1400" y1="0" y2="0"><stop offset="0" stop-color="#0000ff"/><stop offset="0.1613" stop-color="#0300ff"/><stop offset="0.8226" stop-color="#6800ff"/><stop offset="1" stop-color="#8700ff"/></linearGradient>
<linearGradient id="c297" gradientUnits="userSpaceOnUse" x1="1277" x2="1394" y1="0" y2="0"><stop offset="0" stop-color="#0000ff"/><stop offset="0.1538" stop-color="#0300ff"/><stop offset="0.8632" stop-color="#6800ff"/><stop offset="1" stop-color="#7e00ff"/></linearGradient>
<linearGradient id="c298" gradientUnits="userSpaceOnUse" x1="1279" x2="1389" y1="0" y2="0"><stop offset="0" stop-color="#0000ff"/><stop offset="0.1455" stop-color="#0300ff"/><stop offset="0.9" stop-color="#6800ff"/><stop offset="1" stop-color="#7700ff"/></linearGradient>
<linearGradient id="c299" gradientUnits="userSpaceOnUse" x1="1280" x2="1384" y1="0" y2="0"><stop offset="0" stop-color="#0000ff"/><stop offset="0.1442" stop-color="#0400ff"/><stop offset="0.9423" stop-color="#6800ff"/><stop offset="1" stop-color="#7000ff"/></linearGradient>
<linearGradient id="c300" gradientUnits="userSpaceOnUse" x1="1282" x2="1379" y1="0" y2="0"><stop offset="0" stop-color="#0000ff"/><stop offset="0.134" stop-color="#0400ff"/><stop offset="0.9897" stop-color="#6800ff"/><stop offset="1" stop-color="#6a00ff"/></linearGradient>
<linearGradient id="c301" gradientUnits="userSpaceOnUse" x1="1284" x2="1374" y1="0" y2="0"><stop offset="0" stop-color="#0000ff"/><stop offset="0.1333" stop-color="#0600ff"/><stop offset="1" stop-color="#6300ff"/></linearGradient>
<linearGradient id="c302" gradientUnits="userSpaceOnUse" x1="1286" x2="1369" y1="0" y2="0"><stop offset="0" stop-color="#0000ff"/><stop offset="0.1687" stop-color="#0a00ff"/><stop offset="1" stop-color="#5d00ff"/></linearGradient>
<linearGradient id="c303" gradientUnits="userSpaceOnUse" x1="1288" x2="1364" y1="0" y2="0"><stop offset="0" stop-color="#0000ff"/><stop offset="0.9211" stop-color="#4f00ff"/><stop offset="1" stop-color="#5600ff"/></linearGradient>
<linearGradient id="c304" gradientUnits="userSpaceOnUse" x1="1291" x2="1359" y1="0" y2="0"><stop offset="0" stop-color="#0200ff"/><stop offset="1" stop-color="#5000ff"/></linearGradient>
<linearGradient id="c305" gradientUnits="userSpaceOnUse" x1="1293" x2="1354" y1="0" y2="0"><stop offset="0" stop-color="#0400ff"/><stop offset="1" stop-color="#4a00ff"/></linearGradient>
<linearGradient id="c306" gradientUnits="userSpaceOnUse" x1="1295" x2="1349" y1="0" y2="0"><stop offset="0" stop-color="#0700ff"/><stop offset="1" stop-color="#4400ff"/></linearGradient>
<linearGradient id="c307" gradientUnits="userSpaceOnUse" x1="1298" x2="1344" y1="0" y2="0"><stop offset="0" stop-color="#0a00ff"/><stop offset="1" stop-color="#3e00ff"/></linearGradient>
<linearGradient id="c308" gradientUnits="userSpaceOnUse" x1="1301" x2="1339" y1="0" y2="0"><stop offset="0" stop-color="#0e00ff"/><stop offset="1" stop-color="#3900ff"/></linearGradient>
<linearGradient id="c309" gradientUnits="userSpaceOnUse" x1="1304" x2="1334" y1="0" y2="0"><stop offset="0" stop-color="#1200ff"/><stop offset="1" stop-color="#3300ff"/></linearGradient>
<linearGradient id="c310" gradientUnits="userSpaceOnUse" x1="1306" x2="1329" y1="0" y2="0"><stop offset="0" stop-color="#1400ff"/><stop offset="1" stop-color="#2d00ff"/></linearGradient>
<linearGradient id="c311" gradientUnits="userSpaceOnUse" x1="1309" x2="1324" y1="0" y2="0"><stop offset="0" stop-color="#1800ff"/><stop offset="1" stop-color="#2800ff"/></linearGradient>
<linearGradient id="c312" gradientUnits="userSpaceOnUse" x1="1312" x2="1318" y1="0" y2="0"><stop offset="0" stop-color="#1b00ff"/><stop offset="1" stop-color="#2200ff"/></linearGradient>
<linearGradient id="i0" gradientUnits="userSpaceOnUse" x1="1649" x2="1899" y1="0" y2="0"><stop offset="0" stop-color="#afff00"/><stop offset="0.82" stop-color="#fffd00"/><stop offset="1" stop-color="#ffeb00"/></linearGradient>
<linearGradient id="i1" gradientUnits="userSpaceOnUse" x1="1649" x2="1899" y1="0" y2="0"><stop offset="0" stop-color="#b0ff00"/><stop offset="0.812" stop-color="#fffd00"/><stop offset="1" stop-color="#ffea00"/></linearGradient>
<linearGradient id="i2" gradientUnits="userSpaceOnUse" x1="1649" x2="1899" y1="0" y2="0"><stop offset="0" stop-color="#b1ff00"/><stop offset="0.804" stop-color="#fffd00"/><stop offset="1" stop-color="#ffe900"/></linearGradient>
<linearGradient id="i3" gradientUnits="userSpaceOnUse" x1="1649" x2="1899" y1="0" y2="0"><stop offset="0" stop-color="#b1ff00"/><stop offset="0.796" stop-color="#fffd00"/><stop offset="1" stop-color="#ffe800"/></linearGradient>
<linearGradient id="i4" gradientUnits="userSpaceOnUse" x1="1649" x2="1899" y1="0" y2="0"><stop offset="0" stop-color="#b2ff00"/><stop offset="0.788" stop-color="#fffd00"/><stop offset="1" stop-color="#ffe800"/></linearGradient>
<linearGradient id="i5" gradientUnits="userSpaceOnUse" x1="1649" x2="1899" y1="0" y2="0"><stop offset="0" stop-color="#b2ff00"/><stop offset="0.784" stop-color="#fffc00"/><stop offset="1" stop-color="#ffe700"/></linearGradient>
<linearGradient id="i6" gradientUnits="userSpaceOnUse" x1="1649" x2="1899" y1="0" y2="0"><stop offset="0" stop-color="#b3ff01"/><stop offset="0.776" stop-color="#fffc00"/><stop offset="1" stop-color="#ffe600"/></linearGradient>
<linearGradient id="i7" gradientUnits="userSpaceOnUse" x1="1649" x2="1899" y1="0" y2="0"><stop offset="0" stop-color="#b4ff01"/><stop offset="0.768" stop-color="#fffc00"/><stop offset="1" stop-color="#ffe500"/></linearGradient>
<linearGradient id="i8" gradientUnits="userSpaceOnUse" x1="1649" x2="1899" y1="0" y2="0"><stop offset="0" stop-color="#b4ff02"/><stop offset="0.76" stop-color="#fffd00"/><stop offset="1" stop-color="#ffe500"/></linearGradient>
<linearGradient id="i9" gradientUnits="userSpaceOnUse" x1="1649" x2="1899" y1="0" y2="0"><stop offset="0" stop-color="#b5ff02"/><stop offset="0.752" stop-color="#fffd00"/><stop offset="1" stop-color="#ffe400"/></linearGradient>
<linearGradient id="i10" gradientUnits="userSpaceOnUse" x1="1649" x2="1899" y1="0" y2="0"><stop offset="0" stop-color="#b5ff02"/><stop offset="0.744" stop-color="#fffd00"/><stop offset="1" stop-color="#ffe300"/></linearGradient>
<linearGradient id="i11" gradientUnits="userSpaceOnUse" x1="1649" x2="1899" y1="0" y2="0"><stop offset="0" stop-color="#b6ff03"/><stop offset="0.736" stop-color="#fffd00"/><stop offset="1" stop-color="#ffe200"/></linearGradient>
<linearGradient id="i12" gradientUnits="userSpaceOnUse" x1="1649" x2="1899" y1="0" y2="0"><stop offset="0" stop-color="#b7ff03"/><stop offset="0.728" stop-color="#fffd00"/><stop offset="1" stop-color="#ffe200"/></linearGradient>
<linearGradient id="i13" gradientUnits="userSpaceOnUse" x1="1649" x2="1899" y1="0" y2="0"><stop offset="0" stop-color="#b7ff03"/><stop offset="0.528" stop-color="#edff00"/><stop offset="0.724" stop-color="#fffc00"/><stop offset="1" stop-color="#ffe100"/></linearGradient>
<linearGradient id="i14" gradientUnits="userSpaceOnUse" x1="1649" x2="1899" y1="0" y2="0"><stop offset="0" stop-color="#b8ff04"/><stop offset="0.456" stop-color="#e6ff00"/><stop offset="0.716" stop-color="#fffc00"/><stop offset="1" stop-color="#ffe000"/></linearGradient>
<linearGradient id="i15" gradientUnits="userSpaceOnUse" x1="1649" x2="1899" y1="0" y2="0"><stop offset="0" stop-color="#b9ff04"/><stop offset="0.416" stop-color="#e2ff00"/><stop offset="0.708" stop-color="#fffc00"/><stop offset="1" stop-color="#ffdf00"/></linearGradient>
<linearGradient id="i16" gradientUnits="userSpaceOnUse" x1="1649" x2="1899" y1="0" y2="0"><stop offset="0" stop-color="#b9ff04"/><stop offset="0.4" stop-color="#e1ff00"/><stop offset="0.7" stop-color="#fffc00"/><stop offset="1" stop-color="#ffdf00"/></linearGradient>
<linearGradient id="i17" gradientUnits="userSpaceOnUse" x1="1649" x2="1899" y1="0" y2="0"><stop offset="0" stop-color="#baff05"/><stop offset="0.392" stop-color="#e1ff00"/><stop offset="0.692" stop-color="#fffc00"/><stop offset="1" stop-color="#ffde00"/></linearGradient>
<linearGradient id="i18" gradientUnits="userSpaceOnUse" x1="1649" x2="1899" y1="0" y2="0"><stop offset="0" stop-color="#baff05"/><stop offset="0.392" stop-color="#e2ff00"/><stop offset="0.684" stop-color="#fffc00"/><stop offset="1" stop-color="#ffdd00"/></linearGradient>
<linearGradient id="i19" gradientUnits="userSpaceOnUse" x1="1649" x2="1899" y1="0" y2="0"><stop offset="0" stop-color="#bbff06"/><stop offset="0.396" stop-color="#e3ff00"/><stop offset="0.676" stop-color="#fffc00"/><stop offset="1" stop-color="#ffdc00"/></linearGradient>
<linearGradient id="i20" gradientUnits="userSpaceOnUse" x1="1649" x2="1899" y1="0" y2="0"><stop offset="0" stop-color="#bcff06"/><stop offset="0.4" stop-color="#e4ff00"/><stop offset="0.668" stop-color="#fffc00"/><stop offset="1" stop-color="#ffdc00"/></linearGradient>
<linearGradient id="i21" gradientUnits="userSpaceOnUse" x1="1649" x2="1899" y1="0" y2="0"><stop offset="0" stop-color="#bcff06"/><stop offset="0.408" stop-color="#e6ff00"/><stop offset="0.66" stop-color="#fffc00"/><stop offset="1" stop-color="#ffdb00"/></linearGradient>
<linearGradient id="i22" gradientUnits="userSpaceOnUse" x1="1649" x2="1899" y1="0" y2="0"><stop offset="0" stop-color="#bdff07"/><stop offset="0.412" stop-color="#e7ff00"/><stop offset="0.652" stop-color="#fffc00"/><stop offset="1" stop-color="#ffda00"/></linearGradient>
<linearGradient id="i23" gradientUnits="userSpaceOnUse" x1="1649" x2="1899" y1="0" y2="0"><stop offset="0" stop-color="#beff07"/><stop offset="0.424" stop-color="#e9ff00"/><stop offset="0.644" stop-color="#fffc00"/><stop offset="1" stop-color="#ffda00"/></linearGradient>
<linearGradient id="i24" gradientUnits="userSpaceOnUse" x1="1649" x2="1899" y1="0" y2="0"><stop offset="0" stop-color="#beff07"/><stop offset="0.432" stop-color="#ebff00"/><stop offset="0.636" stop-color="#fffd00"/><stop offset="1" stop-color="#ffd900"/></linearGradient>
<linearGradient id="i25" gradientUnits="userSpaceOnUse" x1="1649" x2="1899" y1="0" y2="0"><stop offset="0" stop-color="#bfff08"/><stop offset="0.444" stop-color="#edff00"/><stop offset="0.632" stop-color="#fffc00"/><stop offset="1" stop-color="#ffd800"/></linearGradient>
<linearGradient id="i26" gradientUnits="userSpaceOnUse" x1="1649" x2="1899" y1="0" y2="0"><stop offset="0" stop-color="#c0ff08"/><stop offset="0.456" stop-color="#efff00"/><stop offset="0.624" stop-color="#fffc00"/><stop offset="1" stop-color="#ffd700"/></linearGradient>
<linearGradient id="i27" gradientUnits="userSpaceOnUse" x1="1649" x2="1899" y1="0" y2="0"><stop offset="0" stop-color="#c0ff09"/><stop offset="0.464" stop-color="#f1ff00"/><stop offset="0.616" stop-color="#fffc00"/><stop offset="1" stop-color="#ffd700"/></linearGradient>
<linearGradient id="i28" gradientUnits="userSpaceOnUse" x1="1649" x2="1899" y1="0" y2="0"><stop offset="0" stop-color="#c1ff09"/><stop offset="0.476" stop-color="#f3ff00"/><stop offset="0.612" stop-color="#fffc00"/><stop offset="1" stop-color="#ffd600"/></linearGradient>
<linearGradient id="i29" gradientUnits="userSpaceOnUse" x1="1649" x2="1899" y1="0" y2="0"><stop offset="0" stop-color="#c2ff09"/><stop offset="0.488" stop-color="#f5ff00"/><stop offset="0.604" stop-color="#fffc00"/><stop offset="1" stop-color="#ffd500"/></linearGradient>
<linearGradient id="i30" gradientUnits="userSpaceOnUse" x1="1649" x2="1899" y1="0" y2="0"><stop offset="0" stop-color="#c2ff0a"/><stop offset="0.5" stop-color="#f7ff00"/><stop offset="0.6" stop-color="#fffb00"/><stop offset="1" stop-color="#ffd400"/></linearGradient>
<linearGradient id="i31" gradientUnits="userSpaceOnUse" x1="1649" x2="1899" y1="0" y2="0"><stop offset="0" stop-color="#c3ff0a"/><stop offset="0.512" stop-color="#faff00"/><stop offset="0.6" stop-color="#fffb00"/><stop offset="1" stop-color="#ffd400"/></linearGradient>
<linearGradient id="i32" gradientUnits="userSpaceOnUse" x1="1649" x2="1899" y1="0" y2="0"><stop offset="0" stop-color="#c4ff0b"/><stop offset="0.524" stop-color="#fcff00"/><stop offset="0.656" stop-color="#fff400"/><stop offset="1" stop-color="#ffd300"/></linearGradient>
<linearGradient id="i33" gradientUnits="userSpaceOnUse" x1="1649" x2="1899" y1="0" y2="0"><stop offset="0" stop-color="#c4ff0b"/><stop offset="0.54" stop-color="#feff00"/><stop offset="1" stop-color="#ffd200"/></linearGradient>
<linearGradient id="i34" gradientUnits="userSpaceOnUse" x1="1649" x2="1899" y1="0" y2="0"><stop offset="0" stop-color="#c5ff0b"/><stop offset="0.552" stop-color="#fffd00"/><stop offset="1" stop-color="#ffd100"/></linearGradient>
<linearGradient id="i35" gradientUnits="userSpaceOnUse" x1="1649" x2="1899" y1="0" y2="0"><stop offset="0" stop-color="#c6ff0c"/><stop offset="0.552" stop-color="#fffc00"/><stop offset="1" stop-color="#ffd100"/></linearGradient>
<linearGradient id="i36" gradientUnits="userSpaceOnUse" x1="1649" x2="1899" y1="0" y2="0"><stop offset="0" stop-color="#c6ff0c"/><stop offset="0.544" stop-color="#fffc00"/><stop offset="1" stop-color="#ffd000"/></linearGradient>
<linearGradient id="i37" gradientUnits="userSpaceOnUse" x1="1649" x2="1899" y1="0" y2="0"><stop offset="0" stop-color="#c7ff0d"/><stop offset="0.536" stop-color="#fffc00"/><stop offset="1" stop-color="#ffcf00"/></linearGradient>
<linearGradient id="i38" gradientUnits="userSpaceOnUse" x1="1649" x2="1899" y1="0" y2="0"><stop offset="0" stop-color="#c8ff0d"/><stop offset="0.528" stop-color="#fffc00"/><stop offset="1" stop-color="#ffcf00"/></linearGradient>
<linearGradient id="i39" gradientUnits="userSpaceOnUse" x1="1649" x2="1899" y1="0" y2="0"><stop offset="0" stop-color="#c8ff0e"/><stop offset="0.52" stop-color="#fffd00"/><stop offset="1" stop-color="#ffce00"/></linearGradient>
<linearGradient id="i40" gradientUnits="userSpaceOnUse" x1="1649" x2="1899" y1="0" y2="0"><stop offset="0" stop-color="#c9ff0e"/><stop offset="0.512" stop-color="#fffd00"/><stop offset="1" stop-color="#ffcd00"/></linearGradient>
<linearGradient id="i41" gradientUnits="userSpaceOnUse" x1="1649" x2="1899" y1="0" y2="0"><stop offset="0" stop-color="#caff0e"/><stop offset="0.504" stop-color="#fffd01"/><stop offset="1" stop-color="#ffcc00"/></linearGradient>
<linearGradient id="i42" gradientUnits="userSpaceOnUse" x1="1649" x2="1899" y1="0" y2="0"><stop offset="0" stop-color="#cbff0f"/><stop offset="0.496" stop-color="#fffd01"/><stop offset="1" stop-color="#ffcc00"/></linearGradient>
<linearGradient id="i43" gradientUnits="userSpaceOnUse" x1="1649" x2="1899" y1="0" y2="0"><stop offset="0" stop-color="#cbff0f"/><stop offset="0.488" stop-color="#fffd02"/><stop offset="1" stop-color="#ffcb00"/></linearGradient>
<linearGradient id="i44" gradientUnits="userSpaceOnUse" x1="1649" x2="1899" y1="0" y2="0"><stop offset="0" stop-color="#ccff10"/><stop offset="0.48" stop-color="#fffd03"/><stop offset="1" stop-color="#ffca00"/></linearGradient>
<linearGradient id="i45" gradientUnits="userSpaceOnUse" x1="1649" x2="1899" y1="0" y2="0"><stop offset="0" stop-color="#cdff10"/><stop offset="0.472" stop-color="#fffd03"/><stop offset="0.956" stop-color="#ffcd00"/><stop offset="1" stop-color="#ffca00"/></linearGradient>
<linearGradient id="i46" gradientUnits="userSpaceOnUse" x1="1649" x2="1899" y1="0" y2="0"><stop offset="0" stop-color="#ceff11"/><stop offset="0.464" stop-color="#fffd04"/><stop offset="0.84" stop-color="#ffd700"/><stop offset="1" stop-color="#ffc900"/></linearGradient>
<linearGradient id="i47" gradientUnits="userSpaceOnUse" x1="1649" x2="1899" y1="0" y2="0"><stop offset="0" stop-color="#ceff11"/><stop offset="0.456" stop-color="#fffd05"/><stop offset="0.812" stop-color="#ffd800"/><stop offset="1" stop-color="#ffc800"/></linearGradient>
<linearGradient id="i48" gradientUnits="userSpaceOnUse" x1="1649" x2="1899" y1="0" y2="0"><stop offset="0" stop-color="#cfff11"/><stop offset="0.448" stop-color="#fffd05"/><stop offset="0.796" stop-color="#ffd900"/><stop offset="1" stop-color="#ffc700"/></linearGradient>
<linearGradient id="i49" gradientUnits="userSpaceOnUse" x1="1649" x2="1899" y1="0" y2="0"><stop offset="0" stop-color="#d0ff12"/><stop offset="0.44" stop-color="#fffd06"/><stop offset="0.8" stop-color="#ffd800"/><stop offset="1" stop-color="#ffc700"/></linearGradient>
<linearGradient id="i50" gradientUnits="userSpaceOnUse" x1="1649" x2="1899" y1="0" y2="0"><stop offset="0" stop-color="#d0ff12"/><stop offset="0.436" stop-color="#fffc06"/><stop offset="0.8" stop-color="#ffd700"/><stop offset="1" stop-color="#ffc600"/></linearGradient>
<linearGradient id="i51" gradientUnits="userSpaceOnUse" x1="1649" x2="1899" y1="0" y2="0"><stop offset="0" stop-color="#d1ff13"/><stop offset="0.428" stop-color="#fffc07"/><stop offset="0.808" stop-color="#ffd600"/><stop offset="1" stop-color="#ffc500"/></linearGradient>
<linearGradient id="i52" gradientUnits="userSpaceOnUse" x1="1649" x2="1899" y1="0" y2="0"><stop offset="0" stop-color="#d2ff13"/><stop offset="0.42" stop-color="#fffc08"/><stop offset="0.816" stop-color="#ffd400"/><stop offset="1" stop-color="#ffc500"/></linearGradient>
<linearGradient id="i53" gradientUnits="userSpaceOnUse" x1="1649" x2="1899" y1="0" y2="0"><stop offset="0" stop-color="#d3ff14"/><stop offset="0.412" stop-color="#fffc08"/><stop offset="0.824" stop-color="#ffd300"/><stop offset="1" stop-color="#ffc400"/></linearGradient>
<linearGradient id="i54" gradientUnits="userSpaceOnUse" x1="1649" x2="1899" y1="0" y2="0"><stop offset="0" stop-color="#d3ff14"/><stop offset="0.404" stop-color="#fffc09"/><stop offset="0.836" stop-color="#ffd100"/><stop offset="1" stop-color="#ffc300"/></linearGradient>
<linearGradient id="i55" gradientUnits="userSpaceOnUse" x1="1649" x2="1899" y1="0" y2="0"><stop offset="0" stop-color="#d4ff15"/><stop offset="0.396" stop-color="#fffd0a"/><stop offset="0.848" stop-color="#ffcf00"/><stop offset="1" stop-color="#ffc200"/></linearGradient>
<linearGradient id="i56" gradientUnits="userSpaceOnUse" x1="1649" x2="1899" y1="0" y2="0"><stop offset="0" stop-color="#d5ff15"/><stop offset="0.388" stop-color="#fffd0a"/><stop offset="0.86" stop-color="#ffcd00"/><stop offset="1" stop-color="#ffc200"/></linearGradient>
<linearGradient id="i57" gradientUnits="userSpaceOnUse" x1="1649" x2="1899" y1="0" y2="0"><stop offset="0" stop-color="#d6ff15"/><stop offset="0.38" stop-color="#fffd0b"/><stop offset="0.868" stop-color="#ffcc00"/><stop offset="1" stop-color="#ffc100"/></linearGradient>
<linearGradient id="i58" gradientUnits="userSpaceOnUse" x1="1649" x2="1899" y1="0" y2="0"><stop offset="0" stop-color="#d7ff16"/><stop offset="0.372" stop-color="#fffd0c"/><stop offset="0.884" stop-color="#ffca00"/><stop offset="1" stop-color="#ffc000"/></linearGradient>
<linearGradient id="i59" gradientUnits="userSpaceOnUse" x1="1649" x2="1899" y1="0" y2="0"><stop offset="0" stop-color="#d7ff16"/><stop offset="0.364" stop-color="#fffd0c"/><stop offset="0.896" stop-color="#ffc800"/><stop offset="1" stop-color="#ffc000"/></linearGradient>
<linearGradient id="i60" gradientUnits="userSpaceOnUse" x1="1649" x2="1899" y1="0" y2="0"><stop offset="0" stop-color="#d8ff17"/><stop offset="0.356" stop-color="#fffd0d"/><stop offset="0.908" stop-color="#ffc600"/><stop offset="1" stop-color="#ffbf00"/></linearGradient>
<linearGradient id="i61" gradientUnits="userSpaceOnUse" x1="1649" x2="1899" y1="0" y2="0"><stop offset="0" stop-color="#d9ff17"/><stop offset="0.348" stop-color="#fffd0e"/><stop offset="0.9" stop-color="#ffc600"/><stop offset="1" stop-color="#ffbe00"/></linearGradient>
<linearGradient id="i62" gradientUnits="userSpaceOnUse" x1="1649" x2="1899" y1="0" y2="0"><stop offset="0" stop-color="#daff18"/><stop offset="0.34" stop-color="#fffd0e"/><stop offset="0.892" stop-color="#ffc600"/><stop offset="1" stop-color="#ffbe00"/></linearGradient>
<linearGradient id="i63" gradientUnits="userSpaceOnUse" x1="1649" x2="1899" y1="0" y2="0"><stop offset="0" stop-color="#daff18"/><stop offset="0.332" stop-color="#fffd0f"/><stop offset="0.884" stop-color="#ffc600"/><stop offset="1" stop-color="#ffbd00"/></linearGradient>
<linearGradient id="i64" gradientUnits="userSpaceOnUse" x1="1649" x2="1899" y1="0" y2="0"><stop offset="0" stop-color="#dbff19"/><stop offset="0.328" stop-color="#fffc10"/><stop offset="0.88" stop-color="#ffc600"/><stop offset="1" stop-color="#ffbc00"/></linearGradient>
<linearGradient id="i65" gradientUnits="userSpaceOnUse" x1="1649" x2="1899" y1="0" y2="0"><stop offset="0" stop-color="#dcff19"/><stop offset="0.32" stop-color="#fffc10"/><stop offset="0.872" stop-color="#ffc600"/><stop offset="1" stop-color="#ffbb00"/></linearGradient>
<linearGradient id="i66" gradientUnits="userSpaceOnUse" x1="1649" x2="1899" y1="0" y2="0"><stop offset="0" stop-color="#ddff1a"/><stop offset="0.312" stop-color="#fffc11"/><stop offset="0.86" stop-color="#ffc601"/><stop offset="1" stop-color="#ffbb00"/></linearGradient>
<linearGradient id="i67" gradientUnits="userSpaceOnUse" x1="1649" x2="1899" y1="0" y2="0"><stop offset="0" stop-color="#deff1a"/><stop offset="0.304" stop-color="#fffc12"/><stop offset="0.852" stop-color="#ffc601"/><stop offset="1" stop-color="#ffba00"/></linearGradient>
<linearGradient id="i68" gradientUnits="userSpaceOnUse" x1="1649" x2="1899" y1="0" y2="0"><stop offset="0" stop-color="#dfff1b"/><stop offset="0.296" stop-color="#fffc12"/><stop offset="0.844" stop-color="#ffc602"/><stop offset="1" stop-color="#ffb900"/></linearGradient>
<linearGradient id="i69" gradientUnits="userSpaceOnUse" x1="1649" x2="1899" y1="0" y2="0"><stop offset="0" stop-color="#dfff1b"/><stop offset="0.288" stop-color="#fffc13"/><stop offset="0.832" stop-color="#ffc602"/><stop offset="1" stop-color="#ffb900"/></linearGradient>
<linearGradient id="i70" gradientUnits="userSpaceOnUse" x1="1649" x2="1899" y1="0" y2="0"><stop offset="0" stop-color="#e0ff1c"/><stop offset="0.28" stop-color="#fffd14"/><stop offset="0.824" stop-color="#ffc603"/><stop offset="1" stop-color="#ffb800"/></linearGradient>
<linearGradient id="i71" gradientUnits="userSpaceOnUse" x1="1649" x2="1899" y1="0" y2="0"><stop offset="0" stop-color="#e1ff1c"/><stop offset="0.272" stop-color="#fffd15"/><stop offset="0.816" stop-color="#ffc604"/><stop offset="1" stop-color="#ffb700"/></linearGradient>
<linearGradient id="i72" gradientUnits="userSpaceOnUse" x1="1649" x2="1899" y1="0" y2="0"><stop offset="0" stop-color="#e2ff1d"/><stop offset="0.264" stop-color="#fffd15"/><stop offset="0.804" stop-color="#ffc604"/><stop offset="1" stop-color="#ffb700"/></linearGradient>
<linearGradient id="i73" gradientUnits="userSpaceOnUse" x1="1649" x2="1899" y1="0" y2="0"><stop offset="0" stop-color="#e3ff1d"/><stop offset="0.256" stop-color="#fffd16"/><stop offset="0.796" stop-color="#ffc605"/><stop offset="1" stop-color="#ffb600"/></linearGradient>
<linearGradient id="i74" gradientUnits="userSpaceOnUse" x1="1649" x2="1899" y1="0" y2="0"><stop offset="0" stop-color="#e4ff1e"/><stop offset="0.248" stop-color="#fffd17"/><stop offset="0.788" stop-color="#ffc605"/><stop offset="1" stop-color="#ffb500"/></linearGradient>
<linearGradient id="i75" gradientUnits="userSpaceOnUse" x1="1649" x2="1899" y1="0" y2="0"><stop offset="0" stop-color="#e4ff1e"/><stop offset="0.24" stop-color="#fffd17"/><stop offset="0.78" stop-color="#ffc606"/><stop offset="1" stop-color="#ffb500"/></linearGradient>
<linearGradient id="i76" gradientUnits="userSpaceOnUse" x1="1649" x2="1899" y1="0" y2="0"><stop offset="0" stop-color="#e5ff1f"/><stop offset="0.232" stop-color="#fffd18"/><stop offset="0.768" stop-color="#ffc607"/><stop offset="1" stop-color="#ffb401"/></linearGradient>
<linearGradient id="i77" gradientUnits="userSpaceOnUse" x1="1649" x2="1899" y1="0" y2="0"><stop offset="0" stop-color="#e6ff1f"/><stop offset="0.228" stop-color="#fffc19"/><stop offset="0.764" stop-color="#ffc607"/><stop offset="1" stop-color="#ffb301"/></linearGradient>
<linearGradient id="i78" gradientUnits="userSpaceOnUse" x1="1649" x2="1899" y1="0" y2="0"><stop offset="0" stop-color="#e7ff20"/><stop offset="0.22" stop-color="#fffc19"/><stop offset="0.756" stop-color="#ffc608"/><stop offset="1" stop-color="#ffb301"/></linearGradient>
<clipPath id="insclip"><rect x="1649.0" y="148.0" width="250.0" height="235.60000000000002"/></clipPath>
<clipPath id="insloc"><path d="M832.1 2052.7 L832.1 2052.6 L832.0 2052.5 L831.9 2052.6 L831.8 2052.6 L831.7 2052.7 L831.6 2052.7 L831.4 2052.8 L831.3 2052.9 L831.1 2053.0 L831.0 2053.0 L830.9 2053.0 L830.7 2053.0 L830.6 2053.0 L830.5 2053.0 L830.3 2053.0 L830.1 2053.0 L829.9 2053.1 L829.7 2053.2 L829.4 2053.3 L829.2 2053.3 L829.0 2053.4 L828.8 2053.4 L828.6 2053.4 L828.4 2053.4 L828.1 2053.3 L827.9 2053.3 L827.6 2053.3 L827.3 2053.3 L827.0 2053.3 L826.7 2053.3 L826.4 2053.4 L826.0 2053.4 L825.7 2053.4 L825.3 2053.4 L824.9 2053.3 L824.5 2053.2 L824.1 2053.1 L823.6 2052.9 L823.0 2052.6 L822.4 2052.3 L821.7 2052.0 L821.0 2051.5 L820.2 2051.1 L819.4 2050.5 L818.5 2050.0 L817.6 2049.4 L816.7 2048.7 L815.7 2048.0 L814.6 2047.1 L813.5 2046.3 L812.2 2045.3 L810.9 2044.2 L809.5 2043.1 L807.9 2041.9 L806.4 2040.5 L804.7 2039.1 L803.0 2037.7 L801.2 2036.1 L799.4 2034.5 L797.4 2032.8 L795.4 2031.1 L793.2 2029.2 L790.8 2027.3 L788.3 2025.2 L785.6 2023.0 L782.8 2020.7 L779.7 2018.2 L776.5 2015.6 L773.1 2012.8 L769.6 2009.9 L765.9 2006.9 L762.1 2003.8 L758.1 2000.5 L754.0 1996.9 L749.6 1993.1 L745.0 1989.0 L740.1 1984.6 L735.1 1979.8 L729.9 1974.8 L724.6 1969.5 L719.1 1963.9 L713.3 1957.8 L707.3 1951.2 L701.0 1943.7 L694.2 1935.2 L687.0 1925.6 L679.3 1914.8 L671.1 1902.8 L662.5 1889.6 L653.5 1875.0 L644.0 1858.9 L634.2 1841.4 L623.8 1822.0 L613.0 1800.8 L601.7 1777.3 L589.9 1751.6 L577.5 1723.4 L564.5 1692.6 L550.8 1659.2 L536.4 1622.9 L521.1 1583.6 L505.3 1541.2 L489.0 1495.6 L472.4 1446.6 L455.6 1394.0 L438.9 1337.8 L422.2 1277.9 L405.6 1214.4 L389.0 1147.3 L372.4 1076.6 L355.9 1002.5 L339.7 925.3 L323.8 845.6 L308.6 763.8 L294.2 680.5 L280.8 596.0 L268.5 510.9 L257.5 425.8 L247.8 341.1 L239.6 257.4 L232.9 175.1 L228.0 94.5 L224.8 15.9 L223.5 -60.5 L224.2 -134.4 L227.0 -205.6 L231.9 -273.6 L239.0 -338.2 L248.3 -399.0 L259.9 -455.5 L273.8 -507.3 L289.8 -554.3 L307.8 -596.2 L327.7 -632.6 L349.2 -663.5 L372.2 -688.5 L396.6 -708.0 L422.1 -722.3 L448.5 -731.8 L475.6 -736.8 L503.4 -737.8 L531.6 -735.2 L560.2 -729.6 L589.1 -721.4 L618.1 -711.3 L647.3 -699.6 L676.5 -686.7 L705.5 -672.8 L734.3 -658.2 L762.8 -642.9 L790.8 -627.3 L818.4 -611.4 L845.6 -595.0 L872.5 -578.3 L899.2 -561.2 L925.7 -543.6 L952.0 -525.6 L978.2 -507.2 L1004.3 -488.4 L1030.3 -469.3 L1056.2 -449.7 L1082.2 -429.8 L1108.0 -409.6 L1133.8 -389.1 L1159.6 -368.3 L1185.2 -347.2 L1210.8 -325.9 L1236.4 -304.3 L1261.9 -282.6 L1287.4 -260.6 L1312.9 -238.4 L1338.4 -216.1 L1363.9 -193.6 L1389.4 -171.0 L1414.9 -148.2 L1440.5 -125.2 L1466.1 -102.2 L1491.7 -79.0 L1517.2 -55.7 L1542.8 -32.4 L1568.3 -9.0 L1593.7 14.5 L1619.1 38.0 L1644.5 61.5 L1669.9 85.1 L1695.3 108.6 L1720.7 132.1 L1746.0 155.6 L1771.2 179.1 L1796.4 202.5 L1821.4 225.9 L1846.3 249.2 L1871.1 272.5 L1895.8 295.6 L1920.3 318.6 L1944.7 341.6 L1968.9 364.3 L1993.0 387.0 L2016.9 409.4 L2040.6 431.7 L2064.2 453.9 L2087.5 475.8 L2110.6 497.5 L2133.4 518.9 L2156.0 540.1 L2178.3 561.0 L2200.4 581.6 L2222.1 602.0 L2243.5 622.0 L2264.6 641.8 L2285.3 661.2 L2305.6 680.3 L2325.4 699.1 L2344.7 717.3 L2363.5 735.0 L2381.7 752.1 L2399.3 768.7 L2416.5 784.8 L2433.2 800.4 L2449.6 815.8 L2465.6 830.8 L2481.2 845.4 L2496.4 859.7 L2511.1 873.5 L2525.3 886.8 L2538.9 899.5 L2552.0 911.7 L2564.5 923.3 L2576.6 934.5 L2588.1 945.3 L2599.2 955.7 L2609.9 965.8 L2620.1 975.4 L2629.9 984.6 L2639.2 993.5 L2648.1 1001.9 L2656.6 1009.9 L2664.7 1017.6 L2672.5 1024.9 L2679.9 1031.8 L2687.0 1038.5 L2693.8 1044.8 L2700.3 1050.8 L2706.5 1056.6 L2712.4 1062.1 L2718.1 1067.4 L2723.5 1072.5 L2728.7 1077.4 L2733.7 1082.1 L2738.5 1086.7 L2743.2 1091.1 L2747.7 1095.4 L2752.0 1099.5 L2756.2 1103.4 L2760.3 1107.2 L2764.2 1110.9 L2767.9 1114.4 L2771.4 1117.8 L2774.9 1121.0 L2778.1 1124.1 L2781.3 1127.0 L2784.3 1129.7 L2787.2 1132.3 L2789.9 1134.8 L2792.4 1137.2 L2794.8 1139.4 L2797.1 1141.5 L2799.2 1143.6 L2801.2 1145.5 L2803.1 1147.3 L2805.0 1149.0 L2806.7 1150.6 L2808.3 1152.2 L2809.9 1153.6 L2811.4 1155.0 L2812.8 1156.3 L2814.1 1157.6 L2815.3 1158.7 L2816.4 1159.8 L2817.4 1160.7 L2818.3 1161.6 L2819.2 1162.4 L2819.9 1163.1 L2820.7 1163.8 L2821.4 1164.4 L2822.0 1165.1 L2822.7 1165.7 L2823.4 1166.3 L2824.0 1166.9 L2824.6 1167.5 L2825.1 1168.0 L2825.6 1168.5 L2826.1 1168.9 L2826.6 1169.4 L2827.1 1169.8 L2827.6 1170.3 L2828.1 1170.8 L2828.6 1171.3 L2829.1 1171.7 L2829.6 1172.2 L2830.0 1172.6 L2830.5 1173.1 L2830.9 1173.5 L2831.3 1173.9 L2831.7 1174.2 L2832.1 1174.5 L2832.4 1174.8 L2832.7 1175.1 L2832.9 1175.3 L2833.1 1175.6 L2833.3 1175.7 L2833.5 1175.9 L2833.6 1176.0 L2833.8 1176.1 L2833.9 1176.2 L2833.9 1176.3 L2834.0 1176.4 L2834.1 1176.4 L2834.1 1176.5 L2834.2 1176.6 Z"/></clipPath>
<linearGradient id="rbR" x1="0" y1="0" x2="0" y2="1"><stop offset="0" stop-color="#ff3c3c"/><stop offset="0.2" stop-color="#ff0000"/><stop offset="0.55" stop-color="#f00000"/><stop offset="1" stop-color="#6a0000"/></linearGradient>
<linearGradient id="rbG" x1="0" y1="0" x2="0" y2="1"><stop offset="0" stop-color="#00c000"/><stop offset="1" stop-color="#006000"/></linearGradient>
<linearGradient id="rbB" x1="0" y1="0" x2="0" y2="1"><stop offset="0" stop-color="#5a5aff"/><stop offset="0.18" stop-color="#1010ff"/><stop offset="0.5" stop-color="#0000f4"/><stop offset="0.8" stop-color="#0000b0"/><stop offset="1" stop-color="#000058"/></linearGradient>
<linearGradient id="thead" x1="0" y1="0" x2="0" y2="1"><stop offset="0" stop-color="#303030"/><stop offset="0.48" stop-color="#383838"/><stop offset="0.5" stop-color="#1e1e1e"/><stop offset="1" stop-color="#101010"/></linearGradient>
<linearGradient id="tl0" x1="0" y1="0" x2="0" y2="1"><stop offset="0" stop-color="#2c2c2c"/><stop offset="1" stop-color="#242424"/></linearGradient>
<linearGradient id="barbg" x1="0" y1="0" x2="0" y2="1"><stop offset="0" stop-color="#484848"/><stop offset="0.25" stop-color="#444444"/><stop offset="0.6" stop-color="#343434"/><stop offset="1" stop-color="#242424"/></linearGradient>
<linearGradient id="bsel" x1="0" y1="0" x2="0" y2="1"><stop offset="0" stop-color="#151515"/><stop offset="0.55" stop-color="#202020"/><stop offset="1" stop-color="#363636"/></linearGradient>
<linearGradient id="bbtn" x1="0" y1="0" x2="0" y2="1"><stop offset="0" stop-color="#a2a2a2"/><stop offset="0.06" stop-color="#8e8e8e"/><stop offset="0.5" stop-color="#747474"/><stop offset="1" stop-color="#565656"/></linearGradient>
<linearGradient id="bbtn2" x1="0" y1="0" x2="0" y2="1"><stop offset="0" stop-color="#b0b0b0"/><stop offset="0.08" stop-color="#a0a0a0"/><stop offset="0.5" stop-color="#868686"/><stop offset="1" stop-color="#606060"/></linearGradient>
<linearGradient id="icoc" x1="0" y1="0" x2="0" y2="1"><stop offset="0" stop-color="#bcbcbc"/><stop offset="1" stop-color="#868686"/></linearGradient>
</defs>
<rect x="0" y="0" width="1920" height="1184" fill="#333333" />
<rect x="0" y="0" width="1920" height="26" fill="#ffffff" />
<rect x="0" y="26" width="1920" height="56" fill="#222222" />
<circle cx="14.4" cy="12.6" r="6.6" fill="url(#icrim)"/>
<circle cx="14.4" cy="12.6" r="5.4" fill="#000"/>
<text x="14.4" y="14.6" font-size="5.2" fill="#fff" text-anchor="middle" font-weight="bold" >CM</text>
<text x="25.6" y="17" font-size="11.6" fill="#000" textLength="290" lengthAdjust="spacingAndGlyphs" >CalMAN 2017 CalMAN Ultimate for Business 267 Days Remaining</text>
<line x1="1818.3" y1="13.2" x2="1827.2" y2="13.2" stroke="#222" stroke-width="1.1" />
<rect x="1856.6" y="8.7" width="8.2" height="7.8" fill="none" stroke="#222" stroke-width="1.1"/>
<path d="M1895.3 8.4 L1903.9 16.9 M1903.9 8.4 L1895.3 16.9" stroke="#222" stroke-width="1.1" fill="none"/>
<path d="M2 26 H155 V48 Q155 51 152 51 H5 Q2 51 2 48 Z" fill="url(#logo)"/>
<path d="M2 50 Q2 52.5 5 52.5 H152 Q155.5 52.5 155.5 49" fill="none" stroke="#5a1010" stroke-width="1" opacity=".8"/>
<text x="11.9" y="46.9" font-size="24.6" fill="#fff" stroke="#fff" stroke-width=".7" stroke-linejoin="round" letter-spacing="1.5" textLength="110" lengthAdjust="spacingAndGlyphs">CalMAN</text>
<circle cx="141.2" cy="37.6" r="9" fill="#b81010"/>
<circle cx="141.2" cy="38.2" r="8" fill="#d42020"/>
<path d="M136.6 36 H145.8 L141.2 41 Z" fill="#fff"/>
<rect x="161" y="36.6" width="1757" height="4.4" fill="url(#rain)" />
<rect x="161" y="36" width="1757" height="1" fill="#111" opacity=".5"/>
<rect x="1.5" y="56.5" width="22" height="23" rx="3" fill="url(#gbtn)" stroke="#9a9a9a" stroke-width="1"/>
<circle cx="11.5" cy="68" r="8" fill="#666" opacity=".6"/>
<path d="M8.8 62.8 L14.2 67.8 L8.8 72.8 Z" fill="#f4f4f4"/>
<path d="M25.5 82 V59 Q25.5 56.5 28 56.5 H100.5 Q103 56.5 103 59 V82 Z" fill="url(#tab)" stroke="#555" stroke-width="1"/>
<line x1="74.5" y1="57" x2="74.5" y2="82" stroke="#555" stroke-width="1" />
<text x="30.6" y="72.8" font-size="10.6" fill="#cfcfcf" textLength="39.5" lengthAdjust="spacingAndGlyphs" font-weight="bold" >History 1</text>
<circle cx="88.2" cy="70.4" r="8" fill="#2b2b2b"/>
<path d="M85.2 70.6 H91.2 M88.2 67.6 V73.6" stroke="#5a5a5a" stroke-width="1" fill="none"/>
<rect x="0" y="82" width="1920" height="1" fill="#2c2c2c" />
<path d="M1461 81.5 V59 Q1461 56 1464 56 H1589 Q1592 56 1592 59 V81.5 Z" fill="url(#pan)"/>
<path d="M1461 81.5 V59 Q1461 56 1464 56 H1465.5 V81.5 Z" fill="#10e010"/>
<text x="1468.4" y="65.6" font-size="9.6" fill="#f0f0f0" textLength="56" lengthAdjust="spacingAndGlyphs" >X-Rite i1Pro 2</text>
<text x="1468.4" y="77.6" font-size="9.6" fill="#f0f0f0" textLength="65.4" lengthAdjust="spacingAndGlyphs" >LCD Direct View</text>
<circle cx="1544.8" cy="69" r="7.2" fill="#404040" opacity=".6"/>
<path d="M1541.2 67.8 H1548.3999999999999 L1544.8 71.8 Z" fill="#fff"/>
<line x1="1561.5" y1="57" x2="1561.5" y2="81.5" stroke="#3a3a3a" stroke-width="1" />
<circle cx="1578.5" cy="68.6" r="10.8" fill="#0000f0" stroke="#e8e8ff" stroke-width="1.1"/>
<text x="1578.5" y="71.6" font-size="7.6" fill="#fff" text-anchor="middle" font-weight="bold" >167</text>
<path d="M1596.5 81.5 V59 Q1596.5 56 1599.5 56 H1703.5 Q1706.5 56 1706.5 59 V81.5 Z" fill="url(#pan)"/>
<path d="M1596.5 81.5 V59 Q1596.5 56 1599.5 56 H1601.0 V81.5 Z" fill="#10e010"/>
<text x="1604" y="65.6" font-size="9.6" fill="#f0f0f0" textLength="54.5" lengthAdjust="spacingAndGlyphs" >Mobile Forge</text>
<circle cx="1693" cy="69" r="7.2" fill="#404040" opacity=".6"/>
<path d="M1689.4 67.8 H1696.6 L1693 71.8 Z" fill="#fff"/>
<path d="M1712 81.5 V59 Q1712 56 1715 56 H1829.8 Q1832.8 56 1832.8 59 V81.5 Z" fill="url(#pan)"/>
<path d="M1712 81.5 V59 Q1712 56 1715 56 H1716.5 V81.5 Z" fill="#f0f000"/>
<text x="1719.4" y="65.6" font-size="9.6" fill="#f0f0f0" textLength="88.6" lengthAdjust="spacingAndGlyphs" >Direct Display Control</text>
<circle cx="1819.4" cy="69" r="7.2" fill="#404040" opacity=".6"/>
<path d="M1815.8000000000002 67.8 H1823.0 L1819.4 71.8 Z" fill="#fff"/>
<rect x="1836" y="56" width="27.59999999999991" height="23.6" rx="3" fill="url(#sqb)" stroke="#9c9c9c" stroke-width="1.2"/>
<circle cx="1849.8" cy="68" r="8.4" fill="#505050" opacity=".8"/>
<path d="M1853.20 68.00 L1855.80 68.00 M1852.20 70.40 L1854.04 72.24 M1849.80 71.40 L1849.80 74.00 M1847.40 70.40 L1845.56 72.24 M1846.40 68.00 L1843.80 68.00 M1847.40 65.60 L1845.56 63.76 M1849.80 64.60 L1849.80 62.00 M1852.20 65.60 L1854.04 63.76" stroke="#d4d4d4" stroke-width="1.8" fill="none"/>
<circle cx="1849.8" cy="68" r="3.5" fill="none" stroke="#d4d4d4" stroke-width="1.4"/>
<rect x="1866.2" y="56" width="27.799999999999955" height="23.6" rx="3" fill="url(#sqb)" stroke="#9c9c9c" stroke-width="1.2"/>
<circle cx="1880.1" cy="68" r="8.4" fill="#505050" opacity=".8"/>
<text x="1880.2" y="73" font-size="13.5" fill="#fff" text-anchor="middle" font-weight="bold" >?</text>
<rect x="1897" y="56" width="29" height="23.6" rx="3" fill="url(#sqb)" stroke="#9c9c9c" stroke-width="1.2"/>
<circle cx="1911.5" cy="68" r="8.4" fill="#505050" opacity=".8"/>
<path d="M1913.6 62.6 L1908 68 L1913.6 73.4 Z" fill="#f4f4f4"/>
<text x="28.6" y="156.4" font-size="50.5" fill="#f2f2f2" textLength="374" lengthAdjust="spacingAndGlyphs" >Saturation Sweeps</text>
<text x="163.8" y="220.6" font-size="17.6" fill="#e4e4e4" textLength="90.8" lengthAdjust="spacingAndGlyphs" >DeltaE 2000</text>
<rect x="50.5" y="227.5" width="358.5" height="530.5" fill="#242424" />
<line x1="98.22" y1="227.5" x2="98.22" y2="758" stroke="#8c8c8c" stroke-width="1.4" />
<line x1="145.94" y1="227.5" x2="145.94" y2="758" stroke="#8c8c8c" stroke-width="1.4" />
<line x1="193.66" y1="227.5" x2="193.66" y2="758" stroke="#8c8c8c" stroke-width="1.4" />
<line x1="241.38" y1="227.5" x2="241.38" y2="758" stroke="#8c8c8c" stroke-width="1.4" />
<line x1="289.1" y1="227.5" x2="289.1" y2="758" stroke="#8c8c8c" stroke-width="1.4" />
<line x1="336.82" y1="227.5" x2="336.82" y2="758" stroke="#8c8c8c" stroke-width="1.4" />
<line x1="384.54" y1="227.5" x2="384.54" y2="758" stroke="#8c8c8c" stroke-width="1.4" />
<line x1="50" y1="227.5" x2="410" y2="227.5" stroke="#a8a8a8" stroke-width="2" />
<line x1="409" y1="227.5" x2="409" y2="758" stroke="#a8a8a8" stroke-width="2" />
<line x1="50.5" y1="226.5" x2="50.5" y2="759" stroke="#a8a8a8" stroke-width="2" />
<line x1="44" y1="758" x2="410" y2="758" stroke="#a8a8a8" stroke-width="2" />
<rect x="51.5" y="235.5" width="110.833" height="10.3" fill="#000" />
<rect x="51.5" y="236.9" width="108.633" height="6.9" fill="url(#hb1)" />
<rect x="51.5" y="236.9" width="108.633" height="1.6" fill="#ffffff" opacity=".13"/>
<rect x="51.5" y="246.05" width="87.689" height="10.3" fill="#000" />
<rect x="51.5" y="247.45" width="85.489" height="6.9" fill="url(#hb2)" />
<rect x="51.5" y="247.45" width="85.489" height="1.6" fill="#ffffff" opacity=".13"/>
<rect x="51.5" y="256.6" width="56.1938" height="10.3" fill="#000" />
<rect x="51.5" y="258" width="53.9938" height="6.9" fill="url(#hb3)" />
<rect x="51.5" y="258" width="53.9938" height="1.6" fill="#ffffff" opacity=".13"/>
<rect x="51.5" y="267.15" width="54.7622" height="10.3" fill="#000" />
<rect x="51.5" y="268.55" width="52.5622" height="6.9" fill="url(#hb4)" />
<rect x="51.5" y="268.55" width="52.5622" height="1.6" fill="#ffffff" opacity=".13"/>
<rect x="51.5" y="277.7" width="104.868" height="10.3" fill="#000" />
<rect x="51.5" y="279.1" width="102.668" height="6.9" fill="url(#hb5)" />
<rect x="51.5" y="279.1" width="102.668" height="1.6" fill="#ffffff" opacity=".13"/>
<rect x="51.5" y="288.25" width="158.553" height="10.3" fill="#000" />
<rect x="51.5" y="289.65" width="156.353" height="6.9" fill="url(#hb6)" />
<rect x="51.5" y="289.65" width="156.353" height="1.6" fill="#ffffff" opacity=".13"/>
<rect x="51.5" y="325.2" width="98.9032" height="10.3" fill="#000" />
<rect x="51.5" y="326.6" width="96.7032" height="6.9" fill="url(#hb7)" />
<rect x="51.5" y="326.6" width="96.7032" height="1.6" fill="#ffffff" opacity=".13"/>
<rect x="51.5" y="335.75" width="40.2076" height="10.3" fill="#000" />
<rect x="51.5" y="337.15" width="38.0076" height="6.9" fill="url(#hb8)" />
<rect x="51.5" y="337.15" width="38.0076" height="1.6" fill="#ffffff" opacity=".13"/>
<rect x="51.5" y="346.3" width="32.811" height="10.3" fill="#000" />
<rect x="51.5" y="347.7" width="30.611" height="6.9" fill="url(#hb9)" />
<rect x="51.5" y="347.7" width="30.611" height="1.6" fill="#ffffff" opacity=".13"/>
<rect x="51.5" y="356.85" width="57.3868" height="10.3" fill="#000" />
<rect x="51.5" y="358.25" width="55.1868" height="6.9" fill="url(#hb10)" />
<rect x="51.5" y="358.25" width="55.1868" height="1.6" fill="#ffffff" opacity=".13"/>
<rect x="51.5" y="367.4" width="95.8014" height="10.3" fill="#000" />
<rect x="51.5" y="368.8" width="93.6014" height="6.9" fill="url(#hb11)" />
<rect x="51.5" y="368.8" width="93.6014" height="1.6" fill="#ffffff" opacity=".13"/>
<rect x="51.5" y="377.95" width="154.974" height="10.3" fill="#000" />
<rect x="51.5" y="379.35" width="152.774" height="6.9" fill="url(#hb12)" />
<rect x="51.5" y="379.35" width="152.774" height="1.6" fill="#ffffff" opacity=".13"/>
<rect x="51.5" y="412.9" width="101.766" height="10.3" fill="#000" />
<rect x="51.5" y="414.3" width="99.5664" height="6.9" fill="url(#hb13)" />
<rect x="51.5" y="414.3" width="99.5664" height="1.6" fill="#ffffff" opacity=".13"/>
<rect x="51.5" y="423.45" width="56.4324" height="10.3" fill="#000" />
<rect x="51.5" y="424.85" width="54.2324" height="6.9" fill="url(#hb14)" />
<rect x="51.5" y="424.85" width="54.2324" height="1.6" fill="#ffffff" opacity=".13"/>
<rect x="51.5" y="434" width="31.1408" height="10.3" fill="#000" />
<rect x="51.5" y="435.4" width="28.9408" height="6.9" fill="url(#hb15)" />
<rect x="51.5" y="435.4" width="28.9408" height="1.6" fill="#ffffff" opacity=".13"/>
<rect x="51.5" y="444.55" width="64.3062" height="10.3" fill="#000" />
<rect x="51.5" y="445.95" width="62.1062" height="6.9" fill="url(#hb16)" />
<rect x="51.5" y="445.95" width="62.1062" height="1.6" fill="#ffffff" opacity=".13"/>
<rect x="51.5" y="455.1" width="104.63" height="10.3" fill="#000" />
<rect x="51.5" y="456.5" width="102.43" height="6.9" fill="url(#hb17)" />
<rect x="51.5" y="456.5" width="102.43" height="1.6" fill="#ffffff" opacity=".13"/>
<rect x="51.5" y="465.65" width="162.132" height="10.3" fill="#000" />
<rect x="51.5" y="467.05" width="159.932" height="6.9" fill="url(#hb18)" />
<rect x="51.5" y="467.05" width="159.932" height="1.6" fill="#ffffff" opacity=".13"/>
<rect x="51.5" y="501.4" width="129.683" height="10.3" fill="#000" />
<rect x="51.5" y="502.8" width="127.483" height="6.9" fill="url(#hb19)" />
<rect x="51.5" y="502.8" width="127.483" height="1.6" fill="#ffffff" opacity=".13"/>
<rect x="51.5" y="511.95" width="69.3168" height="10.3" fill="#000" />
<rect x="51.5" y="513.35" width="67.1168" height="6.9" fill="url(#hb20)" />
<rect x="51.5" y="513.35" width="67.1168" height="1.6" fill="#ffffff" opacity=".13"/>
<rect x="51.5" y="522.5" width="67.8852" height="10.3" fill="#000" />
<rect x="51.5" y="523.9" width="65.6852" height="6.9" fill="url(#hb21)" />
<rect x="51.5" y="523.9" width="65.6852" height="1.6" fill="#ffffff" opacity=".13"/>
<rect x="51.5" y="533.05" width="77.9064" height="10.3" fill="#000" />
<rect x="51.5" y="534.45" width="75.7064" height="6.9" fill="url(#hb22)" />
<rect x="51.5" y="534.45" width="75.7064" height="1.6" fill="#ffffff" opacity=".13"/>
<rect x="51.5" y="543.6" width="134.216" height="10.3" fill="#000" />
<rect x="51.5" y="545" width="132.016" height="6.9" fill="url(#hb23)" />
<rect x="51.5" y="545" width="132.016" height="1.6" fill="#ffffff" opacity=".13"/>
<rect x="51.5" y="554.15" width="182.652" height="10.3" fill="#000" />
<rect x="51.5" y="555.55" width="180.452" height="6.9" fill="url(#hb24)" />
<rect x="51.5" y="555.55" width="180.452" height="1.6" fill="#ffffff" opacity=".13"/>
<rect x="51.5" y="591" width="195.536" height="10.3" fill="#000" />
<rect x="51.5" y="592.4" width="193.336" height="6.9" fill="url(#hb25)" />
<rect x="51.5" y="592.4" width="193.336" height="1.6" fill="#ffffff" opacity=".13"/>
<rect x="51.5" y="601.55" width="96.7558" height="10.3" fill="#000" />
<rect x="51.5" y="602.95" width="94.5558" height="6.9" fill="url(#hb26)" />
<rect x="51.5" y="602.95" width="94.5558" height="1.6" fill="#ffffff" opacity=".13"/>
<rect x="51.5" y="612.1" width="148.532" height="10.3" fill="#000" />
<rect x="51.5" y="613.5" width="146.332" height="6.9" fill="url(#hb27)" />
<rect x="51.5" y="613.5" width="146.332" height="1.6" fill="#ffffff" opacity=".13"/>
<rect x="51.5" y="622.65" width="115.605" height="10.3" fill="#000" />
<rect x="51.5" y="624.05" width="113.405" height="6.9" fill="url(#hb28)" />
<rect x="51.5" y="624.05" width="113.405" height="1.6" fill="#ffffff" opacity=".13"/>
<rect x="51.5" y="633.2" width="198.877" height="10.3" fill="#000" />
<rect x="51.5" y="634.6" width="196.677" height="6.9" fill="url(#hb29)" />
<rect x="51.5" y="634.6" width="196.677" height="1.6" fill="#ffffff" opacity=".13"/>
<rect x="51.5" y="643.75" width="215.34" height="10.3" fill="#000" />
<rect x="51.5" y="645.15" width="213.14" height="6.9" fill="url(#hb30)" />
<rect x="51.5" y="645.15" width="213.14" height="1.6" fill="#ffffff" opacity=".13"/>
<rect x="51.5" y="740.8" width="250.414" height="9.8" fill="#000" />
<rect x="51.5" y="742.2" width="248.214" height="6.9" fill="url(#hb31)" />
<line x1="73.96" y1="228.5" x2="73.96" y2="757" stroke="#008c00" stroke-width="2" />
<line x1="121.88" y1="228.5" x2="121.88" y2="757" stroke="#f4f400" stroke-width="2" />
<line x1="289.7" y1="228.5" x2="289.7" y2="757" stroke="#ff1010" stroke-width="2" />
<line x1="44" y1="227.5" x2="50.5" y2="227.5" stroke="#d8d8d8" stroke-width="2" />
<line x1="44" y1="316" x2="50.5" y2="316" stroke="#d8d8d8" stroke-width="2" />
<line x1="44" y1="406" x2="50.5" y2="406" stroke="#d8d8d8" stroke-width="2" />
<line x1="44" y1="493.5" x2="50.5" y2="493.5" stroke="#d8d8d8" stroke-width="2" />
<line x1="44" y1="582" x2="50.5" y2="582" stroke="#d8d8d8" stroke-width="2" />
<line x1="44" y1="670" x2="50.5" y2="670" stroke="#d8d8d8" stroke-width="2" />
<line x1="44" y1="758" x2="50.5" y2="758" stroke="#d8d8d8" stroke-width="2" />
<text x="8.4" y="279.8" font-size="17.8" fill="#e4e4e4" textLength="41.2" lengthAdjust="spacingAndGlyphs" >100%</text>
<text x="17" y="367.2" font-size="17.8" fill="#e4e4e4" textLength="32.6" lengthAdjust="spacingAndGlyphs" >80%</text>
<text x="17" y="455.6" font-size="17.8" fill="#e4e4e4" textLength="32.6" lengthAdjust="spacingAndGlyphs" >60%</text>
<text x="17" y="545" font-size="17.8" fill="#e4e4e4" textLength="32.6" lengthAdjust="spacingAndGlyphs" >40%</text>
<text x="17" y="632.8" font-size="17.8" fill="#e4e4e4" textLength="32.6" lengthAdjust="spacingAndGlyphs" >20%</text>
<text x="22.2" y="721.8" font-size="17.8" fill="#e4e4e4" textLength="27.4" lengthAdjust="spacingAndGlyphs" >100</text>
<line x1="50.5" y1="758" x2="50.5" y2="765.5" stroke="#d8d8d8" stroke-width="2" />
<text x="45.8" y="785.2" font-size="17.8" fill="#e4e4e4" textLength="8.6" lengthAdjust="spacingAndGlyphs" >0</text>
<line x1="98.22" y1="758" x2="98.22" y2="765.5" stroke="#d8d8d8" stroke-width="2" />
<text x="93.52" y="785.2" font-size="17.8" fill="#e4e4e4" textLength="8.6" lengthAdjust="spacingAndGlyphs" >2</text>
<line x1="145.94" y1="758" x2="145.94" y2="765.5" stroke="#d8d8d8" stroke-width="2" />
<text x="141.24" y="785.2" font-size="17.8" fill="#e4e4e4" textLength="8.6" lengthAdjust="spacingAndGlyphs" >4</text>
<line x1="193.66" y1="758" x2="193.66" y2="765.5" stroke="#d8d8d8" stroke-width="2" />
<text x="188.96" y="785.2" font-size="17.8" fill="#e4e4e4" textLength="8.6" lengthAdjust="spacingAndGlyphs" >6</text>
<line x1="241.38" y1="758" x2="241.38" y2="765.5" stroke="#d8d8d8" stroke-width="2" />
<text x="236.68" y="785.2" font-size="17.8" fill="#e4e4e4" textLength="8.6" lengthAdjust="spacingAndGlyphs" >8</text>
<line x1="289.1" y1="758" x2="289.1" y2="765.5" stroke="#d8d8d8" stroke-width="2" />
<text x="279.7" y="785.2" font-size="17.8" fill="#e4e4e4" textLength="18" lengthAdjust="spacingAndGlyphs" >10</text>
<line x1="336.82" y1="758" x2="336.82" y2="765.5" stroke="#d8d8d8" stroke-width="2" />
<text x="327.42" y="785.2" font-size="17.8" fill="#e4e4e4" textLength="18" lengthAdjust="spacingAndGlyphs" >12</text>
<line x1="384.54" y1="758" x2="384.54" y2="765.5" stroke="#d8d8d8" stroke-width="2" />
<text x="375.14" y="785.2" font-size="17.8" fill="#e4e4e4" textLength="18" lengthAdjust="spacingAndGlyphs" >14</text>
<rect x="470" y="139.9" width="166" height="405.6" fill="#242424" />
<line x1="470" y1="142.4" x2="636" y2="142.4" stroke="#9a9a9a" stroke-width="1.5" />
<line x1="470" y1="209.8" x2="636" y2="209.8" stroke="#9a9a9a" stroke-width="1.5" />
<line x1="470" y1="276.8" x2="636" y2="276.8" stroke="#9a9a9a" stroke-width="1.5" />
<line x1="470" y1="344.2" x2="636" y2="344.2" stroke="#9a9a9a" stroke-width="1.5" />
<line x1="470" y1="413" x2="636" y2="413" stroke="#9a9a9a" stroke-width="1.5" />
<line x1="470" y1="480.8" x2="636" y2="480.8" stroke="#9a9a9a" stroke-width="1.5" />
<line x1="469" y1="140" x2="637" y2="140" stroke="#a8a8a8" stroke-width="1.3" />
<line x1="470" y1="139.4" x2="470" y2="554.5" stroke="#a8a8a8" stroke-width="2" />
<line x1="636" y1="139.4" x2="636" y2="554.5" stroke="#a8a8a8" stroke-width="2" />
<line x1="463.5" y1="546.5" x2="637" y2="546.5" stroke="#a8a8a8" stroke-width="2" />
<rect x="486.4" y="343.8" width="132.7" height="28.745" fill="#000" />
<rect x="487.9" y="345.3" width="129.7" height="25.745" fill="url(#ybarS)" />
<line x1="463" y1="141.8" x2="470" y2="141.8" stroke="#e0e0e0" stroke-width="2" />
<text x="445.2" y="148.8" font-size="17.8" fill="#e4e4e4" textLength="17.2" lengthAdjust="spacingAndGlyphs" >15</text>
<line x1="463" y1="209.8" x2="470" y2="209.8" stroke="#e0e0e0" stroke-width="2" />
<text x="445.2" y="216.8" font-size="17.8" fill="#e4e4e4" textLength="17.2" lengthAdjust="spacingAndGlyphs" >10</text>
<line x1="463" y1="276.8" x2="470" y2="276.8" stroke="#e0e0e0" stroke-width="2" />
<text x="453.8" y="283.8" font-size="17.8" fill="#e4e4e4" textLength="8.6" lengthAdjust="spacingAndGlyphs" >5</text>
<line x1="463" y1="344.2" x2="470" y2="344.2" stroke="#e0e0e0" stroke-width="2" />
<text x="453.8" y="351.2" font-size="17.8" fill="#e4e4e4" textLength="8.6" lengthAdjust="spacingAndGlyphs" >0</text>
<line x1="463" y1="413" x2="470" y2="413" stroke="#e0e0e0" stroke-width="2" />
<text x="447.8" y="420" font-size="17.8" fill="#e4e4e4" textLength="14.6" lengthAdjust="spacingAndGlyphs" >-5</text>
<line x1="463" y1="480.8" x2="470" y2="480.8" stroke="#e0e0e0" stroke-width="2" />
<text x="439" y="487.8" font-size="17.8" fill="#e4e4e4" textLength="23.4" lengthAdjust="spacingAndGlyphs" >-10</text>
<line x1="463" y1="546.5" x2="470" y2="546.5" stroke="#e0e0e0" stroke-width="2" />
<text x="439" y="553.5" font-size="17.8" fill="#e4e4e4" textLength="23.4" lengthAdjust="spacingAndGlyphs" >-15</text>
<text x="532.4" y="567.8" font-size="17.8" fill="#e4e4e4" textLength="41.2" lengthAdjust="spacingAndGlyphs" >100%</text>
<text x="514.3" y="133.4" font-size="17.6" fill="#e4e4e4" textLength="47.4" lengthAdjust="spacingAndGlyphs" >DeltaL</text>
<rect x="697" y="139.9" width="166" height="405.6" fill="#242424" />
<line x1="697" y1="142.4" x2="863" y2="142.4" stroke="#9a9a9a" stroke-width="1.5" />
<line x1="697" y1="209.8" x2="863" y2="209.8" stroke="#9a9a9a" stroke-width="1.5" />
<line x1="697" y1="276.8" x2="863" y2="276.8" stroke="#9a9a9a" stroke-width="1.5" />
<line x1="697" y1="344.2" x2="863" y2="344.2" stroke="#9a9a9a" stroke-width="1.5" />
<line x1="697" y1="413" x2="863" y2="413" stroke="#9a9a9a" stroke-width="1.5" />
<line x1="697" y1="480.8" x2="863" y2="480.8" stroke="#9a9a9a" stroke-width="1.5" />
<line x1="696" y1="140" x2="864" y2="140" stroke="#a8a8a8" stroke-width="1.3" />
<line x1="697" y1="139.4" x2="697" y2="554.5" stroke="#a8a8a8" stroke-width="2" />
<line x1="863" y1="139.4" x2="863" y2="554.5" stroke="#a8a8a8" stroke-width="2" />
<line x1="690.5" y1="546.5" x2="864" y2="546.5" stroke="#a8a8a8" stroke-width="2" />
<rect x="713.4" y="343.8" width="132.7" height="201.7" fill="#000" />
<rect x="714.9" y="345.2" width="129.7" height="200.7" fill="url(#ybarC)" />
<line x1="690" y1="141.8" x2="697" y2="141.8" stroke="#e0e0e0" stroke-width="2" />
<text x="672.2" y="148.8" font-size="17.8" fill="#e4e4e4" textLength="17.2" lengthAdjust="spacingAndGlyphs" >15</text>
<line x1="690" y1="209.8" x2="697" y2="209.8" stroke="#e0e0e0" stroke-width="2" />
<text x="672.2" y="216.8" font-size="17.8" fill="#e4e4e4" textLength="17.2" lengthAdjust="spacingAndGlyphs" >10</text>
<line x1="690" y1="276.8" x2="697" y2="276.8" stroke="#e0e0e0" stroke-width="2" />
<text x="680.8" y="283.8" font-size="17.8" fill="#e4e4e4" textLength="8.6" lengthAdjust="spacingAndGlyphs" >5</text>
<line x1="690" y1="344.2" x2="697" y2="344.2" stroke="#e0e0e0" stroke-width="2" />
<text x="680.8" y="351.2" font-size="17.8" fill="#e4e4e4" textLength="8.6" lengthAdjust="spacingAndGlyphs" >0</text>
<line x1="690" y1="413" x2="697" y2="413" stroke="#e0e0e0" stroke-width="2" />
<text x="674.8" y="420" font-size="17.8" fill="#e4e4e4" textLength="14.6" lengthAdjust="spacingAndGlyphs" >-5</text>
<line x1="690" y1="480.8" x2="697" y2="480.8" stroke="#e0e0e0" stroke-width="2" />
<text x="666" y="487.8" font-size="17.8" fill="#e4e4e4" textLength="23.4" lengthAdjust="spacingAndGlyphs" >-10</text>
<line x1="690" y1="546.5" x2="697" y2="546.5" stroke="#e0e0e0" stroke-width="2" />
<text x="666" y="553.5" font-size="17.8" fill="#e4e4e4" textLength="23.4" lengthAdjust="spacingAndGlyphs" >-15</text>
<text x="759.4" y="567.8" font-size="17.8" fill="#e4e4e4" textLength="41.2" lengthAdjust="spacingAndGlyphs" >100%</text>
<text x="739.8" y="133.4" font-size="17.6" fill="#e4e4e4" textLength="50.2" lengthAdjust="spacingAndGlyphs" >DeltaC</text>
<rect x="924" y="139.9" width="166" height="405.6" fill="#242424" />
<line x1="924" y1="142.4" x2="1090" y2="142.4" stroke="#9a9a9a" stroke-width="1.5" />
<line x1="924" y1="209.8" x2="1090" y2="209.8" stroke="#9a9a9a" stroke-width="1.5" />
<line x1="924" y1="276.8" x2="1090" y2="276.8" stroke="#9a9a9a" stroke-width="1.5" />
<line x1="924" y1="344.2" x2="1090" y2="344.2" stroke="#9a9a9a" stroke-width="1.5" />
<line x1="924" y1="413" x2="1090" y2="413" stroke="#9a9a9a" stroke-width="1.5" />
<line x1="924" y1="480.8" x2="1090" y2="480.8" stroke="#9a9a9a" stroke-width="1.5" />
<line x1="923" y1="140" x2="1091" y2="140" stroke="#a8a8a8" stroke-width="1.3" />
<line x1="924" y1="139.4" x2="924" y2="554.5" stroke="#a8a8a8" stroke-width="2" />
<line x1="1090" y1="139.4" x2="1090" y2="554.5" stroke="#a8a8a8" stroke-width="2" />
<line x1="917.5" y1="546.5" x2="1091" y2="546.5" stroke="#a8a8a8" stroke-width="2" />
<rect x="940.4" y="200.025" width="132.7" height="144.575" fill="#000" />
<rect x="941.9" y="201.525" width="129.7" height="141.575" fill="url(#ybar)" />
<line x1="917" y1="141.8" x2="924" y2="141.8" stroke="#e0e0e0" stroke-width="2" />
<text x="899.2" y="148.8" font-size="17.8" fill="#e4e4e4" textLength="17.2" lengthAdjust="spacingAndGlyphs" >15</text>
<line x1="917" y1="209.8" x2="924" y2="209.8" stroke="#e0e0e0" stroke-width="2" />
<text x="899.2" y="216.8" font-size="17.8" fill="#e4e4e4" textLength="17.2" lengthAdjust="spacingAndGlyphs" >10</text>
<line x1="917" y1="276.8" x2="924" y2="276.8" stroke="#e0e0e0" stroke-width="2" />
<text x="907.8" y="283.8" font-size="17.8" fill="#e4e4e4" textLength="8.6" lengthAdjust="spacingAndGlyphs" >5</text>
<line x1="917" y1="344.2" x2="924" y2="344.2" stroke="#e0e0e0" stroke-width="2" />
<text x="907.8" y="351.2" font-size="17.8" fill="#e4e4e4" textLength="8.6" lengthAdjust="spacingAndGlyphs" >0</text>
<line x1="917" y1="413" x2="924" y2="413" stroke="#e0e0e0" stroke-width="2" />
<text x="901.8" y="420" font-size="17.8" fill="#e4e4e4" textLength="14.6" lengthAdjust="spacingAndGlyphs" >-5</text>
<line x1="917" y1="480.8" x2="924" y2="480.8" stroke="#e0e0e0" stroke-width="2" />
<text x="893" y="487.8" font-size="17.8" fill="#e4e4e4" textLength="23.4" lengthAdjust="spacingAndGlyphs" >-10</text>
<line x1="917" y1="546.5" x2="924" y2="546.5" stroke="#e0e0e0" stroke-width="2" />
<text x="893" y="553.5" font-size="17.8" fill="#e4e4e4" textLength="23.4" lengthAdjust="spacingAndGlyphs" >-15</text>
<text x="986.4" y="567.8" font-size="17.8" fill="#e4e4e4" textLength="41.2" lengthAdjust="spacingAndGlyphs" >100%</text>
<text x="966.4" y="133.4" font-size="17.6" fill="#e4e4e4" textLength="50.6" lengthAdjust="spacingAndGlyphs" >DeltaH</text>
<rect x="432" y="588.8" width="680" height="209.2" fill="#000000" />
<rect x="456" y="597.8" width="114.4" height="171.2" fill="#ffffff" />
<rect x="457.7" y="599.5" width="111" height="84.6" fill="#abc2ac" />
<rect x="457.7" y="683.5" width="111" height="83.8" fill="#bfbf9e" />
<text x="500.1" y="788" font-size="14.2" fill="#ffffff" textLength="26.2" lengthAdjust="spacingAndGlyphs" stroke="#fff" stroke-width=".35">20%</text>
<rect x="588.9" y="597.8" width="114.4" height="171.2" fill="#ffffff" />
<rect x="590.6" y="599.5" width="111" height="84.6" fill="#abc392" />
<rect x="590.6" y="683.5" width="111" height="83.8" fill="#c0bf80" />
<text x="633" y="788" font-size="14.2" fill="#ffffff" textLength="26.2" lengthAdjust="spacingAndGlyphs" stroke="#fff" stroke-width=".35">40%</text>
<rect x="721.8" y="597.8" width="114.4" height="171.2" fill="#ffffff" />
<rect x="723.5" y="599.5" width="111" height="84.6" fill="#adc176" />
<rect x="723.5" y="683.5" width="111" height="83.8" fill="#c1bf62" />
<text x="765.9" y="788" font-size="14.2" fill="#ffffff" textLength="26.2" lengthAdjust="spacingAndGlyphs" stroke="#fff" stroke-width=".35">60%</text>
<rect x="854.7" y="597.8" width="114.4" height="171.2" fill="#ffffff" />
<rect x="856.4" y="599.5" width="111" height="84.6" fill="#acbf4e" />
<rect x="856.4" y="683.5" width="111" height="83.8" fill="#c2bc30" />
<text x="898.8" y="788" font-size="14.2" fill="#ffffff" textLength="26.2" lengthAdjust="spacingAndGlyphs" stroke="#fff" stroke-width=".35">80%</text>
<rect x="987.6" y="597.8" width="114.4" height="171.2" fill="#ffffff" />
<rect x="989.3" y="599.5" width="111" height="84.6" fill="#b1c14e" />
<rect x="989.3" y="683.5" width="111" height="83.8" fill="#c6c400" />
<text x="1028" y="788" font-size="14.2" fill="#ffffff" textLength="33.6" lengthAdjust="spacingAndGlyphs" stroke="#fff" stroke-width=".35">100%</text>
<text transform="translate(447.4 657.8) rotate(-90)" font-size="14.4" fill="#fff" stroke="#fff" stroke-width=".3" textLength="44.4" lengthAdjust="spacingAndGlyphs">Actual</text>
<text transform="translate(447.4 753.2) rotate(-90)" font-size="14.4" fill="#fff" stroke="#fff" stroke-width=".3" textLength="44" lengthAdjust="spacingAndGlyphs">Target</text>
<rect x="1120" y="99" width="798" height="716.6" fill="#1d1d1d" />
<rect x="1128" y="107.6" width="783" height="699.8" fill="#333333" />
<text x="1475.6" y="131.6" font-size="17.6" fill="#e4e4e4" textLength="87.6" lengthAdjust="spacingAndGlyphs" >CIE 1931 xy</text>
<rect x="1162" y="138" width="744.5" height="632.4" fill="#242424" />
<g clip-path="url(#locclip)">
<rect x="1219" y="142" width="29" height="2.6" fill="url(#c0)"/>
<rect x="1213" y="144" width="43" height="2.6" fill="url(#c1)"/>
<rect x="1208" y="146" width="55" height="2.6" fill="url(#c2)"/>
<rect x="1205" y="148" width="64" height="2.6" fill="url(#c3)"/>
<rect x="1202" y="150" width="72" height="2.6" fill="url(#c4)"/>
<rect x="1199" y="152" width="80" height="2.6" fill="url(#c5)"/>
<rect x="1197" y="154" width="87" height="2.6" fill="url(#c6)"/>
<rect x="1195" y="156" width="94" height="2.6" fill="url(#c7)"/>
<rect x="1193" y="158" width="100" height="2.6" fill="url(#c8)"/>
<rect x="1192" y="160" width="105" height="2.6" fill="url(#c9)"/>
<rect x="1190" y="162" width="111" height="2.6" fill="url(#c10)"/>
<rect x="1189" y="164" width="116" height="2.6" fill="url(#c11)"/>
<rect x="1187" y="166" width="122" height="2.6" fill="url(#c12)"/>
<rect x="1186" y="168" width="127" height="2.6" fill="url(#c13)"/>
<rect x="1185" y="170" width="132" height="2.6" fill="url(#c14)"/>
<rect x="1184" y="172" width="137" height="2.6" fill="url(#c15)"/>
<rect x="1183" y="174" width="141" height="2.6" fill="url(#c16)"/>
<rect x="1182" y="176" width="146" height="2.6" fill="url(#c17)"/>
<rect x="1181" y="178" width="150" height="2.6" fill="url(#c18)"/>
<rect x="1180" y="180" width="155" height="2.6" fill="url(#c19)"/>
<rect x="1179" y="182" width="159" height="2.6" fill="url(#c20)"/>
<rect x="1178" y="184" width="163" height="2.6" fill="url(#c21)"/>
<rect x="1177" y="186" width="168" height="2.6" fill="url(#c22)"/>
<rect x="1177" y="188" width="171" height="2.6" fill="url(#c23)"/>
<rect x="1176" y="190" width="175" height="2.6" fill="url(#c24)"/>
<rect x="1175" y="192" width="179" height="2.6" fill="url(#c25)"/>
<rect x="1175" y="194" width="182" height="2.6" fill="url(#c26)"/>
<rect x="1174" y="196" width="186" height="2.6" fill="url(#c27)"/>
<rect x="1173" y="198" width="190" height="2.6" fill="url(#c28)"/>
<rect x="1173" y="200" width="193" height="2.6" fill="url(#c29)"/>
<rect x="1172" y="202" width="197" height="2.6" fill="url(#c30)"/>
<rect x="1172" y="204" width="200" height="2.6" fill="url(#c31)"/>
<rect x="1171" y="206" width="204" height="2.6" fill="url(#c32)"/>
<rect x="1171" y="208" width="207" height="2.6" fill="url(#c33)"/>
<rect x="1170" y="210" width="211" height="2.6" fill="url(#c34)"/>
<rect x="1170" y="212" width="214" height="2.6" fill="url(#c35)"/>
<rect x="1169" y="214" width="218" height="2.6" fill="url(#c36)"/>
<rect x="1169" y="216" width="221" height="2.6" fill="url(#c37)"/>
<rect x="1168" y="218" width="224" height="2.6" fill="url(#c38)"/>
<rect x="1168" y="220" width="227" height="2.6" fill="url(#c39)"/>
<rect x="1168" y="222" width="230" height="2.6" fill="url(#c40)"/>
<rect x="1167" y="224" width="234" height="2.6" fill="url(#c41)"/>
<rect x="1167" y="226" width="236" height="2.6" fill="url(#c42)"/>
<rect x="1167" y="228" width="239" height="2.6" fill="url(#c43)"/>
<rect x="1166" y="230" width="243" height="2.6" fill="url(#c44)"/>
<rect x="1166" y="232" width="245" height="2.6" fill="url(#c45)"/>
<rect x="1166" y="234" width="248" height="2.6" fill="url(#c46)"/>
<rect x="1166" y="236" width="251" height="2.6" fill="url(#c47)"/>
<rect x="1165" y="238" width="254" height="2.6" fill="url(#c48)"/>
<rect x="1165" y="240" width="257" height="2.6" fill="url(#c49)"/>
<rect x="1165" y="242" width="259" height="2.6" fill="url(#c50)"/>
<rect x="1165" y="244" width="262" height="2.6" fill="url(#c51)"/>
<rect x="1164" y="246" width="266" height="2.6" fill="url(#c52)"/>
<rect x="1164" y="248" width="268" height="2.6" fill="url(#c53)"/>
<rect x="1164" y="250" width="271" height="2.6" fill="url(#c54)"/>
<rect x="1164" y="252" width="273" height="2.6" fill="url(#c55)"/>
<rect x="1164" y="254" width="276" height="2.6" fill="url(#c56)"/>
<rect x="1164" y="256" width="278" height="2.6" fill="url(#c57)"/>
<rect x="1164" y="258" width="281" height="2.6" fill="url(#c58)"/>
<rect x="1163" y="260" width="284" height="2.6" fill="url(#c59)"/>
<rect x="1163" y="262" width="287" height="2.6" fill="url(#c60)"/>
<rect x="1163" y="264" width="289" height="2.6" fill="url(#c61)"/>
<rect x="1163" y="266" width="292" height="2.6" fill="url(#c62)"/>
<rect x="1163" y="268" width="294" height="2.6" fill="url(#c63)"/>
<rect x="1163" y="270" width="297" height="2.6" fill="url(#c64)"/>
<rect x="1163" y="272" width="299" height="2.6" fill="url(#c65)"/>
<rect x="1163" y="274" width="302" height="2.6" fill="url(#c66)"/>
<rect x="1163" y="276" width="304" height="2.6" fill="url(#c67)"/>
<rect x="1163" y="278" width="307" height="2.6" fill="url(#c68)"/>
<rect x="1163" y="280" width="309" height="2.6" fill="url(#c69)"/>
<rect x="1163" y="282" width="312" height="2.6" fill="url(#c70)"/>
<rect x="1163" y="284" width="314" height="2.6" fill="url(#c71)"/>
<rect x="1163" y="286" width="317" height="2.6" fill="url(#c72)"/>
<rect x="1163" y="288" width="319" height="2.6" fill="url(#c73)"/>
<rect x="1163" y="290" width="321" height="2.6" fill="url(#c74)"/>
<rect x="1162" y="292" width="325" height="2.6" fill="url(#c75)"/>
<rect x="1163" y="294" width="326" height="2.6" fill="url(#c76)"/>
<rect x="1163" y="296" width="329" height="2.6" fill="url(#c77)"/>
<rect x="1163" y="298" width="331" height="2.6" fill="url(#c78)"/>
<rect x="1163" y="300" width="334" height="2.6" fill="url(#c79)"/>
<rect x="1163" y="302" width="336" height="2.6" fill="url(#c80)"/>
<rect x="1163" y="304" width="338" height="2.6" fill="url(#c81)"/>
<rect x="1163" y="306" width="341" height="2.6" fill="url(#c82)"/>
<rect x="1163" y="308" width="343" height="2.6" fill="url(#c83)"/>
<rect x="1163" y="310" width="346" height="2.6" fill="url(#c84)"/>
<rect x="1163" y="312" width="348" height="2.6" fill="url(#c85)"/>
<rect x="1163" y="314" width="350" height="2.6" fill="url(#c86)"/>
<rect x="1163" y="316" width="353" height="2.6" fill="url(#c87)"/>
<rect x="1163" y="318" width="355" height="2.6" fill="url(#c88)"/>
<rect x="1163" y="320" width="358" height="2.6" fill="url(#c89)"/>
<rect x="1163" y="322" width="360" height="2.6" fill="url(#c90)"/>
<rect x="1163" y="324" width="362" height="2.6" fill="url(#c91)"/>
<rect x="1164" y="326" width="364" height="2.6" fill="url(#c92)"/>
<rect x="1164" y="328" width="366" height="2.6" fill="url(#c93)"/>
<rect x="1164" y="330" width="368" height="2.6" fill="url(#c94)"/>
<rect x="1164" y="332" width="371" height="2.6" fill="url(#c95)"/>
<rect x="1164" y="334" width="373" height="2.6" fill="url(#c96)"/>
<rect x="1164" y="336" width="376" height="2.6" fill="url(#c97)"/>
<rect x="1164" y="338" width="378" height="2.6" fill="url(#c98)"/>
<rect x="1164" y="340" width="380" height="2.6" fill="url(#c99)"/>
<rect x="1165" y="342" width="382" height="2.6" fill="url(#c100)"/>
<rect x="1165" y="344" width="384" height="2.6" fill="url(#c101)"/>
<rect x="1165" y="346" width="387" height="2.6" fill="url(#c102)"/>
<rect x="1165" y="348" width="389" height="2.6" fill="url(#c103)"/>
<rect x="1165" y="350" width="391" height="2.6" fill="url(#c104)"/>
<rect x="1165" y="352" width="394" height="2.6" fill="url(#c105)"/>
<rect x="1166" y="354" width="395" height="2.6" fill="url(#c106)"/>
<rect x="1166" y="356" width="397" height="2.6" fill="url(#c107)"/>
<rect x="1166" y="358" width="400" height="2.6" fill="url(#c108)"/>
<rect x="1166" y="360" width="402" height="2.6" fill="url(#c109)"/>
<rect x="1166" y="362" width="405" height="2.6" fill="url(#c110)"/>
<rect x="1166" y="364" width="407" height="2.6" fill="url(#c111)"/>
<rect x="1167" y="366" width="408" height="2.6" fill="url(#c112)"/>
<rect x="1167" y="368" width="411" height="2.6" fill="url(#c113)"/>
<rect x="1167" y="370" width="413" height="2.6" fill="url(#c114)"/>
<rect x="1167" y="372" width="415" height="2.6" fill="url(#c115)"/>
<rect x="1168" y="374" width="417" height="2.6" fill="url(#c116)"/>
<rect x="1168" y="376" width="419" height="2.6" fill="url(#c117)"/>
<rect x="1168" y="378" width="421" height="2.6" fill="url(#c118)"/>
<rect x="1168" y="380" width="424" height="2.6" fill="url(#c119)"/>
<rect x="1168" y="382" width="426" height="2.6" fill="url(#c120)"/>
<rect x="1169" y="384" width="428" height="2.6" fill="url(#c121)"/>
<rect x="1169" y="386" width="430" height="2.6" fill="url(#c122)"/>
<rect x="1169" y="388" width="432" height="2.6" fill="url(#c123)"/>
<rect x="1169" y="390" width="435" height="2.6" fill="url(#c124)"/>
<rect x="1170" y="392" width="436" height="2.6" fill="url(#c125)"/>
<rect x="1170" y="394" width="438" height="2.6" fill="url(#c126)"/>
<rect x="1170" y="396" width="441" height="2.6" fill="url(#c127)"/>
<rect x="1170" y="398" width="443" height="2.6" fill="url(#c128)"/>
<rect x="1171" y="400" width="444" height="2.6" fill="url(#c129)"/>
<rect x="1171" y="402" width="447" height="2.6" fill="url(#c130)"/>
<rect x="1171" y="404" width="449" height="2.6" fill="url(#c131)"/>
<rect x="1172" y="406" width="450" height="2.6" fill="url(#c132)"/>
<rect x="1172" y="408" width="453" height="2.6" fill="url(#c133)"/>
<rect x="1172" y="410" width="455" height="2.6" fill="url(#c134)"/>
<rect x="1172" y="412" width="458" height="2.6" fill="url(#c135)"/>
<rect x="1173" y="414" width="459" height="2.6" fill="url(#c136)"/>
<rect x="1173" y="416" width="461" height="2.6" fill="url(#c137)"/>
<rect x="1173" y="418" width="464" height="2.6" fill="url(#c138)"/>
<rect x="1174" y="420" width="465" height="2.6" fill="url(#c139)"/>
<rect x="1174" y="422" width="467" height="2.6" fill="url(#c140)"/>
<rect x="1174" y="424" width="470" height="2.6" fill="url(#c141)"/>
<rect x="1175" y="426" width="471" height="2.6" fill="url(#c142)"/>
<rect x="1175" y="428" width="473" height="2.6" fill="url(#c143)"/>
<rect x="1175" y="430" width="476" height="2.6" fill="url(#c144)"/>
<rect x="1175" y="432" width="478" height="2.6" fill="url(#c145)"/>
<rect x="1176" y="434" width="480" height="2.6" fill="url(#c146)"/>
<rect x="1176" y="436" width="482" height="2.6" fill="url(#c147)"/>
<rect x="1176" y="438" width="484" height="2.6" fill="url(#c148)"/>
<rect x="1177" y="440" width="486" height="2.6" fill="url(#c149)"/>
<rect x="1177" y="442" width="488" height="2.6" fill="url(#c150)"/>
<rect x="1177" y="444" width="490" height="2.6" fill="url(#c151)"/>
<rect x="1178" y="446" width="492" height="2.6" fill="url(#c152)"/>
<rect x="1178" y="448" width="494" height="2.6" fill="url(#c153)"/>
<rect x="1179" y="450" width="495" height="2.6" fill="url(#c154)"/>
<rect x="1179" y="452" width="498" height="2.6" fill="url(#c155)"/>
<rect x="1179" y="454" width="500" height="2.6" fill="url(#c156)"/>
<rect x="1180" y="456" width="502" height="2.6" fill="url(#c157)"/>
<rect x="1180" y="458" width="504" height="2.6" fill="url(#c158)"/>
<rect x="1180" y="460" width="506" height="2.6" fill="url(#c159)"/>
<rect x="1181" y="462" width="508" height="2.6" fill="url(#c160)"/>
<rect x="1181" y="464" width="510" height="2.6" fill="url(#c161)"/>
<rect x="1181" y="466" width="512" height="2.6" fill="url(#c162)"/>
<rect x="1182" y="468" width="514" height="2.6" fill="url(#c163)"/>
<rect x="1182" y="470" width="516" height="2.6" fill="url(#c164)"/>
<rect x="1183" y="472" width="517" height="2.6" fill="url(#c165)"/>
<rect x="1183" y="474" width="520" height="2.6" fill="url(#c166)"/>
<rect x="1183" y="476" width="522" height="2.6" fill="url(#c167)"/>
<rect x="1184" y="478" width="523" height="2.6" fill="url(#c168)"/>
<rect x="1184" y="480" width="526" height="2.6" fill="url(#c169)"/>
<rect x="1185" y="482" width="527" height="2.6" fill="url(#c170)"/>
<rect x="1185" y="484" width="530" height="2.6" fill="url(#c171)"/>
<rect x="1185" y="486" width="532" height="2.6" fill="url(#c172)"/>
<rect x="1186" y="488" width="533" height="2.6" fill="url(#c173)"/>
<rect x="1186" y="490" width="536" height="2.6" fill="url(#c174)"/>
<rect x="1187" y="492" width="537" height="2.6" fill="url(#c175)"/>
<rect x="1187" y="494" width="539" height="2.6" fill="url(#c176)"/>
<rect x="1187" y="496" width="542" height="2.6" fill="url(#c177)"/>
<rect x="1188" y="498" width="543" height="2.6" fill="url(#c178)"/>
<rect x="1188" y="500" width="545" height="2.6" fill="url(#c179)"/>
<rect x="1189" y="502" width="547" height="2.6" fill="url(#c180)"/>
<rect x="1189" y="504" width="549" height="2.6" fill="url(#c181)"/>
<rect x="1190" y="506" width="551" height="2.6" fill="url(#c182)"/>
<rect x="1190" y="508" width="553" height="2.6" fill="url(#c183)"/>
<rect x="1191" y="510" width="554" height="2.6" fill="url(#c184)"/>
<rect x="1191" y="512" width="557" height="2.6" fill="url(#c185)"/>
<rect x="1191" y="514" width="559" height="2.6" fill="url(#c186)"/>
<rect x="1192" y="516" width="560" height="2.6" fill="url(#c187)"/>
<rect x="1192" y="518" width="563" height="2.6" fill="url(#c188)"/>
<rect x="1193" y="520" width="564" height="2.6" fill="url(#c189)"/>
<rect x="1193" y="522" width="567" height="2.6" fill="url(#c190)"/>
<rect x="1194" y="524" width="568" height="2.6" fill="url(#c191)"/>
<rect x="1194" y="526" width="570" height="2.6" fill="url(#c192)"/>
<rect x="1195" y="528" width="572" height="2.6" fill="url(#c193)"/>
<rect x="1195" y="530" width="574" height="2.6" fill="url(#c194)"/>
<rect x="1196" y="532" width="575" height="2.6" fill="url(#c195)"/>
<rect x="1196" y="534" width="578" height="2.6" fill="url(#c196)"/>
<rect x="1197" y="536" width="579" height="2.6" fill="url(#c197)"/>
<rect x="1197" y="538" width="581" height="2.6" fill="url(#c198)"/>
<rect x="1198" y="540" width="583" height="2.6" fill="url(#c199)"/>
<rect x="1198" y="542" width="585" height="2.6" fill="url(#c200)"/>
<rect x="1199" y="544" width="586" height="2.6" fill="url(#c201)"/>
<rect x="1199" y="546" width="589" height="2.6" fill="url(#c202)"/>
<rect x="1200" y="548" width="590" height="2.6" fill="url(#c203)"/>
<rect x="1200" y="550" width="593" height="2.6" fill="url(#c204)"/>
<rect x="1201" y="552" width="594" height="2.6" fill="url(#c205)"/>
<rect x="1201" y="554" width="596" height="2.6" fill="url(#c206)"/>
<rect x="1202" y="556" width="598" height="2.6" fill="url(#c207)"/>
<rect x="1202" y="558" width="600" height="2.6" fill="url(#c208)"/>
<rect x="1203" y="560" width="601" height="2.6" fill="url(#c209)"/>
<rect x="1203" y="562" width="604" height="2.6" fill="url(#c210)"/>
<rect x="1204" y="564" width="605" height="2.6" fill="url(#c211)"/>
<rect x="1204" y="566" width="607" height="2.6" fill="url(#c212)"/>
<rect x="1205" y="568" width="609" height="2.6" fill="url(#c213)"/>
<rect x="1205" y="570" width="611" height="2.6" fill="url(#c214)"/>
<rect x="1206" y="572" width="605" height="2.6" fill="url(#c215)"/>
<rect x="1207" y="574" width="599" height="2.6" fill="url(#c216)"/>
<rect x="1207" y="576" width="594" height="2.6" fill="url(#c217)"/>
<rect x="1208" y="578" width="588" height="2.6" fill="url(#c218)"/>
<rect x="1208" y="580" width="583" height="2.6" fill="url(#c219)"/>
<rect x="1209" y="582" width="576" height="2.6" fill="url(#c220)"/>
<rect x="1209" y="584" width="571" height="2.6" fill="url(#c221)"/>
<rect x="1210" y="586" width="565" height="2.6" fill="url(#c222)"/>
<rect x="1211" y="588" width="559" height="2.6" fill="url(#c223)"/>
<rect x="1211" y="590" width="554" height="2.6" fill="url(#c224)"/>
<rect x="1212" y="592" width="548" height="2.6" fill="url(#c225)"/>
<rect x="1212" y="594" width="543" height="2.6" fill="url(#c226)"/>
<rect x="1213" y="596" width="537" height="2.6" fill="url(#c227)"/>
<rect x="1214" y="598" width="531" height="2.6" fill="url(#c228)"/>
<rect x="1214" y="600" width="526" height="2.6" fill="url(#c229)"/>
<rect x="1215" y="602" width="520" height="2.6" fill="url(#c230)"/>
<rect x="1215" y="604" width="515" height="2.6" fill="url(#c231)"/>
<rect x="1216" y="606" width="509" height="2.6" fill="url(#c232)"/>
<rect x="1217" y="608" width="503" height="2.6" fill="url(#c233)"/>
<rect x="1217" y="610" width="498" height="2.6" fill="url(#c234)"/>
<rect x="1218" y="612" width="491" height="2.6" fill="url(#c235)"/>
<rect x="1219" y="614" width="485" height="2.6" fill="url(#c236)"/>
<rect x="1219" y="616" width="480" height="2.6" fill="url(#c237)"/>
<rect x="1220" y="618" width="474" height="2.6" fill="url(#c238)"/>
<rect x="1221" y="620" width="468" height="2.6" fill="url(#c239)"/>
<rect x="1221" y="622" width="463" height="2.6" fill="url(#c240)"/>
<rect x="1222" y="624" width="457" height="2.6" fill="url(#c241)"/>
<rect x="1223" y="626" width="451" height="2.6" fill="url(#c242)"/>
<rect x="1223" y="628" width="446" height="2.6" fill="url(#c243)"/>
<rect x="1224" y="630" width="440" height="2.6" fill="url(#c244)"/>
<rect x="1225" y="632" width="434" height="2.6" fill="url(#c245)"/>
<rect x="1226" y="634" width="428" height="2.6" fill="url(#c246)"/>
<rect x="1226" y="636" width="423" height="2.6" fill="url(#c247)"/>
<rect x="1227" y="638" width="417" height="2.6" fill="url(#c248)"/>
<rect x="1228" y="640" width="411" height="2.6" fill="url(#c249)"/>
<rect x="1229" y="642" width="405" height="2.6" fill="url(#c250)"/>
<rect x="1229" y="644" width="399" height="2.6" fill="url(#c251)"/>
<rect x="1230" y="646" width="393" height="2.6" fill="url(#c252)"/>
<rect x="1231" y="648" width="387" height="2.6" fill="url(#c253)"/>
<rect x="1232" y="650" width="381" height="2.6" fill="url(#c254)"/>
<rect x="1233" y="652" width="375" height="2.6" fill="url(#c255)"/>
<rect x="1233" y="654" width="370" height="2.6" fill="url(#c256)"/>
<rect x="1234" y="656" width="364" height="2.6" fill="url(#c257)"/>
<rect x="1235" y="658" width="358" height="2.6" fill="url(#c258)"/>
<rect x="1236" y="660" width="352" height="2.6" fill="url(#c259)"/>
<rect x="1237" y="662" width="346" height="2.6" fill="url(#c260)"/>
<rect x="1238" y="664" width="340" height="2.6" fill="url(#c261)"/>
<rect x="1238" y="666" width="335" height="2.6" fill="url(#c262)"/>
<rect x="1239" y="668" width="329" height="2.6" fill="url(#c263)"/>
<rect x="1240" y="670" width="323" height="2.6" fill="url(#c264)"/>
<rect x="1241" y="672" width="317" height="2.6" fill="url(#c265)"/>
<rect x="1242" y="674" width="310" height="2.6" fill="url(#c266)"/>
<rect x="1243" y="676" width="304" height="2.6" fill="url(#c267)"/>
<rect x="1244" y="678" width="298" height="2.6" fill="url(#c268)"/>
<rect x="1245" y="680" width="292" height="2.6" fill="url(#c269)"/>
<rect x="1246" y="682" width="286" height="2.6" fill="url(#c270)"/>
<rect x="1246" y="684" width="281" height="2.6" fill="url(#c271)"/>
<rect x="1247" y="686" width="275" height="2.6" fill="url(#c272)"/>
<rect x="1248" y="688" width="269" height="2.6" fill="url(#c273)"/>
<rect x="1249" y="690" width="263" height="2.6" fill="url(#c274)"/>
<rect x="1250" y="692" width="257" height="2.6" fill="url(#c275)"/>
<rect x="1251" y="694" width="251" height="2.6" fill="url(#c276)"/>
<rect x="1252" y="696" width="245" height="2.6" fill="url(#c277)"/>
<rect x="1253" y="698" width="239" height="2.6" fill="url(#c278)"/>
<rect x="1254" y="700" width="233" height="2.6" fill="url(#c279)"/>
<rect x="1255" y="702" width="227" height="2.6" fill="url(#c280)"/>
<rect x="1256" y="704" width="221" height="2.6" fill="url(#c281)"/>
<rect x="1257" y="706" width="214" height="2.6" fill="url(#c282)"/>
<rect x="1258" y="708" width="208" height="2.6" fill="url(#c283)"/>
<rect x="1259" y="710" width="202" height="2.6" fill="url(#c284)"/>
<rect x="1260" y="712" width="196" height="2.6" fill="url(#c285)"/>
<rect x="1262" y="714" width="189" height="2.6" fill="url(#c286)"/>
<rect x="1263" y="716" width="183" height="2.6" fill="url(#c287)"/>
<rect x="1264" y="718" width="177" height="2.6" fill="url(#c288)"/>
<rect x="1265" y="720" width="171" height="2.6" fill="url(#c289)"/>
<rect x="1266" y="722" width="165" height="2.6" fill="url(#c290)"/>
<rect x="1268" y="724" width="158" height="2.6" fill="url(#c291)"/>
<rect x="1269" y="726" width="152" height="2.6" fill="url(#c292)"/>
<rect x="1270" y="728" width="146" height="2.6" fill="url(#c293)"/>
<rect x="1272" y="730" width="139" height="2.6" fill="url(#c294)"/>
<rect x="1273" y="732" width="133" height="2.6" fill="url(#c295)"/>
<rect x="1275" y="734" width="126" height="2.6" fill="url(#c296)"/>
<rect x="1276" y="736" width="119" height="2.6" fill="url(#c297)"/>
<rect x="1278" y="738" width="112" height="2.6" fill="url(#c298)"/>
<rect x="1279" y="740" width="106" height="2.6" fill="url(#c299)"/>
<rect x="1281" y="742" width="99" height="2.6" fill="url(#c300)"/>
<rect x="1283" y="744" width="92" height="2.6" fill="url(#c301)"/>
<rect x="1285" y="746" width="85" height="2.6" fill="url(#c302)"/>
<rect x="1287" y="748" width="78" height="2.6" fill="url(#c303)"/>
<rect x="1290" y="750" width="70" height="2.6" fill="url(#c304)"/>
<rect x="1292" y="752" width="63" height="2.6" fill="url(#c305)"/>
<rect x="1294" y="754" width="56" height="2.6" fill="url(#c306)"/>
<rect x="1297" y="756" width="48" height="2.6" fill="url(#c307)"/>
<rect x="1300" y="758" width="40" height="2.6" fill="url(#c308)"/>
<rect x="1303" y="760" width="32" height="2.6" fill="url(#c309)"/>
<rect x="1305" y="762" width="25" height="2.6" fill="url(#c310)"/>
<rect x="1308" y="764" width="17" height="2.6" fill="url(#c311)"/>
<rect x="1311" y="766" width="8" height="2.6" fill="url(#c312)"/>
</g>
<path d="M1316.2 767.3 L1316.2 767.3 L1316.1 767.3 L1316.1 767.3 L1316.1 767.3 L1316.1 767.3 L1316.0 767.3 L1316.0 767.4 L1316.0 767.4 L1315.9 767.4 L1315.9 767.4 L1315.9 767.4 L1315.8 767.4 L1315.8 767.4 L1315.8 767.4 L1315.7 767.4 L1315.7 767.4 L1315.6 767.4 L1315.6 767.4 L1315.5 767.5 L1315.5 767.5 L1315.4 767.5 L1315.3 767.5 L1315.3 767.5 L1315.2 767.5 L1315.2 767.5 L1315.1 767.5 L1315.1 767.5 L1315.0 767.5 L1314.9 767.5 L1314.8 767.5 L1314.7 767.5 L1314.7 767.5 L1314.6 767.5 L1314.5 767.5 L1314.4 767.5 L1314.3 767.5 L1314.2 767.4 L1314.1 767.4 L1313.9 767.3 L1313.8 767.3 L1313.6 767.2 L1313.4 767.1 L1313.2 767.0 L1313.0 766.9 L1312.8 766.7 L1312.6 766.6 L1312.3 766.4 L1312.1 766.3 L1311.8 766.1 L1311.5 765.9 L1311.2 765.7 L1310.9 765.4 L1310.5 765.2 L1310.2 764.9 L1309.8 764.6 L1309.4 764.3 L1308.9 764.0 L1308.5 763.6 L1308.0 763.3 L1307.6 762.9 L1307.0 762.5 L1306.5 762.1 L1305.9 761.6 L1305.3 761.2 L1304.6 760.7 L1303.9 760.2 L1303.2 759.6 L1302.4 759.0 L1301.5 758.4 L1300.6 757.7 L1299.7 757.1 L1298.8 756.4 L1297.8 755.6 L1296.8 754.8 L1295.7 754.0 L1294.5 753.1 L1293.3 752.1 L1292.1 751.0 L1290.8 749.9 L1289.5 748.7 L1288.1 747.4 L1286.7 746.1 L1285.2 744.6 L1283.6 742.9 L1281.9 741.0 L1280.1 738.8 L1278.2 736.4 L1276.2 733.7 L1274.0 730.8 L1271.8 727.5 L1269.5 723.9 L1267.0 720.0 L1264.4 715.6 L1261.7 710.9 L1258.9 705.6 L1256.0 699.8 L1252.9 693.5 L1249.7 686.6 L1246.3 679.1 L1242.7 671.0 L1238.9 662.2 L1235.0 652.7 L1230.9 642.4 L1226.8 631.5 L1222.7 619.7 L1218.5 607.1 L1214.4 593.6 L1210.2 579.4 L1206.1 564.4 L1202.0 548.5 L1197.9 531.9 L1193.8 514.6 L1189.9 496.7 L1186.1 478.4 L1182.5 459.7 L1179.2 440.8 L1176.2 421.7 L1173.4 402.6 L1171.0 383.6 L1169.0 364.9 L1167.3 346.4 L1166.1 328.4 L1165.3 310.7 L1165.0 293.6 L1165.2 277.1 L1165.9 261.1 L1167.1 245.8 L1168.8 231.4 L1171.2 217.7 L1174.0 205.1 L1177.5 193.4 L1181.5 182.9 L1185.9 173.5 L1190.9 165.4 L1196.2 158.4 L1201.9 152.8 L1208.0 148.5 L1214.3 145.3 L1220.9 143.1 L1227.6 142.0 L1234.5 141.8 L1241.5 142.4 L1248.6 143.6 L1255.8 145.5 L1263.0 147.7 L1270.3 150.3 L1277.5 153.2 L1284.7 156.3 L1291.9 159.6 L1298.9 163.0 L1305.9 166.5 L1312.8 170.1 L1319.5 173.8 L1326.2 177.5 L1332.8 181.4 L1339.4 185.3 L1346.0 189.4 L1352.5 193.5 L1358.9 197.7 L1365.4 202.0 L1371.9 206.4 L1378.3 210.8 L1384.7 215.3 L1391.1 220.0 L1397.5 224.6 L1403.9 229.3 L1410.3 234.1 L1416.6 239.0 L1422.9 243.8 L1429.3 248.8 L1435.6 253.7 L1441.9 258.7 L1448.3 263.8 L1454.6 268.8 L1461.0 274.0 L1467.3 279.1 L1473.7 284.3 L1480.0 289.5 L1486.4 294.7 L1492.7 299.9 L1499.0 305.2 L1505.4 310.4 L1511.7 315.7 L1518.0 321.0 L1524.3 326.2 L1530.6 331.5 L1536.9 336.8 L1543.2 342.1 L1549.5 347.3 L1555.7 352.6 L1561.9 357.8 L1568.1 363.0 L1574.3 368.3 L1580.4 373.4 L1586.5 378.6 L1592.6 383.7 L1598.6 388.9 L1604.6 393.9 L1610.5 399.0 L1616.4 404.0 L1622.2 408.9 L1628.0 413.8 L1633.8 418.7 L1639.4 423.5 L1645.0 428.3 L1650.6 432.9 L1656.1 437.6 L1661.5 442.1 L1666.8 446.6 L1672.0 451.0 L1677.2 455.4 L1682.2 459.7 L1687.1 463.9 L1691.9 468.0 L1696.6 471.9 L1701.1 475.8 L1705.5 479.5 L1709.8 483.1 L1713.9 486.6 L1718.0 490.0 L1721.9 493.4 L1725.8 496.7 L1729.6 499.9 L1733.3 503.0 L1736.8 506.0 L1740.2 508.8 L1743.4 511.5 L1746.5 514.2 L1749.5 516.7 L1752.4 519.1 L1755.2 521.4 L1757.8 523.7 L1760.3 525.8 L1762.8 527.9 L1765.1 529.9 L1767.3 531.8 L1769.4 533.6 L1771.4 535.3 L1773.4 536.9 L1775.2 538.5 L1777.0 540.0 L1778.6 541.4 L1780.3 542.7 L1781.8 544.0 L1783.3 545.3 L1784.7 546.5 L1786.0 547.6 L1787.3 548.7 L1788.6 549.8 L1789.7 550.8 L1790.9 551.8 L1792.0 552.7 L1793.1 553.6 L1794.2 554.5 L1795.2 555.4 L1796.1 556.2 L1797.0 557.0 L1797.9 557.8 L1798.8 558.5 L1799.6 559.2 L1800.4 559.8 L1801.1 560.4 L1801.8 561.0 L1802.5 561.6 L1803.1 562.1 L1803.7 562.6 L1804.3 563.1 L1804.8 563.5 L1805.3 564.0 L1805.8 564.4 L1806.3 564.8 L1806.7 565.1 L1807.1 565.5 L1807.5 565.8 L1807.8 566.1 L1808.2 566.4 L1808.5 566.7 L1808.8 566.9 L1809.1 567.2 L1809.4 567.4 L1809.6 567.6 L1809.8 567.8 L1810.0 567.9 L1810.2 568.1 L1810.3 568.2 L1810.5 568.4 L1810.7 568.5 L1810.8 568.6 L1811.0 568.8 L1811.1 568.9 L1811.3 569.0 L1811.4 569.1 L1811.5 569.2 L1811.6 569.3 L1811.8 569.4 L1811.9 569.5 L1812.0 569.6 L1812.1 569.7 L1812.3 569.8 L1812.4 570.0 L1812.5 570.1 L1812.6 570.1 L1812.7 570.2 L1812.8 570.3 L1812.9 570.4 L1813.0 570.5 L1813.1 570.5 L1813.1 570.6 L1813.2 570.7 L1813.3 570.7 L1813.3 570.7 L1813.3 570.8 L1813.4 570.8 L1813.4 570.8 L1813.4 570.9 L1813.5 570.9 L1813.5 570.9 L1813.5 570.9 L1813.5 570.9 L1813.5 570.9 Z M1765.0 529.7 L1396.8 250.5 L1294.8 725.8 Z" fill="#000" fill-opacity=".4" fill-rule="evenodd"/>
<line x1="1161" y1="138" x2="1907.5" y2="138" stroke="#a8a8a8" stroke-width="1.6" />
<line x1="1906.5" y1="138" x2="1906.5" y2="770.4" stroke="#a8a8a8" stroke-width="1.6" />
<line x1="1162" y1="137" x2="1162" y2="778.4" stroke="#a8a8a8" stroke-width="2" />
<line x1="1155" y1="770.4" x2="1907.5" y2="770.4" stroke="#a8a8a8" stroke-width="2" />
<text x="1157.2" y="798.2" font-size="17.8" fill="#e4e4e4" textLength="8.8" lengthAdjust="spacingAndGlyphs" >0</text>
<text x="1145.6" y="779.6" font-size="17.8" fill="#e4e4e4" textLength="8.8" lengthAdjust="spacingAndGlyphs" >0</text>
<line x1="1250.64" y1="770.4" x2="1250.64" y2="778.4" stroke="#e0e0e0" stroke-width="1.6" />
<text x="1239.04" y="798.2" font-size="17.8" fill="#e4e4e4" textLength="22.4" lengthAdjust="spacingAndGlyphs" >0,1</text>
<line x1="1155" y1="695.325" x2="1162" y2="695.325" stroke="#e0e0e0" stroke-width="1.6" />
<text x="1132" y="702.725" font-size="17.8" fill="#e4e4e4" textLength="22.4" lengthAdjust="spacingAndGlyphs" >0,1</text>
<line x1="1339.28" y1="770.4" x2="1339.28" y2="778.4" stroke="#e0e0e0" stroke-width="1.6" />
<text x="1327.68" y="798.2" font-size="17.8" fill="#e4e4e4" textLength="22.4" lengthAdjust="spacingAndGlyphs" >0,2</text>
<line x1="1155" y1="620.25" x2="1162" y2="620.25" stroke="#e0e0e0" stroke-width="1.6" />
<text x="1132" y="627.65" font-size="17.8" fill="#e4e4e4" textLength="22.4" lengthAdjust="spacingAndGlyphs" >0,2</text>
<line x1="1427.92" y1="770.4" x2="1427.92" y2="778.4" stroke="#e0e0e0" stroke-width="1.6" />
<text x="1416.32" y="798.2" font-size="17.8" fill="#e4e4e4" textLength="22.4" lengthAdjust="spacingAndGlyphs" >0,3</text>
<line x1="1155" y1="545.175" x2="1162" y2="545.175" stroke="#e0e0e0" stroke-width="1.6" />
<text x="1132" y="552.575" font-size="17.8" fill="#e4e4e4" textLength="22.4" lengthAdjust="spacingAndGlyphs" >0,3</text>
<line x1="1516.56" y1="770.4" x2="1516.56" y2="778.4" stroke="#e0e0e0" stroke-width="1.6" />
<text x="1504.96" y="798.2" font-size="17.8" fill="#e4e4e4" textLength="22.4" lengthAdjust="spacingAndGlyphs" >0,4</text>
<line x1="1155" y1="470.1" x2="1162" y2="470.1" stroke="#e0e0e0" stroke-width="1.6" />
<text x="1132" y="477.5" font-size="17.8" fill="#e4e4e4" textLength="22.4" lengthAdjust="spacingAndGlyphs" >0,4</text>
<line x1="1605.2" y1="770.4" x2="1605.2" y2="778.4" stroke="#e0e0e0" stroke-width="1.6" />
<text x="1593.6" y="798.2" font-size="17.8" fill="#e4e4e4" textLength="22.4" lengthAdjust="spacingAndGlyphs" >0,5</text>
<line x1="1155" y1="395.025" x2="1162" y2="395.025" stroke="#e0e0e0" stroke-width="1.6" />
<text x="1132" y="402.425" font-size="17.8" fill="#e4e4e4" textLength="22.4" lengthAdjust="spacingAndGlyphs" >0,5</text>
<line x1="1693.84" y1="770.4" x2="1693.84" y2="778.4" stroke="#e0e0e0" stroke-width="1.6" />
<text x="1682.24" y="798.2" font-size="17.8" fill="#e4e4e4" textLength="22.4" lengthAdjust="spacingAndGlyphs" >0,6</text>
<line x1="1155" y1="319.95" x2="1162" y2="319.95" stroke="#e0e0e0" stroke-width="1.6" />
<text x="1132" y="327.35" font-size="17.8" fill="#e4e4e4" textLength="22.4" lengthAdjust="spacingAndGlyphs" >0,6</text>
<line x1="1782.48" y1="770.4" x2="1782.48" y2="778.4" stroke="#e0e0e0" stroke-width="1.6" />
<text x="1770.88" y="798.2" font-size="17.8" fill="#e4e4e4" textLength="22.4" lengthAdjust="spacingAndGlyphs" >0,7</text>
<line x1="1155" y1="244.875" x2="1162" y2="244.875" stroke="#e0e0e0" stroke-width="1.6" />
<text x="1132" y="252.275" font-size="17.8" fill="#e4e4e4" textLength="22.4" lengthAdjust="spacingAndGlyphs" >0,7</text>
<line x1="1871.12" y1="770.4" x2="1871.12" y2="778.4" stroke="#e0e0e0" stroke-width="1.6" />
<text x="1859.52" y="798.2" font-size="17.8" fill="#e4e4e4" textLength="22.4" lengthAdjust="spacingAndGlyphs" >0,8</text>
<line x1="1155" y1="169.8" x2="1162" y2="169.8" stroke="#e0e0e0" stroke-width="1.6" />
<text x="1132" y="177.2" font-size="17.8" fill="#e4e4e4" textLength="22.4" lengthAdjust="spacingAndGlyphs" >0,8</text>
<rect x="1495.5" y="514.4" width="14.9" height="16.7" fill="none" stroke="#fff" stroke-width="1.9"/>
<rect x="1557.1" y="516.4" width="14.9" height="16.7" fill="none" stroke="#fff" stroke-width="1.9"/>
<rect x="1624.1" y="518.1" width="14.9" height="16.7" fill="none" stroke="#fff" stroke-width="1.9"/>
<rect x="1683.3" y="519.5" width="14.9" height="16.7" fill="none" stroke="#fff" stroke-width="1.9"/>
<rect x="1757.0" y="519.6" width="14.9" height="16.7" fill="none" stroke="#fff" stroke-width="1.9"/>
<rect x="1421.8" y="458.5" width="14.9" height="16.7" fill="none" stroke="#fff" stroke-width="1.9"/>
<rect x="1414.1" y="403.4" width="14.9" height="16.7" fill="none" stroke="#fff" stroke-width="1.9"/>
<rect x="1406.8" y="351.8" width="14.9" height="16.7" fill="none" stroke="#fff" stroke-width="1.9"/>
<rect x="1397.0" y="301.1" width="14.9" height="16.7" fill="none" stroke="#fff" stroke-width="1.9"/>
<rect x="1389.5" y="241.6" width="14.9" height="16.7" fill="none" stroke="#fff" stroke-width="1.9"/>
<rect x="1402.0" y="552.8" width="14.9" height="16.7" fill="none" stroke="#fff" stroke-width="1.9"/>
<rect x="1374.0" y="595.0" width="14.9" height="16.7" fill="none" stroke="#fff" stroke-width="1.9"/>
<rect x="1345.6" y="633.0" width="14.9" height="16.7" fill="none" stroke="#fff" stroke-width="1.9"/>
<rect x="1317.1" y="673.5" width="14.9" height="16.7" fill="none" stroke="#fff" stroke-width="1.9"/>
<rect x="1285.8" y="714.9" width="14.9" height="16.7" fill="none" stroke="#fff" stroke-width="1.9"/>
<rect x="1411.1" y="511.4" width="14.9" height="16.7" fill="none" stroke="#fff" stroke-width="1.9"/>
<rect x="1390.8" y="511.4" width="14.9" height="16.7" fill="none" stroke="#fff" stroke-width="1.9"/>
<rect x="1370.5" y="511.4" width="14.9" height="16.7" fill="none" stroke="#fff" stroke-width="1.9"/>
<rect x="1351.3" y="511.4" width="14.9" height="16.7" fill="none" stroke="#fff" stroke-width="1.9"/>
<rect x="1331.1" y="511.2" width="14.9" height="16.7" fill="none" stroke="#fff" stroke-width="1.9"/>
<rect x="1434.5" y="540.0" width="14.9" height="16.7" fill="none" stroke="#fff" stroke-width="1.9"/>
<rect x="1439.5" y="566.6" width="14.9" height="16.7" fill="none" stroke="#fff" stroke-width="1.9"/>
<rect x="1443.8" y="592.9" width="14.9" height="16.7" fill="none" stroke="#fff" stroke-width="1.9"/>
<rect x="1447.2" y="619.1" width="14.9" height="16.7" fill="none" stroke="#fff" stroke-width="1.9"/>
<rect x="1451.8" y="647.5" width="14.9" height="16.7" fill="none" stroke="#fff" stroke-width="1.9"/>
<rect x="1454.7" y="480.8" width="14.9" height="16.7" fill="none" stroke="#fff" stroke-width="1.9"/>
<rect x="1475.4" y="451.8" width="14.9" height="16.7" fill="none" stroke="#fff" stroke-width="1.9"/>
<rect x="1497.1" y="421.3" width="14.9" height="16.7" fill="none" stroke="#fff" stroke-width="1.9"/>
<rect x="1519.2" y="390.4" width="14.9" height="16.7" fill="none" stroke="#fff" stroke-width="1.9"/>
<rect x="1542.6" y="357.5" width="14.9" height="16.7" fill="none" stroke="#fff" stroke-width="1.9"/>
<rect x="1431.5" y="513.9" width="14.9" height="16.7" fill="none" stroke="#000" stroke-width="2.2"/>
<circle cx="1468.7" cy="522.6" r="4.6" fill="#be7878" stroke="#000" stroke-width="1.5"/>
<circle cx="1528.0" cy="517.6" r="4.6" fill="#b95a5a" stroke="#000" stroke-width="1.5"/>
<circle cx="1595.5" cy="515.8" r="4.6" fill="#be4b4b" stroke="#000" stroke-width="1.5"/>
<circle cx="1661.0" cy="512.0" r="4.6" fill="#b93c3c" stroke="#000" stroke-width="1.5"/>
<circle cx="1745.2" cy="528.0" r="4.6" fill="#be1414" stroke="#000" stroke-width="1.5"/>
<circle cx="1413.5" cy="475.4" r="4.6" fill="#96af8c" stroke="#000" stroke-width="1.5"/>
<circle cx="1406.2" cy="400.4" r="4.6" fill="#82b478" stroke="#000" stroke-width="1.5"/>
<circle cx="1400.3" cy="340.8" r="4.6" fill="#6eb964" stroke="#000" stroke-width="1.5"/>
<circle cx="1395.2" cy="297.0" r="4.6" fill="#5ab950" stroke="#000" stroke-width="1.5"/>
<circle cx="1390.3" cy="283.2" r="4.6" fill="#14a014" stroke="#000" stroke-width="1.5"/>
<circle cx="1395.2" cy="566.5" r="4.6" fill="#a0a0b9" stroke="#000" stroke-width="1.5"/>
<circle cx="1369.8" cy="608.4" r="4.6" fill="#8c8cc3" stroke="#000" stroke-width="1.5"/>
<circle cx="1345.4" cy="648.6" r="4.6" fill="#7878c8" stroke="#000" stroke-width="1.5"/>
<circle cx="1321.5" cy="687.0" r="4.6" fill="#5a5ac8" stroke="#000" stroke-width="1.5"/>
<circle cx="1296.5" cy="728.9" r="4.6" fill="#0a0ac8" stroke="#000" stroke-width="1.5"/>
<circle cx="1402.8" cy="529.7" r="4.6" fill="#a0b9b4" stroke="#000" stroke-width="1.5"/>
<circle cx="1385.5" cy="528.1" r="4.6" fill="#8cb9b9" stroke="#000" stroke-width="1.5"/>
<circle cx="1369.9" cy="528.1" r="4.6" fill="#6eb9b9" stroke="#000" stroke-width="1.5"/>
<circle cx="1354.3" cy="528.1" r="4.6" fill="#50b9b9" stroke="#000" stroke-width="1.5"/>
<circle cx="1338.1" cy="526.1" r="4.6" fill="#00afaf" stroke="#000" stroke-width="1.5"/>
<circle cx="1420.4" cy="554.4" r="4.6" fill="#bea0b9" stroke="#000" stroke-width="1.5"/>
<circle cx="1423.1" cy="580.5" r="4.6" fill="#be8cb9" stroke="#000" stroke-width="1.5"/>
<circle cx="1426.4" cy="611.8" r="4.6" fill="#c378be" stroke="#000" stroke-width="1.5"/>
<circle cx="1429.7" cy="639.7" r="4.6" fill="#c364be" stroke="#000" stroke-width="1.5"/>
<circle cx="1431.5" cy="671.4" r="4.6" fill="#c814be" stroke="#000" stroke-width="1.5"/>
<circle cx="1436.6" cy="500.3" r="4.6" fill="#b9b996" stroke="#000" stroke-width="1.5"/>
<circle cx="1454.8" cy="472.1" r="4.6" fill="#b9b982" stroke="#000" stroke-width="1.5"/>
<circle cx="1476.1" cy="439.5" r="4.6" fill="#bebe64" stroke="#000" stroke-width="1.5"/>
<circle cx="1497.8" cy="406.8" r="4.6" fill="#beb950" stroke="#000" stroke-width="1.5"/>
<circle cx="1524.2" cy="372.9" r="4.6" fill="#c3be14" stroke="#000" stroke-width="1.5"/>
<circle cx="1418.6" cy="528.1" r="4.6" fill="#ffffff" stroke="#000" stroke-width="1.5"/>
<rect x="1644.6" y="143.6" width="258.8" height="244.4" fill="#3e3e3e" />
<rect x="1647.2" y="146.2" width="253.6" height="239.2" fill="#a4a4a4" />
<rect x="1649" y="148" width="250" height="235.6" fill="#242424" />
<g clip-path="url(#insclip)"><g clip-path="url(#insloc)">
<rect x="1648" y="148" width="252" height="3.6" fill="url(#i0)"/>
<rect x="1648" y="151" width="252" height="3.6" fill="url(#i1)"/>
<rect x="1648" y="154" width="252" height="3.6" fill="url(#i2)"/>
<rect x="1648" y="157" width="252" height="3.6" fill="url(#i3)"/>
<rect x="1648" y="160" width="252" height="3.6" fill="url(#i4)"/>
<rect x="1648" y="163" width="252" height="3.6" fill="url(#i5)"/>
<rect x="1648" y="166" width="252" height="3.6" fill="url(#i6)"/>
<rect x="1648" y="169" width="252" height="3.6" fill="url(#i7)"/>
<rect x="1648" y="172" width="252" height="3.6" fill="url(#i8)"/>
<rect x="1648" y="175" width="252" height="3.6" fill="url(#i9)"/>
<rect x="1648" y="178" width="252" height="3.6" fill="url(#i10)"/>
<rect x="1648" y="181" width="252" height="3.6" fill="url(#i11)"/>
<rect x="1648" y="184" width="252" height="3.6" fill="url(#i12)"/>
<rect x="1648" y="187" width="252" height="3.6" fill="url(#i13)"/>
<rect x="1648" y="190" width="252" height="3.6" fill="url(#i14)"/>
<rect x="1648" y="193" width="252" height="3.6" fill="url(#i15)"/>
<rect x="1648" y="196" width="252" height="3.6" fill="url(#i16)"/>
<rect x="1648" y="199" width="252" height="3.6" fill="url(#i17)"/>
<rect x="1648" y="202" width="252" height="3.6" fill="url(#i18)"/>
<rect x="1648" y="205" width="252" height="3.6" fill="url(#i19)"/>
<rect x="1648" y="208" width="252" height="3.6" fill="url(#i20)"/>
<rect x="1648" y="211" width="252" height="3.6" fill="url(#i21)"/>
<rect x="1648" y="214" width="252" height="3.6" fill="url(#i22)"/>
<rect x="1648" y="217" width="252" height="3.6" fill="url(#i23)"/>
<rect x="1648" y="220" width="252" height="3.6" fill="url(#i24)"/>
<rect x="1648" y="223" width="252" height="3.6" fill="url(#i25)"/>
<rect x="1648" y="226" width="252" height="3.6" fill="url(#i26)"/>
<rect x="1648" y="229" width="252" height="3.6" fill="url(#i27)"/>
<rect x="1648" y="232" width="252" height="3.6" fill="url(#i28)"/>
<rect x="1648" y="235" width="252" height="3.6" fill="url(#i29)"/>
<rect x="1648" y="238" width="252" height="3.6" fill="url(#i30)"/>
<rect x="1648" y="241" width="252" height="3.6" fill="url(#i31)"/>
<rect x="1648" y="244" width="252" height="3.6" fill="url(#i32)"/>
<rect x="1648" y="247" width="252" height="3.6" fill="url(#i33)"/>
<rect x="1648" y="250" width="252" height="3.6" fill="url(#i34)"/>
<rect x="1648" y="253" width="252" height="3.6" fill="url(#i35)"/>
<rect x="1648" y="256" width="252" height="3.6" fill="url(#i36)"/>
<rect x="1648" y="259" width="252" height="3.6" fill="url(#i37)"/>
<rect x="1648" y="262" width="252" height="3.6" fill="url(#i38)"/>
<rect x="1648" y="265" width="252" height="3.6" fill="url(#i39)"/>
<rect x="1648" y="268" width="252" height="3.6" fill="url(#i40)"/>
<rect x="1648" y="271" width="252" height="3.6" fill="url(#i41)"/>
<rect x="1648" y="274" width="252" height="3.6" fill="url(#i42)"/>
<rect x="1648" y="277" width="252" height="3.6" fill="url(#i43)"/>
<rect x="1648" y="280" width="252" height="3.6" fill="url(#i44)"/>
<rect x="1648" y="283" width="252" height="3.6" fill="url(#i45)"/>
<rect x="1648" y="286" width="252" height="3.6" fill="url(#i46)"/>
<rect x="1648" y="289" width="252" height="3.6" fill="url(#i47)"/>
<rect x="1648" y="292" width="252" height="3.6" fill="url(#i48)"/>
<rect x="1648" y="295" width="252" height="3.6" fill="url(#i49)"/>
<rect x="1648" y="298" width="252" height="3.6" fill="url(#i50)"/>
<rect x="1648" y="301" width="252" height="3.6" fill="url(#i51)"/>
<rect x="1648" y="304" width="252" height="3.6" fill="url(#i52)"/>
<rect x="1648" y="307" width="252" height="3.6" fill="url(#i53)"/>
<rect x="1648" y="310" width="252" height="3.6" fill="url(#i54)"/>
<rect x="1648" y="313" width="252" height="3.6" fill="url(#i55)"/>
<rect x="1648" y="316" width="252" height="3.6" fill="url(#i56)"/>
<rect x="1648" y="319" width="252" height="3.6" fill="url(#i57)"/>
<rect x="1648" y="322" width="252" height="3.6" fill="url(#i58)"/>
<rect x="1648" y="325" width="252" height="3.6" fill="url(#i59)"/>
<rect x="1648" y="328" width="252" height="3.6" fill="url(#i60)"/>
<rect x="1648" y="331" width="252" height="3.6" fill="url(#i61)"/>
<rect x="1648" y="334" width="252" height="3.6" fill="url(#i62)"/>
<rect x="1648" y="337" width="252" height="3.6" fill="url(#i63)"/>
<rect x="1648" y="340" width="252" height="3.6" fill="url(#i64)"/>
<rect x="1648" y="343" width="252" height="3.6" fill="url(#i65)"/>
<rect x="1648" y="346" width="252" height="3.6" fill="url(#i66)"/>
<rect x="1648" y="349" width="252" height="3.6" fill="url(#i67)"/>
<rect x="1648" y="352" width="252" height="3.6" fill="url(#i68)"/>
<rect x="1648" y="355" width="252" height="3.6" fill="url(#i69)"/>
<rect x="1648" y="358" width="252" height="3.6" fill="url(#i70)"/>
<rect x="1648" y="361" width="252" height="3.6" fill="url(#i71)"/>
<rect x="1648" y="364" width="252" height="3.6" fill="url(#i72)"/>
<rect x="1648" y="367" width="252" height="3.6" fill="url(#i73)"/>
<rect x="1648" y="370" width="252" height="3.6" fill="url(#i74)"/>
<rect x="1648" y="373" width="252" height="3.6" fill="url(#i75)"/>
<rect x="1648" y="376" width="252" height="3.6" fill="url(#i76)"/>
<rect x="1648" y="379" width="252" height="3.6" fill="url(#i77)"/>
<rect x="1648" y="382" width="252" height="2.2" fill="url(#i78)"/>
</g>
<path d="M832.1 2052.7 L832.1 2052.6 L832.0 2052.5 L831.9 2052.6 L831.8 2052.6 L831.7 2052.7 L831.6 2052.7 L831.4 2052.8 L831.3 2052.9 L831.1 2053.0 L831.0 2053.0 L830.9 2053.0 L830.7 2053.0 L830.6 2053.0 L830.5 2053.0 L830.3 2053.0 L830.1 2053.0 L829.9 2053.1 L829.7 2053.2 L829.4 2053.3 L829.2 2053.3 L829.0 2053.4 L828.8 2053.4 L828.6 2053.4 L828.4 2053.4 L828.1 2053.3 L827.9 2053.3 L827.6 2053.3 L827.3 2053.3 L827.0 2053.3 L826.7 2053.3 L826.4 2053.4 L826.0 2053.4 L825.7 2053.4 L825.3 2053.4 L824.9 2053.3 L824.5 2053.2 L824.1 2053.1 L823.6 2052.9 L823.0 2052.6 L822.4 2052.3 L821.7 2052.0 L821.0 2051.5 L820.2 2051.1 L819.4 2050.5 L818.5 2050.0 L817.6 2049.4 L816.7 2048.7 L815.7 2048.0 L814.6 2047.1 L813.5 2046.3 L812.2 2045.3 L810.9 2044.2 L809.5 2043.1 L807.9 2041.9 L806.4 2040.5 L804.7 2039.1 L803.0 2037.7 L801.2 2036.1 L799.4 2034.5 L797.4 2032.8 L795.4 2031.1 L793.2 2029.2 L790.8 2027.3 L788.3 2025.2 L785.6 2023.0 L782.8 2020.7 L779.7 2018.2 L776.5 2015.6 L773.1 2012.8 L769.6 2009.9 L765.9 2006.9 L762.1 2003.8 L758.1 2000.5 L754.0 1996.9 L749.6 1993.1 L745.0 1989.0 L740.1 1984.6 L735.1 1979.8 L729.9 1974.8 L724.6 1969.5 L719.1 1963.9 L713.3 1957.8 L707.3 1951.2 L701.0 1943.7 L694.2 1935.2 L687.0 1925.6 L679.3 1914.8 L671.1 1902.8 L662.5 1889.6 L653.5 1875.0 L644.0 1858.9 L634.2 1841.4 L623.8 1822.0 L613.0 1800.8 L601.7 1777.3 L589.9 1751.6 L577.5 1723.4 L564.5 1692.6 L550.8 1659.2 L536.4 1622.9 L521.1 1583.6 L505.3 1541.2 L489.0 1495.6 L472.4 1446.6 L455.6 1394.0 L438.9 1337.8 L422.2 1277.9 L405.6 1214.4 L389.0 1147.3 L372.4 1076.6 L355.9 1002.5 L339.7 925.3 L323.8 845.6 L308.6 763.8 L294.2 680.5 L280.8 596.0 L268.5 510.9 L257.5 425.8 L247.8 341.1 L239.6 257.4 L232.9 175.1 L228.0 94.5 L224.8 15.9 L223.5 -60.5 L224.2 -134.4 L227.0 -205.6 L231.9 -273.6 L239.0 -338.2 L248.3 -399.0 L259.9 -455.5 L273.8 -507.3 L289.8 -554.3 L307.8 -596.2 L327.7 -632.6 L349.2 -663.5 L372.2 -688.5 L396.6 -708.0 L422.1 -722.3 L448.5 -731.8 L475.6 -736.8 L503.4 -737.8 L531.6 -735.2 L560.2 -729.6 L589.1 -721.4 L618.1 -711.3 L647.3 -699.6 L676.5 -686.7 L705.5 -672.8 L734.3 -658.2 L762.8 -642.9 L790.8 -627.3 L818.4 -611.4 L845.6 -595.0 L872.5 -578.3 L899.2 -561.2 L925.7 -543.6 L952.0 -525.6 L978.2 -507.2 L1004.3 -488.4 L1030.3 -469.3 L1056.2 -449.7 L1082.2 -429.8 L1108.0 -409.6 L1133.8 -389.1 L1159.6 -368.3 L1185.2 -347.2 L1210.8 -325.9 L1236.4 -304.3 L1261.9 -282.6 L1287.4 -260.6 L1312.9 -238.4 L1338.4 -216.1 L1363.9 -193.6 L1389.4 -171.0 L1414.9 -148.2 L1440.5 -125.2 L1466.1 -102.2 L1491.7 -79.0 L1517.2 -55.7 L1542.8 -32.4 L1568.3 -9.0 L1593.7 14.5 L1619.1 38.0 L1644.5 61.5 L1669.9 85.1 L1695.3 108.6 L1720.7 132.1 L1746.0 155.6 L1771.2 179.1 L1796.4 202.5 L1821.4 225.9 L1846.3 249.2 L1871.1 272.5 L1895.8 295.6 L1920.3 318.6 L1944.7 341.6 L1968.9 364.3 L1993.0 387.0 L2016.9 409.4 L2040.6 431.7 L2064.2 453.9 L2087.5 475.8 L2110.6 497.5 L2133.4 518.9 L2156.0 540.1 L2178.3 561.0 L2200.4 581.6 L2222.1 602.0 L2243.5 622.0 L2264.6 641.8 L2285.3 661.2 L2305.6 680.3 L2325.4 699.1 L2344.7 717.3 L2363.5 735.0 L2381.7 752.1 L2399.3 768.7 L2416.5 784.8 L2433.2 800.4 L2449.6 815.8 L2465.6 830.8 L2481.2 845.4 L2496.4 859.7 L2511.1 873.5 L2525.3 886.8 L2538.9 899.5 L2552.0 911.7 L2564.5 923.3 L2576.6 934.5 L2588.1 945.3 L2599.2 955.7 L2609.9 965.8 L2620.1 975.4 L2629.9 984.6 L2639.2 993.5 L2648.1 1001.9 L2656.6 1009.9 L2664.7 1017.6 L2672.5 1024.9 L2679.9 1031.8 L2687.0 1038.5 L2693.8 1044.8 L2700.3 1050.8 L2706.5 1056.6 L2712.4 1062.1 L2718.1 1067.4 L2723.5 1072.5 L2728.7 1077.4 L2733.7 1082.1 L2738.5 1086.7 L2743.2 1091.1 L2747.7 1095.4 L2752.0 1099.5 L2756.2 1103.4 L2760.3 1107.2 L2764.2 1110.9 L2767.9 1114.4 L2771.4 1117.8 L2774.9 1121.0 L2778.1 1124.1 L2781.3 1127.0 L2784.3 1129.7 L2787.2 1132.3 L2789.9 1134.8 L2792.4 1137.2 L2794.8 1139.4 L2797.1 1141.5 L2799.2 1143.6 L2801.2 1145.5 L2803.1 1147.3 L2805.0 1149.0 L2806.7 1150.6 L2808.3 1152.2 L2809.9 1153.6 L2811.4 1155.0 L2812.8 1156.3 L2814.1 1157.6 L2815.3 1158.7 L2816.4 1159.8 L2817.4 1160.7 L2818.3 1161.6 L2819.2 1162.4 L2819.9 1163.1 L2820.7 1163.8 L2821.4 1164.4 L2822.0 1165.1 L2822.7 1165.7 L2823.4 1166.3 L2824.0 1166.9 L2824.6 1167.5 L2825.1 1168.0 L2825.6 1168.5 L2826.1 1168.9 L2826.6 1169.4 L2827.1 1169.8 L2827.6 1170.3 L2828.1 1170.8 L2828.6 1171.3 L2829.1 1171.7 L2829.6 1172.2 L2830.0 1172.6 L2830.5 1173.1 L2830.9 1173.5 L2831.3 1173.9 L2831.7 1174.2 L2832.1 1174.5 L2832.4 1174.8 L2832.7 1175.1 L2832.9 1175.3 L2833.1 1175.6 L2833.3 1175.7 L2833.5 1175.9 L2833.6 1176.0 L2833.8 1176.1 L2833.9 1176.2 L2833.9 1176.3 L2834.0 1176.4 L2834.1 1176.4 L2834.1 1176.5 L2834.2 1176.6 Z M2638.9 992.5 L1156.7 -252.9 L746.0 1867.5 Z" fill="#000" fill-opacity=".4" fill-rule="evenodd"/>
</g>
<rect x="1763.8" y="256.3" width="16.4" height="16.4" fill="none" stroke="#fff" stroke-width="1.9"/>
<circle cx="1666.6" cy="296.2" r="5.0" fill="#b4b414" stroke="#000" stroke-width="1.5"/>
<text x="18.4" y="891.5" font-size="36.2" fill="#f2f2f2" textLength="250.6" lengthAdjust="spacingAndGlyphs" >Current Reading</text>
<text x="18.4" y="945.2" font-size="30" fill="#f2f2f2" textLength="117.6" lengthAdjust="spacingAndGlyphs" >x: 0,4086</text>
<text x="18.4" y="997.4" font-size="30" fill="#f2f2f2" textLength="117.6" lengthAdjust="spacingAndGlyphs" >y: 0,5265</text>
<text x="18.4" y="1050.4" font-size="30" fill="#f2f2f2" textLength="109.8" lengthAdjust="spacingAndGlyphs" >fL: 88,25</text>
<text x="18.4" y="1103" font-size="30" fill="#f2f2f2" textLength="182.6" lengthAdjust="spacingAndGlyphs" >cd/m²: 302,36</text>
<rect x="408" y="865" width="290" height="232" fill="#242424" />
<line x1="408" y1="900.9" x2="698" y2="900.9" stroke="#9a9a9a" stroke-width="1.5" />
<line x1="408" y1="982.8" x2="698" y2="982.8" stroke="#9a9a9a" stroke-width="1.5" />
<line x1="408" y1="1066.4" x2="698" y2="1066.4" stroke="#9a9a9a" stroke-width="1.5" />
<line x1="407" y1="865" x2="699" y2="865" stroke="#a8a8a8" stroke-width="2" />
<line x1="408" y1="864" x2="408" y2="1105" stroke="#a8a8a8" stroke-width="2" />
<line x1="698" y1="864" x2="698" y2="1105" stroke="#a8a8a8" stroke-width="2" />
<line x1="407" y1="1097" x2="699" y2="1097" stroke="#a8a8a8" stroke-width="2" />
<line x1="401" y1="900.9" x2="408" y2="900.9" stroke="#e0e0e0" stroke-width="2" />
<text x="381.8" y="907.3" font-size="17.8" fill="#e4e4e4" textLength="18.4" lengthAdjust="spacingAndGlyphs" >50</text>
<line x1="401" y1="982.8" x2="408" y2="982.8" stroke="#e0e0e0" stroke-width="2" />
<text x="391.2" y="989.2" font-size="17.8" fill="#e4e4e4" textLength="9" lengthAdjust="spacingAndGlyphs" >0</text>
<line x1="401" y1="1066.4" x2="408" y2="1066.4" stroke="#e0e0e0" stroke-width="2" />
<text x="375.6" y="1072.8" font-size="17.8" fill="#e4e4e4" textLength="24.6" lengthAdjust="spacingAndGlyphs" >-50</text>
<text x="490.2" y="858" font-size="17.6" fill="#e4e4e4" textLength="95" lengthAdjust="spacingAndGlyphs" >RGB Balance</text>
<text x="532.8" y="1117.6" font-size="17.8" fill="#e4e4e4" textLength="41.2" lengthAdjust="spacingAndGlyphs" >100%</text>
<rect x="437" y="982.2" width="77.6" height="30.4" fill="#000" />
<rect x="438.6" y="983.8" width="74.4" height="27.2" fill="url(#rbR)" />
<rect x="514.4" y="982.2" width="78.6" height="5.6" fill="#000" />
<rect x="516" y="983.7" width="75.4" height="2.6" fill="url(#rbG)" />
<rect x="593" y="881" width="78.2" height="102.6" fill="#000" />
<rect x="594.6" y="882.6" width="75" height="99.4" fill="url(#rbB)" />
<rect x="724" y="835.9" width="22" height="38.8" fill="#000" />
<rect x="746" y="835.9" width="806" height="38.8" fill="url(#thead)" />
<rect x="746" y="874.7" width="806" height="36.5" fill="#444444" />
<rect x="724" y="874.7" width="22" height="36.5" fill="url(#tl0)" />
<rect x="724" y="910.2" width="22" height="1" fill="#1c1c1c" />
<rect x="746" y="911.2" width="806" height="36.6" fill="#868686" />
<rect x="724" y="911.2" width="22" height="36.6" fill="url(#tl0)" />
<rect x="724" y="946.8" width="22" height="1" fill="#1c1c1c" />
<rect x="746" y="947.8" width="806" height="36.4" fill="#444444" />
<rect x="724" y="947.8" width="22" height="36.4" fill="url(#tl0)" />
<rect x="724" y="983.2" width="22" height="1" fill="#1c1c1c" />
<rect x="746" y="984.2" width="806" height="36.2" fill="#868686" />
<rect x="724" y="984.2" width="22" height="36.2" fill="url(#tl0)" />
<rect x="724" y="1019.4" width="22" height="1" fill="#1c1c1c" />
<rect x="746" y="1020.4" width="806" height="36.4" fill="#444444" />
<rect x="724" y="1020.4" width="22" height="36.4" fill="url(#tl0)" />
<rect x="724" y="1055.8" width="22" height="1" fill="#1c1c1c" />
<rect x="746" y="1056.8" width="806" height="36.4" fill="#868686" />
<rect x="724" y="1056.8" width="22" height="36.4" fill="url(#tl0)" />
<rect x="724" y="1092.2" width="22" height="1" fill="#1c1c1c" />
<text x="937.4" y="863.4" font-size="20.2" fill="#ffffff" textLength="45.8" lengthAdjust="spacingAndGlyphs" >20%</text>
<text x="1061.8" y="863.4" font-size="20.2" fill="#ffffff" textLength="45.8" lengthAdjust="spacingAndGlyphs" >40%</text>
<text x="1186.2" y="863.4" font-size="20.2" fill="#ffffff" textLength="45.8" lengthAdjust="spacingAndGlyphs" >60%</text>
<text x="1310.6" y="863.4" font-size="20.2" fill="#ffffff" textLength="45.8" lengthAdjust="spacingAndGlyphs" >80%</text>
<text x="1435" y="863.4" font-size="20.2" fill="#ffffff" textLength="60.2" lengthAdjust="spacingAndGlyphs" >100%</text>
<text x="753.4" y="901.9" font-size="20.2" fill="#ffffff" textLength="90" lengthAdjust="spacingAndGlyphs" >x: CIE31</text>
<text x="937.4" y="901.9" font-size="20.2" fill="#ffffff" textLength="77.8" lengthAdjust="spacingAndGlyphs" >0,3098</text>
<text x="1061.8" y="901.9" font-size="20.2" fill="#ffffff" textLength="77.8" lengthAdjust="spacingAndGlyphs" >0,3303</text>
<text x="1186.2" y="901.9" font-size="20.2" fill="#ffffff" textLength="77.8" lengthAdjust="spacingAndGlyphs" >0,3544</text>
<text x="1310.6" y="901.9" font-size="20.2" fill="#ffffff" textLength="77.8" lengthAdjust="spacingAndGlyphs" >0,3788</text>
<text x="1435" y="901.9" font-size="20.2" fill="#ffffff" textLength="77.8" lengthAdjust="spacingAndGlyphs" >0,4086</text>
<text x="753.4" y="938.32" font-size="20.2" fill="#f0f0f0" textLength="90.4" lengthAdjust="spacingAndGlyphs" >y: CIE31</text>
<text x="937.4" y="938.32" font-size="20.2" fill="#f0f0f0" textLength="77.8" lengthAdjust="spacingAndGlyphs" >0,3570</text>
<text x="1061.8" y="938.32" font-size="20.2" fill="#f0f0f0" textLength="77.8" lengthAdjust="spacingAndGlyphs" >0,3945</text>
<text x="1186.2" y="938.32" font-size="20.2" fill="#f0f0f0" textLength="77.8" lengthAdjust="spacingAndGlyphs" >0,4379</text>
<text x="1310.6" y="938.32" font-size="20.2" fill="#f0f0f0" textLength="77.8" lengthAdjust="spacingAndGlyphs" >0,4814</text>
<text x="1435" y="938.32" font-size="20.2" fill="#f0f0f0" textLength="77.8" lengthAdjust="spacingAndGlyphs" >0,5265</text>
<text x="753.4" y="974.74" font-size="20.2" fill="#ffffff" textLength="12.4" lengthAdjust="spacingAndGlyphs" >Y</text>
<text x="937.4" y="974.74" font-size="20.2" fill="#ffffff" textLength="107.4" lengthAdjust="spacingAndGlyphs" >341,2480</text>
<text x="1061.8" y="974.74" font-size="20.2" fill="#ffffff" textLength="107.4" lengthAdjust="spacingAndGlyphs" >332,3629</text>
<text x="1186.2" y="974.74" font-size="20.2" fill="#ffffff" textLength="107.4" lengthAdjust="spacingAndGlyphs" >323,9118</text>
<text x="1310.6" y="974.74" font-size="20.2" fill="#ffffff" textLength="107.4" lengthAdjust="spacingAndGlyphs" >316,7210</text>
<text x="1435" y="974.74" font-size="20.2" fill="#ffffff" textLength="107.4" lengthAdjust="spacingAndGlyphs" >302,3561</text>
<text x="753.4" y="1011.16" font-size="20.2" fill="#f0f0f0" textLength="165" lengthAdjust="spacingAndGlyphs" >Target x:CIE31</text>
<text x="937.4" y="1011.16" font-size="20.2" fill="#f0f0f0" textLength="77.8" lengthAdjust="spacingAndGlyphs" >0,3386</text>
<text x="1061.8" y="1011.16" font-size="20.2" fill="#f0f0f0" textLength="77.8" lengthAdjust="spacingAndGlyphs" >0,3620</text>
<text x="1186.2" y="1011.16" font-size="20.2" fill="#f0f0f0" textLength="77.8" lengthAdjust="spacingAndGlyphs" >0,3865</text>
<text x="1310.6" y="1011.16" font-size="20.2" fill="#f0f0f0" textLength="77.8" lengthAdjust="spacingAndGlyphs" >0,4114</text>
<text x="1435" y="1011.16" font-size="20.2" fill="#f0f0f0" textLength="77.8" lengthAdjust="spacingAndGlyphs" >0,4378</text>
<text x="753.4" y="1047.58" font-size="20.2" fill="#ffffff" textLength="165.4" lengthAdjust="spacingAndGlyphs" >Target y:CIE31</text>
<text x="937.4" y="1047.58" font-size="20.2" fill="#ffffff" textLength="77.8" lengthAdjust="spacingAndGlyphs" >0,3718</text>
<text x="1061.8" y="1047.58" font-size="20.2" fill="#ffffff" textLength="77.8" lengthAdjust="spacingAndGlyphs" >0,4105</text>
<text x="1186.2" y="1047.58" font-size="20.2" fill="#ffffff" textLength="77.8" lengthAdjust="spacingAndGlyphs" >0,4510</text>
<text x="1310.6" y="1047.58" font-size="20.2" fill="#ffffff" textLength="77.8" lengthAdjust="spacingAndGlyphs" >0,4922</text>
<text x="1435" y="1047.58" font-size="20.2" fill="#ffffff" textLength="77.8" lengthAdjust="spacingAndGlyphs" >0,5359</text>
<text x="753.4" y="1084" font-size="20.2" fill="#f0f0f0" textLength="95.4" lengthAdjust="spacingAndGlyphs" >Target Y</text>
<text x="937.4" y="1084" font-size="20.2" fill="#f0f0f0" textLength="107.4" lengthAdjust="spacingAndGlyphs" >343,0104</text>
<text x="1061.8" y="1084" font-size="20.2" fill="#f0f0f0" textLength="107.4" lengthAdjust="spacingAndGlyphs" >336,9008</text>
<text x="1186.2" y="1084" font-size="20.2" fill="#f0f0f0" textLength="107.4" lengthAdjust="spacingAndGlyphs" >331,8012</text>
<text x="1310.6" y="1084" font-size="20.2" fill="#f0f0f0" textLength="107.4" lengthAdjust="spacingAndGlyphs" >327,5959</text>
<text x="1435" y="1084" font-size="20.2" fill="#f0f0f0" textLength="107.4" lengthAdjust="spacingAndGlyphs" >323,9298</text>
<rect x="0" y="1130.4" width="1920" height="53.6" fill="url(#barbg)" />
<rect x="1.9" y="1130.6" width="38" height="52" rx="3.5" fill="url(#bbtn)"/>
<circle cx="20.6" cy="1138.6" r="6" fill="#5e5e5e"/>
<path d="M17.2 1140 L20.6 1136.4 L24 1140 Z" fill="#111"/>
<rect x="6" y="1152.6" width="30" height="25.4" rx="2.5" fill="#ffff00"/>
<rect x="44.8" y="1130.6" width="127.2" height="52" rx="4" fill="url(#bbtn)"/>
<rect x="45.3" y="1131.1" width="126.2" height="51" rx="4" fill="none" stroke="#b0b0b0" stroke-opacity=".45" stroke-width="1"/>
<rect x="49.8" y="1135.4" width="117.6" height="29.8" rx="2.5" fill="#c3c3a1"/>
<text x="99.5" y="1177.8" font-size="8.8" fill="#2e2e2e" textLength="17.4" lengthAdjust="spacingAndGlyphs" font-weight="bold" >20%</text>
<rect x="173.3" y="1130.6" width="127.2" height="52" rx="4" fill="url(#bbtn)"/>
<rect x="173.8" y="1131.1" width="126.2" height="51" rx="4" fill="none" stroke="#b0b0b0" stroke-opacity=".45" stroke-width="1"/>
<rect x="178.3" y="1135.4" width="117.6" height="29.8" rx="2.5" fill="#c3c183"/>
<text x="228" y="1177.8" font-size="8.8" fill="#2e2e2e" textLength="17.4" lengthAdjust="spacingAndGlyphs" font-weight="bold" >40%</text>
<rect x="301.8" y="1130.6" width="127.2" height="52" rx="4" fill="url(#bbtn)"/>
<rect x="302.3" y="1131.1" width="126.2" height="51" rx="4" fill="none" stroke="#b0b0b0" stroke-opacity=".45" stroke-width="1"/>
<rect x="306.8" y="1135.4" width="117.6" height="29.8" rx="2.5" fill="#c3c168"/>
<text x="356.5" y="1177.8" font-size="8.8" fill="#2e2e2e" textLength="17.4" lengthAdjust="spacingAndGlyphs" font-weight="bold" >60%</text>
<rect x="430.3" y="1130.6" width="127.2" height="52" rx="4" fill="url(#bbtn)"/>
<rect x="430.8" y="1131.1" width="126.2" height="51" rx="4" fill="none" stroke="#b0b0b0" stroke-opacity=".45" stroke-width="1"/>
<rect x="435.3" y="1135.4" width="117.6" height="29.8" rx="2.5" fill="#c3be3e"/>
<text x="485" y="1177.8" font-size="8.8" fill="#2e2e2e" textLength="17.4" lengthAdjust="spacingAndGlyphs" font-weight="bold" >80%</text>
<rect x="558.8" y="1130.6" width="127.2" height="52" rx="4" fill="url(#bsel)"/>
<rect x="563.8" y="1135.4" width="117.6" height="29.8" rx="2.5" fill="#c6c200"/>
<text x="610.7" y="1177.8" font-size="8.8" fill="#ffffff" textLength="23" lengthAdjust="spacingAndGlyphs" font-weight="bold" >100%</text>
<rect x="1646.1" y="1130.8" width="39.8" height="15.1" rx="3" fill="url(#bbtn2)"/>
<rect x="1646.6" y="1131.3" width="38.8" height="14.1" rx="3" fill="none" stroke="#d0d0d0" stroke-opacity=".35" stroke-width="1"/>
<circle cx="1666" cy="1137.6" r="6" fill="#6c6c6c"/>
<path d="M1662.4 1139.6 L1666 1135.6 L1669.6 1139.6 Z" fill="#222"/>
<rect x="1646.1" y="1146.9" width="39.8" height="35.1" rx="3" fill="url(#bbtn2)"/>
<rect x="1646.6" y="1147.4" width="38.8" height="34.1" rx="3" fill="none" stroke="#d0d0d0" stroke-opacity=".35" stroke-width="1"/>
<rect x="1653.8" y="1152.2" width="24.6" height="24" rx="3.5" fill="#cfcfcf" stroke="#222" stroke-width="2.2"/>
<rect x="1660.4" y="1158.8" width="11.4" height="11.2" fill="#000" />
<rect x="1687.8" y="1130.8" width="37.7" height="25.1" rx="2" fill="url(#bbtn2)"/>
<rect x="1688.3" y="1131.3" width="36.7" height="24.1" rx="2" fill="none" stroke="#d0d0d0" stroke-opacity=".35" stroke-width="1"/>
<circle cx="1706.65" cy="1143.4" r="8" fill="url(#icoc)"/>
<rect x="1703.65" y="1140.4" width="6" height="6" fill="#2a2a2a" />
<rect x="1726.3" y="1130.8" width="37.3" height="25.1" rx="2" fill="url(#bbtn2)"/>
<rect x="1726.8" y="1131.3" width="36.3" height="24.1" rx="2" fill="none" stroke="#d0d0d0" stroke-opacity=".35" stroke-width="1"/>
<circle cx="1744.95" cy="1143.4" r="8" fill="url(#icoc)"/>
<path d="M1742.35 1139.2 L1748.55 1143.4 L1742.35 1147.6 Z" fill="#2a2a2a"/>
<rect x="1764.4" y="1130.8" width="37" height="25.1" rx="2" fill="url(#bbtn2)"/>
<rect x="1764.9" y="1131.3" width="36" height="24.1" rx="2" fill="none" stroke="#d0d0d0" stroke-opacity=".35" stroke-width="1"/>
<circle cx="1782.9" cy="1143.4" r="8" fill="url(#icoc)"/>
<path d="M1780.9 1139.6 H1779.3 V1147.2 H1780.9 M1784.9 1139.6 H1786.5 V1147.2 H1784.9" fill="none" stroke="#2a2a2a" stroke-width="1.5"/>
<path d="M1781.3 1143.4 H1784.5" stroke="#2a2a2a" stroke-width="1.2" stroke-dasharray="1 1"/>
<rect x="1802.2" y="1130.8" width="37.5" height="25.1" rx="2" fill="url(#bbtn2)"/>
<rect x="1802.7" y="1131.3" width="36.5" height="24.1" rx="2" fill="none" stroke="#d0d0d0" stroke-opacity=".35" stroke-width="1"/>
<circle cx="1820.95" cy="1143.4" r="8" fill="url(#icoc)"/>
<text x="1820.95" y="1147.4" font-size="13" fill="#2a2a2a" text-anchor="middle" font-weight="bold" >∞</text>
<rect x="1840.5" y="1130.8" width="37.6" height="25.1" rx="2" fill="url(#bbtn2)"/>
<rect x="1841" y="1131.3" width="36.6" height="24.1" rx="2" fill="none" stroke="#d0d0d0" stroke-opacity=".35" stroke-width="1"/>
<circle cx="1859.3" cy="1143.4" r="8" fill="url(#icoc)"/>
<path d="M1855.3 1142.6 A4.2 4.2 0 0 1 1862.3 1140.6 M1863.3 1144.2 A4.2 4.2 0 0 1 1856.3 1146.2" fill="none" stroke="#2a2a2a" stroke-width="1.8"/>
<path d="M1860.7 1141.6 L1864.3 1138.4 L1864.3 1142.6 Z M1857.9 1145.2 L1854.3 1148.4 L1854.3 1144.2 Z" fill="#2a2a2a"/>
<circle cx="1898.4" cy="1143.4" r="9" fill="#2c2c2c" opacity=".85"/>
<rect x="1687.8" y="1157.1" width="114.4" height="24.9" rx="3" fill="url(#bbtn2)"/>
<rect x="1688.3" y="1157.6" width="113.4" height="23.9" rx="3" fill="none" stroke="#d0d0d0" stroke-opacity=".35" stroke-width="1"/>
<rect x="1803.3" y="1157.1" width="114.5" height="24.9" rx="3" fill="url(#bbtn2)"/>
<rect x="1803.8" y="1157.6" width="113.5" height="23.9" rx="3" fill="none" stroke="#d0d0d0" stroke-opacity=".35" stroke-width="1"/>
<circle cx="1713.8" cy="1169.8" r="8" fill="url(#icoc)"/>
<circle cx="1894.8" cy="1169.8" r="8" fill="url(#icoc)"/>
<path d="M1713.2 1166 L1710 1169.8 L1713.2 1173.6 M1717.4 1166 L1714.2 1169.8 L1717.4 1173.6" fill="none" stroke="#333" stroke-width="1.3"/>
<path d="M1891.4 1166 L1894.6 1169.8 L1891.4 1173.6 M1895.6 1166 L1898.8 1169.8 L1895.6 1173.6" fill="none" stroke="#333" stroke-width="1.3"/>
<text x="1736.2" y="1176" font-size="18.4" fill="#2e2e2e" textLength="42.4" lengthAdjust="spacingAndGlyphs" stroke="#2e2e2e" stroke-width=".5">Back</text>
<text x="1826.6" y="1176" font-size="18.4" fill="#2e2e2e" textLength="43.4" lengthAdjust="spacingAndGlyphs" stroke="#2e2e2e" stroke-width=".5">Next</text>
<rect x="0" y="0" width="1920" height="1" fill="#2d9be0" />
<rect x="0" y="0" width="1" height="1184" fill="#2d9be0" />
<rect x="1918.75" y="0" width="1.25" height="1184" fill="#2d9be0" />
<rect x="0" y="1182.7" width="1920" height="1.3" fill="#2d9be0" />
</svg></div></body></html>
